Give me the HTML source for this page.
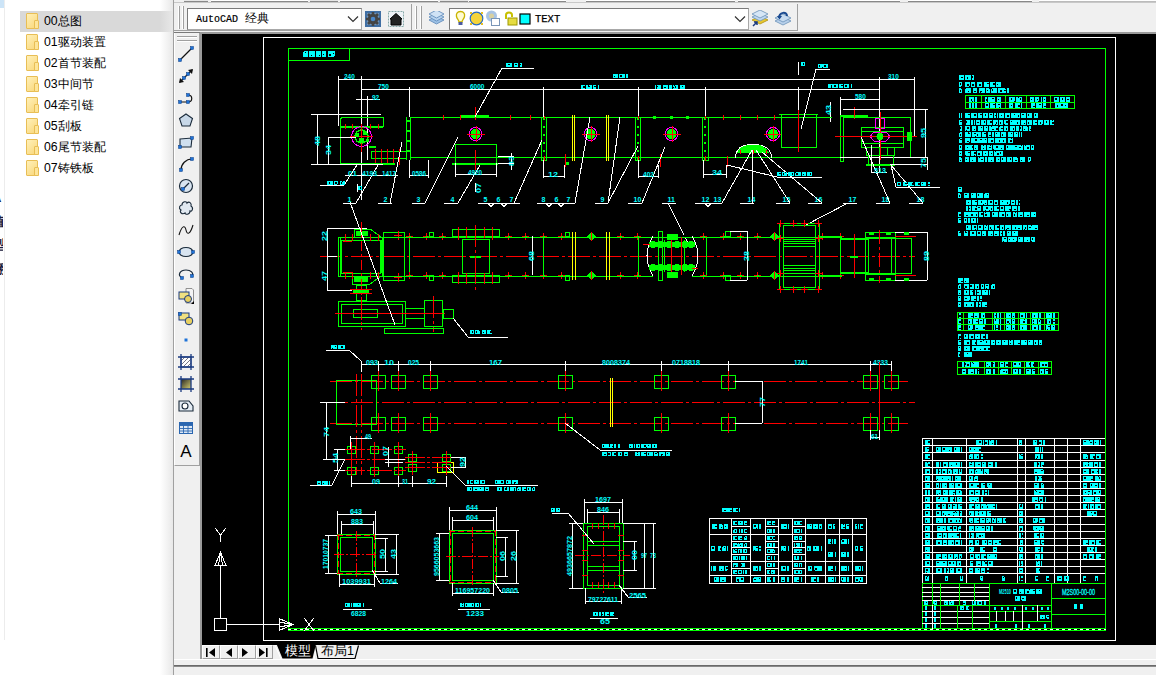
<!DOCTYPE html>
<html><head><meta charset="utf-8">
<style>
*{margin:0;padding:0;box-sizing:border-box}
html,body{width:1156px;height:675px;overflow:hidden;background:#f0f0f0;font-family:"Liberation Sans",sans-serif}
.abs{position:absolute}
#left{left:0;top:0;width:173px;height:675px;background:#fff}
#left .row{position:absolute;left:20px;width:153px;height:21px}
#left .row.sel{background:#d9d9d9}
#left .fold{position:absolute;left:6px;top:2px;width:12px;height:16px;background:linear-gradient(135deg,#fff0b8,#f9d77a);border:1px solid #e8be55;border-radius:1px}
#left .fold:after{content:"";position:absolute;right:-2px;bottom:-1px;width:3px;height:7px;background:#fde59a;border:1px solid #e8be55;border-radius:1px 1px 0 0}
#left .txt{position:absolute;left:24px;top:2px;font-size:12.3px;color:#000;line-height:17px;white-space:nowrap}
#cv{left:202px;top:34px;width:954px;height:611px;background:#000}
svg text{font-family:"Liberation Sans",sans-serif}
.combo{background:#fff;border:1px solid #7a7a7a;border-bottom-color:#a8a8a8;border-right-color:#a8a8a8}
.mono{font-family:"Liberation Mono",monospace;font-size:12px;color:#000;white-space:nowrap}
.tbtn{background:#f0f0f0;border:1px solid #fff;border-right-color:#a0a0a0;border-bottom-color:#a0a0a0}
</style></head><body>
<div id="left" class="abs">
  <div class="abs" style="left:0;top:0;width:4px;height:8px;background:#cce4f7"></div>
  <div class="abs" style="left:4px;top:0;width:1px;height:640px;background:#ececec"></div>
  <div class="row sel" style="top:11px"><div class="fold"></div><div class="txt">00总图</div></div>
  <div class="row" style="top:32px"><div class="fold"></div><div class="txt">01驱动装置</div></div>
  <div class="row" style="top:53px"><div class="fold"></div><div class="txt">02首节装配</div></div>
  <div class="row" style="top:74px"><div class="fold"></div><div class="txt">03中间节</div></div>
  <div class="row" style="top:95px"><div class="fold"></div><div class="txt">04牵引链</div></div>
  <div class="row" style="top:116px"><div class="fold"></div><div class="txt">05刮板</div></div>
  <div class="row" style="top:137px"><div class="fold"></div><div class="txt">06尾节装配</div></div>
  <div class="row" style="top:158px"><div class="fold"></div><div class="txt">07铸铁板</div></div>
  <div class="abs" style="left:0;top:186px;width:3px;height:95px;overflow:hidden"><div style="margin-left:-8px;font-size:13px;line-height:23.5px;color:#1a1a40;font-weight:bold">A<br>值<br>型<br>翻</div></div>
</div>
<div class="abs" style="left:160px;top:0;width:13px;height:675px;background:linear-gradient(to right,rgba(240,240,240,0),#e8e8e8)"></div>
<div class="abs" style="left:173px;top:0;width:1px;height:675px;background:#a0a0a0"></div>
<!-- top strip (bottom of previous toolbar row) -->
<div class="abs" style="left:174px;top:0;width:982px;height:3px;background:#f0f0f0;border-bottom:1px solid #c8c8c8"></div>
<div class="abs" style="left:184px;top:0;width:24px;height:2px;background:#e6e6e6;border-bottom:1px solid #888"></div>
<div class="abs" style="left:211px;top:0;width:97px;height:2px;background:#fff;border-bottom:1px solid #888"></div>
<div class="abs" style="left:310px;top:0;width:28px;height:2px;background:#e6e6e6;border-bottom:1px solid #888"></div>
<div class="abs" style="left:340px;top:0;width:98px;height:2px;background:#fff;border-bottom:1px solid #888"></div>
<div class="abs" style="left:440px;top:0;width:28px;height:2px;background:#e6e6e6;border-bottom:1px solid #888"></div>
<div class="abs" style="left:469px;top:0;width:97px;height:2px;background:#fff;border-bottom:1px solid #888"></div>
<div class="abs" style="left:586px;top:0;width:149px;height:2px;background:#fff;border-bottom:1px solid #888"></div>
<div class="abs" style="left:738px;top:0;width:162px;height:2px;background:#fff;border-bottom:1px solid #888"></div>
<div class="abs" style="left:908px;top:0;width:124px;height:2px;background:#fff;border-bottom:1px solid #888"></div>
<div class="abs" style="left:1039px;top:0;width:117px;height:2px;background:#fff;border-bottom:1px solid #bbb"></div>
<!-- toolbar 1 -->
<div class="abs" style="left:174px;top:4px;width:238px;height:27px;border-right:1px solid #a0a0a0;border-bottom:1px solid #a0a0a0;background:#f0f0f0"></div>
<div class="abs" style="left:178px;top:6px;width:2px;height:23px;border-left:1px solid #fff;border-right:1px solid #a0a0a0"></div>
<div class="abs" style="left:182px;top:6px;width:2px;height:23px;border-left:1px solid #fff;border-right:1px solid #a0a0a0"></div>
<div class="abs combo" style="left:187px;top:8px;width:175px;height:22px"></div>
<div class="abs mono" style="left:196px;top:12px;line-height:14px"><span style="font-size:10px;font-family:'Liberation Mono';-webkit-text-stroke:0.2px #000">AutoCAD</span><span style="font-size:12px"> 经典</span></div>
<svg class="abs" style="left:347px;top:15px" width="12" height="8"><path d="M1 1.5 L6 6.5 L11 1.5" stroke="#333" stroke-width="1.2" fill="none"/></svg>
<svg class="abs" style="left:365px;top:11px" width="16" height="16" viewBox="0 0 16 16">
 <rect x="0" y="0" width="16" height="16" fill="#3f6ea3"/>
 <rect x="2" y="2" width="12" height="12" fill="#9bb6d3" opacity="0.5"/>
 <circle cx="8" cy="8" r="5.2" fill="#444"/>
 <g stroke="#444" stroke-width="2.6"><line x1="8" y1="1" x2="8" y2="15"/><line x1="1" y1="8" x2="15" y2="8"/><line x1="3" y1="3" x2="13" y2="13"/><line x1="13" y1="3" x2="3" y2="13"/></g>
 <circle cx="8" cy="8" r="2.3" fill="#4a86c8"/>
</svg>
<svg class="abs" style="left:388px;top:11px" width="16" height="16" viewBox="0 0 16 16">
 <rect x="0.5" y="0.5" width="15" height="15" fill="#eef2f6" stroke="#8aa" stroke-dasharray="2 1"/>
 <path d="M2 8 L8 2.5 L14 8 L13 8 L13 14 L3 14 L3 8 Z" fill="#222" stroke="#000"/>
</svg>
<!-- toolbar 2 -->
<div class="abs" style="left:412px;top:4px;width:386px;height:27px;border-right:1px solid #a0a0a0;border-bottom:1px solid #a0a0a0;background:#f0f0f0"></div>
<div class="abs" style="left:415px;top:6px;width:2px;height:23px;border-left:1px solid #fff;border-right:1px solid #a0a0a0"></div>
<div class="abs" style="left:420px;top:6px;width:2px;height:23px;border-left:1px solid #fff;border-right:1px solid #a0a0a0"></div>
<svg class="abs" style="left:428px;top:11px" width="17" height="15" viewBox="0 0 17 15">
 <path d="M1 9 L8.5 13 L16 9 L8.5 5 Z" fill="#9cc0e4" stroke="#5a86b8" stroke-width="0.8"/>
 <path d="M1 6 L8.5 10 L16 6 L8.5 2 Z" fill="#b8d4ef" stroke="#5a86b8" stroke-width="0.8"/>
 <path d="M1 3 L8.5 7 L16 3 L8.5 -1 Z" fill="#cfe2f5" stroke="#5a86b8" stroke-width="0.8"/>
</svg>
<div class="abs combo" style="left:449px;top:8px;width:300px;height:22px"></div>
<svg class="abs" style="left:455px;top:10px" width="80" height="17" viewBox="0 0 80 17">
 <path d="M5.5 1.5 C2 1.5 1 4 1.5 6.5 C2 9 4 10 4 12 L7 12 C7 10 9 9 9.5 6.5 C10 4 9 1.5 5.5 1.5 Z" fill="#fffbd0" stroke="#c8b400" stroke-width="1.3"/>
 <rect x="3.5" y="12" width="4" height="3" fill="#4a5aa0"/>
 <circle cx="21.5" cy="8.5" r="6.3" fill="#f4d43a" stroke="#2a6bc0" stroke-width="1.2"/>
 <rect x="15" y="2" width="2" height="2" fill="#e8c020"/><rect x="26" y="2" width="2" height="2" fill="#e8c020"/><rect x="15" y="13" width="2" height="2" fill="#e8c020"/><rect x="26" y="13" width="2" height="2" fill="#e8c020"/>
 <circle cx="36.5" cy="6" r="5.5" fill="#a8c4e4"/><circle cx="36.5" cy="6" r="2.5" fill="#d8d0a0"/>
 <rect x="36.5" y="8.5" width="8" height="7" fill="#fff" stroke="#7a96b8"/>
 <path d="M51 9 L51 5 C51 1.5 57 1.5 57 5 L57 7" stroke="#c8c000" stroke-width="2" fill="none"/>
 <rect x="53" y="8" width="9" height="7" fill="#e6dc40" stroke="#a09a00"/>
 <rect x="65" y="4" width="10" height="10" fill="#00ffff" stroke="#000" stroke-width="1.2"/>
</svg>
<div class="abs mono" style="left:535px;top:12px;line-height:14px;font-size:10.5px;-webkit-text-stroke:0.25px #000">TEXT</div>
<svg class="abs" style="left:734px;top:15px" width="12" height="8"><path d="M1 1.5 L6 6.5 L11 1.5" stroke="#333" stroke-width="1.2" fill="none"/></svg>
<svg class="abs" style="left:751px;top:10px" width="18" height="17" viewBox="0 0 18 17">
 <path d="M1 10 L9 14 L17 10 L9 6 Z" fill="#e8c830" stroke="#b09010" stroke-width="0.8"/>
 <path d="M1 7 L9 11 L17 7 L9 3 Z" fill="#c0d8f0" stroke="#6a90b8" stroke-width="0.8"/>
 <path d="M1 4 L9 8 L17 4 L9 0 Z" fill="#d6e6f6" stroke="#6a90b8" stroke-width="0.8"/>
 <path d="M2 16 L6 12 M3 12 L6 12 L6 15" stroke="#1a3a80" stroke-width="1.5" fill="none"/>
</svg>
<svg class="abs" style="left:774px;top:10px" width="18" height="17" viewBox="0 0 18 17">
 <path d="M1 11 L9 15 L17 11 L9 7 Z" fill="#b8d0ea" stroke="#6a90b8" stroke-width="0.8"/>
 <path d="M1 8 L9 12 L17 8 L9 4 Z" fill="#c8dcf0" stroke="#6a90b8" stroke-width="0.8"/>
 <path d="M5 8 C5 2 13 1 13 6" stroke="#1a4a90" stroke-width="2" fill="none"/>
 <path d="M3 6 L5.5 9.5 L8 6 Z" fill="#1a4a90"/>
</svg>
<div class="abs" style="left:174px;top:31px;width:982px;height:2px;background:#f0f0f0;border-bottom:1px solid #7a7a7a"></div>
<!-- left draw toolbar -->
<div class="abs" style="left:174px;top:33px;width:26px;height:433px;background:#f0f0f0;border-right:1px solid #a0a0a0;border-bottom:1px solid #a0a0a0;border-left:1px solid #fff"></div>
<div class="abs" style="left:177px;top:36px;width:20px;height:2px;border-top:1px solid #a0a0a0;border-bottom:1px solid #fff"></div>
<div class="abs" style="left:177px;top:40px;width:20px;height:2px;border-top:1px solid #a0a0a0;border-bottom:1px solid #fff"></div>
<svg class="abs" style="left:174px;top:33px" width="26" height="433" viewBox="0 0 26 433">
<g transform="translate(4,13)"><line x1="2" y1="14" x2="14" y2="2" stroke="#111" stroke-width="1.2"/><rect x="0.5" y="12.5" width="3" height="3" fill="#1e73d8" stroke="#0a3a80" stroke-width="0.5"/><rect x="12.5" y="0.5" width="3" height="3" fill="#1e73d8" stroke="#0a3a80" stroke-width="0.5"/></g>
<g transform="translate(4,35)"><line x1="2" y1="14" x2="14" y2="2" stroke="#111" stroke-width="1.2"/><path d="M1 15 L2 10 L6 14 Z M15 1 L14 6 L10 2 Z" fill="#111"/><rect x="4.5" y="8.5" width="3" height="3" fill="#1e73d8" stroke="#0a3a80" stroke-width="0.5"/><rect x="8.5" y="4.5" width="3" height="3" fill="#1e73d8" stroke="#0a3a80" stroke-width="0.5"/></g>
<g transform="translate(4,57)"><path d="M2 12 L11 12 M10 5 C15 5 15 12 10 12" stroke="#111" stroke-width="1.2" fill="none"/><rect x="0.5" y="10.5" width="3" height="3" fill="#1e73d8" stroke="#0a3a80" stroke-width="0.5"/><rect x="8.5" y="10.5" width="3" height="3" fill="#1e73d8" stroke="#0a3a80" stroke-width="0.5"/><rect x="8.5" y="3.5" width="3" height="3" fill="#1e73d8" stroke="#0a3a80" stroke-width="0.5"/></g>
<g transform="translate(4,79)"><path d="M8 2 L14.5 6.5 L12 14 L4 14 L1.5 6.5 Z" fill="#c8d8e8" stroke="#1a2a3a" stroke-width="1.1"/></g>
<g transform="translate(4,101)"><path d="M2 5 L14 4 L13 13 L2 13 Z" fill="#d0e0ef" stroke="#1a2a3a" stroke-width="1.1"/><rect x="0.5" y="11.5" width="3" height="3" fill="#1e73d8" stroke="#0a3a80" stroke-width="0.5"/><rect x="12.5" y="2.5" width="3" height="3" fill="#1e73d8" stroke="#0a3a80" stroke-width="0.5"/></g>
<g transform="translate(4,123)"><path d="M3 14 C3 8 8 3 14 3" stroke="#111" stroke-width="1.2" fill="none"/><rect x="1.5" y="12.5" width="3" height="3" fill="#1e73d8" stroke="#0a3a80" stroke-width="0.5"/><rect x="12.5" y="1.5" width="3" height="3" fill="#1e73d8" stroke="#0a3a80" stroke-width="0.5"/></g>
<g transform="translate(4,145)"><circle cx="8" cy="8" r="6.5" fill="#d8e4f0" stroke="#1a2a3a" stroke-width="1.2"/><line x1="5" y1="11" x2="11" y2="5" stroke="#1a2a3a" stroke-width="1.2"/><rect x="3.5" y="9.5" width="3" height="3" fill="#1e73d8" stroke="#0a3a80" stroke-width="0.5"/></g>
<g transform="translate(4,167)"><path d="M4 5 C4 1 9 1 9 3 C11 1 14 3 13 6 C16 8 14 12 12 11 C12 15 7 15 7 13 C4 15 1 12 3 10 C0 8 2 5 4 5 Z" fill="#e0e8f0" stroke="#1a2a3a" stroke-width="1.1"/></g>
<g transform="translate(4,189)"><path d="M1 13 C4 3 7 3 8 8 C9 13 12 13 15 3" stroke="#111" stroke-width="1.1" fill="none"/></g>
<g transform="translate(4,211)"><ellipse cx="8" cy="8" rx="7" ry="4.5" fill="#d8e4f0" stroke="#1a2a3a" stroke-width="1.2"/><rect x="-0.5" y="6.5" width="3" height="3" fill="#1e73d8" stroke="#0a3a80" stroke-width="0.5"/><rect x="13.5" y="6.5" width="3" height="3" fill="#1e73d8" stroke="#0a3a80" stroke-width="0.5"/></g>
<g transform="translate(4,233)"><path d="M4 12 C-1 9 2 4 8 4 C13 4 16 7 14 10" stroke="#1a2a3a" stroke-width="1.2" fill="none"/><rect x="2.5" y="10.5" width="3" height="3" fill="#1e73d8" stroke="#0a3a80" stroke-width="0.5"/><rect x="12.5" y="8.5" width="3" height="3" fill="#1e73d8" stroke="#0a3a80" stroke-width="0.5"/></g>
<g transform="translate(4,255)"><path d="M8 0.5 L14 0.5 L15.5 2 L15.5 15 L8 15 Z" fill="#f4f4f4" stroke="#777" stroke-width="0.8"/><rect x="1" y="4" width="10" height="7" fill="#f0e080" stroke="#1a3a80"/><circle cx="10" cy="11" r="3.5" fill="#e8d060" stroke="#1a3a80"/><path d="M13 16 L16 13 L16 16 Z" fill="#000"/></g>
<g transform="translate(4,277)"><rect x="1" y="3" width="10" height="7" fill="#f0e080" stroke="#1a3a80"/><circle cx="11" cy="11" r="3.8" fill="#e8d060" stroke="#1a3a80"/><rect x="0.5" y="2.5" width="3" height="3" fill="#1e73d8" stroke="#0a3a80" stroke-width="0.5"/></g>
<g transform="translate(4,299)"><rect x="6.5" y="6.5" width="3" height="3" fill="#1e73d8"/></g>
<g transform="translate(4,321)"><rect x="3" y="3" width="10" height="10" fill="#fff" stroke="#1a3a80"/><path d="M3 7 L7 3 M3 11 L11 3 M5 13 L13 5 M9 13 L13 9" stroke="#667" stroke-width="0.9"/><path d="M0 3 L16 3 M0 13 L16 13 M3 0 L3 16 M13 0 L13 16" stroke="#1a3a80" stroke-width="1.3"/></g>
<g transform="translate(4,343)"><defs><linearGradient id="gr1" x1="0" y1="0" x2="1" y2="1"><stop offset="0" stop-color="#222"/><stop offset="1" stop-color="#d8d070"/></linearGradient></defs><rect x="3" y="3" width="10" height="10" fill="url(#gr1)"/><path d="M0 3 L16 3 M0 13 L16 13 M3 0 L3 16 M13 0 L13 16" stroke="#1a3a80" stroke-width="1.3"/></g>
<g transform="translate(4,365)"><path d="M1 3 L11 3 L15 8 L15 13 L1 13 Z" fill="#e4ecf4" stroke="#1a2a3a" stroke-width="1.1"/><circle cx="7" cy="8" r="3" fill="#fff" stroke="#1a2a3a" stroke-width="1.1"/></g>
<g transform="translate(4,387)"><rect x="1.5" y="2.5" width="13" height="11" fill="#dde8f5" stroke="#2a66b0"/><path d="M1.5 5.5 L14.5 5.5 M1.5 8.5 L14.5 8.5 M1.5 11 L14.5 11 M5.5 2.5 L5.5 13.5 M10 2.5 L10 13.5" stroke="#2a66b0" stroke-width="0.9"/><rect x="1.5" y="2.5" width="13" height="3" fill="#2a66b0"/></g>
<g transform="translate(4,409)"><text x="8" y="14.5" font-size="17" text-anchor="middle" fill="#000" font-family="Liberation Sans">A</text></g>
</svg>
<div class="abs" style="left:200px;top:32px;width:956px;height:613px;background:#fff;border-top:2px solid #9a9a9a;border-left:2px solid #9a9a9a;box-shadow:inset 1px 1px 0 #696969"></div>
<div id="cv" class="abs"></div>
<svg class="abs" style="left:0;top:0" width="1156" height="675" viewBox="0 0 1156 675">
<g shape-rendering="crispEdges">
<rect x="263.5" y="37.5" width="852" height="603" stroke="#ffffff" stroke-width="1" fill="none"/>
<line x1="288" y1="48.5" x2="1105" y2="48.5" stroke="#00ff00" stroke-width="1" />
<line x1="288.5" y1="48" x2="288.5" y2="631" stroke="#00ff00" stroke-width="1" />
<line x1="1105.5" y1="48" x2="1105.5" y2="631" stroke="#00ff00" stroke-width="1" />
<line x1="288" y1="628.5" x2="1106" y2="628.5" stroke="#00ff00" stroke-width="1" />
<line x1="288" y1="630.5" x2="1106" y2="630.5" stroke="#00ff00" stroke-width="1" />
<line x1="288" y1="629.5" x2="1106" y2="629.5" stroke="#ffffff" stroke-width="1" stroke-dasharray="3 3"/>
<rect x="288.5" y="48.5" width="61" height="12" stroke="#00ff00" stroke-width="1" fill="none"/>
<rect x="303" y="51" width="5" height="6" fill="#00ffff"/>
<rect x="305" y="52" width="1" height="1" fill="#000"/>
<rect x="303" y="51" width="1" height="1" fill="#000"/>
<rect x="309" y="51" width="6" height="6" fill="#00ffff"/>
<rect x="311" y="55" width="1" height="1" fill="#000"/>
<rect x="316" y="51" width="5" height="6" fill="#00ffff"/>
<rect x="319" y="55" width="1" height="1" fill="#000"/>
<rect x="322" y="51" width="5" height="6" fill="#00ffff"/>
<rect x="323" y="54" width="1" height="1" fill="#000"/>
<rect x="326" y="51" width="1" height="6" fill="#000"/>
<rect x="328" y="51" width="4" height="6" fill="#00ffff"/>
<rect x="329" y="54" width="2" height="2" fill="#000"/>
<rect x="332" y="51" width="3" height="6" fill="#00ffff"/>
<rect x="333" y="53" width="1" height="1" fill="#000"/>
<rect x="334" y="56" width="1" height="1" fill="#000"/>
<line x1="338" y1="79.5" x2="914" y2="79.5" stroke="#ffffff" stroke-width="1" />
<line x1="338.5" y1="76" x2="338.5" y2="126" stroke="#ffffff" stroke-width="1" />
<line x1="914.5" y1="77" x2="914.5" y2="137" stroke="#ffffff" stroke-width="1" />
<text x="344" y="78.5" fill="#00ffff" font-size="6.5" text-anchor="start" font-weight="bold">240</text>
<text x="470" y="88.5" fill="#00ffff" font-size="6.5" text-anchor="start" font-weight="bold">6000</text>
<rect x="613" y="74" width="5" height="4" fill="#00ffff"/>
<rect x="614" y="76" width="1" height="1" fill="#000"/>
<rect x="619" y="74" width="6" height="4" fill="#00ffff"/>
<rect x="620" y="75" width="2" height="2" fill="#000"/>
<rect x="623" y="77" width="1" height="-2" fill="#000"/>
<rect x="626" y="74" width="2" height="4" fill="#00ffff"/>
<text x="888" y="78.5" fill="#00ffff" font-size="6.5" text-anchor="start" font-weight="bold">310</text>
<line x1="361" y1="89.5" x2="879" y2="89.5" stroke="#ffffff" stroke-width="1" />
<line x1="361.5" y1="76" x2="361.5" y2="200" stroke="#ffffff" stroke-width="1" />
<text x="378" y="88.5" fill="#00ffff" font-size="6.5" text-anchor="start" font-weight="bold">750</text>
<rect x="581" y="85" width="4" height="4" fill="#00ffff"/>
<rect x="583" y="86" width="2" height="2" fill="#000"/>
<rect x="586" y="85" width="4" height="4" fill="#00ffff"/>
<rect x="588" y="86" width="2" height="1" fill="#000"/>
<rect x="588" y="85" width="1" height="1" fill="#000"/>
<rect x="590" y="85" width="6" height="4" fill="#00ffff"/>
<rect x="594" y="86" width="2" height="1" fill="#000"/>
<rect x="592" y="85" width="1" height="4" fill="#000"/>
<rect x="598" y="85" width="1" height="4" fill="#00ffff"/>
<rect x="655" y="85" width="6" height="4" fill="#00ffff"/>
<rect x="657" y="86" width="1" height="1" fill="#000"/>
<rect x="656" y="85" width="1" height="4" fill="#000"/>
<rect x="663" y="85" width="5" height="4" fill="#00ffff"/>
<rect x="664" y="87" width="2" height="1" fill="#000"/>
<rect x="669" y="85" width="5" height="4" fill="#00ffff"/>
<rect x="672" y="87" width="2" height="1" fill="#000"/>
<rect x="672" y="85" width="1" height="4" fill="#000"/>
<rect x="674" y="85" width="4" height="4" fill="#00ffff"/>
<rect x="675" y="86" width="1" height="2" fill="#000"/>
<rect x="674" y="85" width="1" height="1" fill="#000"/>
<rect x="680" y="85" width="5" height="4" fill="#00ffff"/>
<rect x="682" y="86" width="1" height="1" fill="#000"/>
<rect x="828" y="84" width="5" height="4" fill="#00ffff"/>
<rect x="831" y="85" width="1" height="2" fill="#000"/>
<rect x="831" y="87" width="1" height="1" fill="#000"/>
<rect x="833" y="84" width="5" height="4" fill="#00ffff"/>
<rect x="834" y="85" width="2" height="2" fill="#000"/>
<rect x="839" y="84" width="4" height="4" fill="#00ffff"/>
<rect x="841" y="85" width="2" height="1" fill="#000"/>
<rect x="844" y="84" width="5" height="4" fill="#00ffff"/>
<rect x="845" y="85" width="2" height="2" fill="#000"/>
<rect x="851" y="84" width="1" height="4" fill="#00ffff"/>
<line x1="409.5" y1="87" x2="409.5" y2="117" stroke="#ffffff" stroke-width="1" />
<line x1="543.5" y1="87" x2="543.5" y2="117" stroke="#ffffff" stroke-width="1" />
<line x1="638.5" y1="87" x2="638.5" y2="117" stroke="#ffffff" stroke-width="1" />
<line x1="705.5" y1="87" x2="705.5" y2="117" stroke="#ffffff" stroke-width="1" />
<line x1="798.5" y1="87" x2="798.5" y2="117" stroke="#ffffff" stroke-width="1" />
<line x1="879.5" y1="77" x2="879.5" y2="172" stroke="#ffffff" stroke-width="1" />
<line x1="840" y1="99.5" x2="879" y2="99.5" stroke="#ffffff" stroke-width="1" />
<line x1="840.5" y1="97" x2="840.5" y2="115" stroke="#ffffff" stroke-width="1" />
<text x="855" y="98.5" fill="#00ffff" font-size="6.5" text-anchor="start" font-weight="bold">580</text>
<line x1="798.5" y1="62" x2="798.5" y2="75" stroke="#ffffff" stroke-width="1" />
<rect x="801" y="62" width="4" height="4" fill="#00ffff"/>
<rect x="803" y="63" width="1" height="2" fill="#000"/>
<line x1="830.5" y1="102" x2="830.5" y2="122" stroke="#ffffff" stroke-width="1" />
<line x1="820" y1="117.5" x2="832" y2="117.5" stroke="#ffffff" stroke-width="1" />
<text x="0" y="0" transform="translate(831.0,115.0) rotate(-90)" fill="#00ffff" font-size="7" font-weight="bold" textLength="10" lengthAdjust="spacingAndGlyphs">43</text>
<line x1="356" y1="99.5" x2="380" y2="99.5" stroke="#ffffff" stroke-width="1" />
<line x1="367.5" y1="96" x2="367.5" y2="160" stroke="#ffffff" stroke-width="1" />
<text x="372" y="99.5" fill="#00ffff" font-size="6.5" text-anchor="start" font-weight="bold">92</text>
<line x1="311" y1="114.5" x2="381" y2="114.5" stroke="#ffffff" stroke-width="1" />
<path d="M340.5 163 L340.5 120 Q340.5 117.5 343 117.5 L383.5 117.5 L383.5 127" stroke="#00ff00" stroke-width="1" fill="none"/>
<line x1="340" y1="126.5" x2="383" y2="126.5" stroke="#00ff00" stroke-width="2" />
<line x1="340" y1="163.5" x2="374" y2="163.5" stroke="#00ff00" stroke-width="2" />
<line x1="345.5" y1="124" x2="345.5" y2="129" stroke="#ff0000" stroke-width="1" />
<line x1="352.5" y1="124" x2="352.5" y2="129" stroke="#ff0000" stroke-width="1" />
<line x1="370.5" y1="124" x2="370.5" y2="129" stroke="#ff0000" stroke-width="1" />
<line x1="378.5" y1="124" x2="378.5" y2="129" stroke="#ff0000" stroke-width="1" />
<circle cx="361.5" cy="136.5" r="10" stroke="#ff00ff" stroke-width="1" fill="none"/>
<circle cx="361.5" cy="136.5" r="6.5" stroke="#00ff00" stroke-width="1.5" fill="none"/>
<line x1="361.5" y1="124" x2="361.5" y2="152" stroke="#ff0000" stroke-width="1" />
<line x1="350" y1="136.5" x2="373" y2="136.5" stroke="#ff0000" stroke-width="1" />
<rect x="355" y="133" width="4" height="4" fill="#00ff00"/>
<rect x="363" y="131" width="4" height="4" fill="#00ff00"/>
<rect x="359" y="138" width="5" height="5" fill="#00ff00"/>
<rect x="366" y="139" width="3" height="3" fill="#00ff00"/>
<rect x="369" y="146" width="7" height="2" fill="#00ff00"/>
<rect x="371.5" y="151.5" width="35" height="7" stroke="#00ff00" stroke-width="1" fill="none"/>
<line x1="375.5" y1="149" x2="375.5" y2="165" stroke="#ff0000" stroke-width="1" />
<line x1="381.5" y1="149" x2="381.5" y2="165" stroke="#ff0000" stroke-width="1" />
<line x1="387.5" y1="149" x2="387.5" y2="165" stroke="#ff0000" stroke-width="1" />
<line x1="393.5" y1="149" x2="393.5" y2="165" stroke="#ff0000" stroke-width="1" />
<line x1="399.5" y1="149" x2="399.5" y2="165" stroke="#ff0000" stroke-width="1" />
<line x1="372" y1="163.5" x2="395" y2="163.5" stroke="#00ff00" stroke-width="2" />
<line x1="406.5" y1="117" x2="406.5" y2="160" stroke="#00ff00" stroke-width="1" />
<line x1="410.5" y1="117" x2="410.5" y2="160" stroke="#00ff00" stroke-width="1" />
<rect x="407" y="120" width="3" height="2" fill="#00ff00"/>
<rect x="407" y="130" width="3" height="2" fill="#00ff00"/>
<rect x="407" y="140" width="3" height="2" fill="#00ff00"/>
<rect x="407" y="150" width="3" height="2" fill="#00ff00"/>
<line x1="410" y1="117.5" x2="832" y2="117.5" stroke="#00ff00" stroke-width="1" />
<line x1="410" y1="157.5" x2="840" y2="157.5" stroke="#00ff00" stroke-width="1" />
<line x1="443.5" y1="115" x2="443.5" y2="120" stroke="#ff0000" stroke-width="1" />
<line x1="460.5" y1="115" x2="460.5" y2="120" stroke="#ff0000" stroke-width="1" />
<line x1="510.5" y1="115" x2="510.5" y2="120" stroke="#ff0000" stroke-width="1" />
<line x1="530.5" y1="115" x2="530.5" y2="120" stroke="#ff0000" stroke-width="1" />
<line x1="723.5" y1="115" x2="723.5" y2="120" stroke="#ff0000" stroke-width="1" />
<line x1="740.5" y1="115" x2="740.5" y2="120" stroke="#ff0000" stroke-width="1" />
<line x1="757.5" y1="115" x2="757.5" y2="120" stroke="#ff0000" stroke-width="1" />
<line x1="774.5" y1="115" x2="774.5" y2="120" stroke="#ff0000" stroke-width="1" />
<line x1="461" y1="115.5" x2="489" y2="115.5" stroke="#00ff00" stroke-width="2" />
<line x1="475.5" y1="107" x2="475.5" y2="120" stroke="#ff0000" stroke-width="1" />
<circle cx="475.5" cy="134" r="6.5" stroke="#ff00ff" stroke-width="1" fill="none"/>
<circle cx="475.5" cy="134" r="4.5" stroke="#00ff00" stroke-width="1" fill="#00ff00"/>
<line x1="466.5" y1="134.5" x2="484.5" y2="134.5" stroke="#ff0000" stroke-width="1" />
<line x1="476.0" y1="126" x2="476.0" y2="142" stroke="#ff0000" stroke-width="1" />
<circle cx="590.5" cy="134" r="6.5" stroke="#ff00ff" stroke-width="1" fill="none"/>
<circle cx="590.5" cy="134" r="4.5" stroke="#00ff00" stroke-width="1" fill="#00ff00"/>
<line x1="581.5" y1="134.5" x2="599.5" y2="134.5" stroke="#ff0000" stroke-width="1" />
<line x1="591.0" y1="126" x2="591.0" y2="142" stroke="#ff0000" stroke-width="1" />
<circle cx="671.5" cy="134" r="6.5" stroke="#ff00ff" stroke-width="1" fill="none"/>
<circle cx="671.5" cy="134" r="4.5" stroke="#00ff00" stroke-width="1" fill="#00ff00"/>
<line x1="662.5" y1="134.5" x2="680.5" y2="134.5" stroke="#ff0000" stroke-width="1" />
<line x1="672.0" y1="126" x2="672.0" y2="142" stroke="#ff0000" stroke-width="1" />
<circle cx="773" cy="134" r="6.5" stroke="#ff00ff" stroke-width="1" fill="none"/>
<circle cx="773" cy="134" r="4.5" stroke="#00ff00" stroke-width="1" fill="#00ff00"/>
<line x1="764" y1="134.5" x2="782" y2="134.5" stroke="#ff0000" stroke-width="1" />
<line x1="773.5" y1="126" x2="773.5" y2="142" stroke="#ff0000" stroke-width="1" />
<rect x="455.5" y="144.5" width="41" height="19" stroke="#00ff00" stroke-width="1" fill="none"/>
<line x1="452" y1="163.5" x2="498" y2="163.5" stroke="#00ff00" stroke-width="2" />
<line x1="475.5" y1="150" x2="475.5" y2="170" stroke="#ff0000" stroke-width="1" />
<rect x="541.5" y="117.5" width="5" height="43" stroke="#00ff00" stroke-width="1" fill="none"/>
<rect x="635.5" y="117.5" width="5" height="43" stroke="#00ff00" stroke-width="1" fill="none"/>
<rect x="702.5" y="117.5" width="6" height="43" stroke="#00ff00" stroke-width="1" fill="none"/>
<rect x="543" y="118" width="2" height="2" fill="#00ff00"/>
<rect x="543" y="126" width="2" height="2" fill="#00ff00"/>
<rect x="543" y="134" width="2" height="2" fill="#00ff00"/>
<rect x="543" y="142" width="2" height="2" fill="#00ff00"/>
<rect x="543" y="150" width="2" height="2" fill="#00ff00"/>
<rect x="543" y="158" width="2" height="2" fill="#00ff00"/>
<line x1="544.5" y1="116" x2="544.5" y2="119" stroke="#ff0000" stroke-width="1" />
<line x1="544.5" y1="156" x2="544.5" y2="161" stroke="#ff0000" stroke-width="1" />
<rect x="637" y="118" width="2" height="2" fill="#00ff00"/>
<rect x="637" y="126" width="2" height="2" fill="#00ff00"/>
<rect x="637" y="134" width="2" height="2" fill="#00ff00"/>
<rect x="637" y="142" width="2" height="2" fill="#00ff00"/>
<rect x="637" y="150" width="2" height="2" fill="#00ff00"/>
<rect x="637" y="158" width="2" height="2" fill="#00ff00"/>
<line x1="638.5" y1="116" x2="638.5" y2="119" stroke="#ff0000" stroke-width="1" />
<line x1="638.5" y1="156" x2="638.5" y2="161" stroke="#ff0000" stroke-width="1" />
<rect x="704" y="118" width="2" height="2" fill="#00ff00"/>
<rect x="704" y="126" width="2" height="2" fill="#00ff00"/>
<rect x="704" y="134" width="2" height="2" fill="#00ff00"/>
<rect x="704" y="142" width="2" height="2" fill="#00ff00"/>
<rect x="704" y="150" width="2" height="2" fill="#00ff00"/>
<rect x="704" y="158" width="2" height="2" fill="#00ff00"/>
<line x1="705.5" y1="116" x2="705.5" y2="119" stroke="#ff0000" stroke-width="1" />
<line x1="705.5" y1="156" x2="705.5" y2="161" stroke="#ff0000" stroke-width="1" />
<line x1="572.5" y1="115" x2="572.5" y2="161" stroke="#ffff00" stroke-width="1" />
<line x1="574.5" y1="115" x2="574.5" y2="161" stroke="#ffff00" stroke-width="1" />
<line x1="606.5" y1="115" x2="606.5" y2="161" stroke="#ffff00" stroke-width="1" />
<line x1="608.5" y1="115" x2="608.5" y2="161" stroke="#ffff00" stroke-width="1" />
<rect x="653" y="116" width="3" height="3" fill="#00ff00"/>
<rect x="670" y="116" width="3" height="3" fill="#00ff00"/>
<rect x="686" y="116" width="3" height="3" fill="#00ff00"/>
<line x1="565.5" y1="154" x2="565.5" y2="167" stroke="#ff0000" stroke-width="1" />
<line x1="660.5" y1="154" x2="660.5" y2="167" stroke="#ff0000" stroke-width="1" />
<line x1="727.5" y1="156" x2="727.5" y2="167" stroke="#ff0000" stroke-width="1" />
<rect x="566" y="162" width="3" height="3" fill="#00ff00"/>
<path d="M735.5 158 C735.5 147 744 144.5 753 144.5 C762 144.5 771.5 147 771.5 158" stroke="#ffffff" stroke-width="1" fill="none"/>
<path d="M738 152 C741 146 747 145 753 145 C759 145 765 146 768 152 Z" stroke="#00ff00" stroke-width="1" fill="#00ff00"/>
<line x1="740.5" y1="150" x2="740.5" y2="154" stroke="#ff0000" stroke-width="1" />
<line x1="753.5" y1="150" x2="753.5" y2="154" stroke="#ff0000" stroke-width="1" />
<line x1="766.5" y1="150" x2="766.5" y2="154" stroke="#ff0000" stroke-width="1" />
<rect x="781.5" y="114.5" width="35" height="33" stroke="#00ff00" stroke-width="1" fill="none"/>
<line x1="779" y1="114.5" x2="818" y2="114.5" stroke="#00ff00" stroke-width="1" />
<line x1="798.5" y1="110" x2="798.5" y2="152" stroke="#ff0000" stroke-width="1" />
<line x1="813" y1="117.5" x2="832" y2="117.5" stroke="#00ff00" stroke-width="1" />
<rect x="840.5" y="115.5" width="3" height="46" stroke="#00ff00" stroke-width="1" fill="none"/>
<line x1="840" y1="115.5" x2="868" y2="115.5" stroke="#00ff00" stroke-width="2" />
<line x1="854.5" y1="107" x2="854.5" y2="119" stroke="#ff0000" stroke-width="1" />
<line x1="843" y1="117.5" x2="910" y2="117.5" stroke="#00ff00" stroke-width="1" />
<line x1="910.5" y1="117" x2="910.5" y2="158" stroke="#00ff00" stroke-width="1" />
<line x1="840" y1="157.5" x2="927" y2="157.5" stroke="#ffffff" stroke-width="1" />
<rect x="861.5" y="127.5" width="42" height="20" stroke="#00ff00" stroke-width="1" fill="none"/>
<line x1="861" y1="131.5" x2="903" y2="131.5" stroke="#00ff00" stroke-width="1" />
<line x1="861" y1="143.5" x2="903" y2="143.5" stroke="#00ff00" stroke-width="1" />
<rect x="866.5" y="147.5" width="28" height="8" stroke="#00ff00" stroke-width="1" fill="none"/>
<line x1="879.5" y1="147" x2="879.5" y2="155" stroke="#00ff00" stroke-width="1" />
<line x1="887.5" y1="147" x2="887.5" y2="155" stroke="#00ff00" stroke-width="1" />
<line x1="866" y1="164.5" x2="895" y2="164.5" stroke="#00ff00" stroke-width="2" />
<line x1="868.5" y1="155" x2="868.5" y2="165" stroke="#00ff00" stroke-width="1" />
<line x1="893.5" y1="155" x2="893.5" y2="165" stroke="#00ff00" stroke-width="1" />
<path d="M870 136.5 L874 132 L886 132 L890 136.5 L886 141 L874 141 Z" stroke="#ff00ff" stroke-width="1" fill="none"/>
<rect x="875.5" y="118.5" width="9" height="10" stroke="#ff00ff" stroke-width="1" fill="none"/>
<line x1="835" y1="136.5" x2="917" y2="136.5" stroke="#ff0000" stroke-width="1" />
<line x1="880.5" y1="112" x2="880.5" y2="160" stroke="#ff0000" stroke-width="1" />
<circle cx="880" cy="136.5" r="3" stroke="#00ff00" stroke-width="1" fill="#00ff00"/>
<rect x="907" y="132" width="5" height="9" fill="#00ff00"/>
<line x1="843" y1="109.5" x2="928" y2="109.5" stroke="#ffffff" stroke-width="1" />
<line x1="925.5" y1="109" x2="925.5" y2="157" stroke="#ffffff" stroke-width="1" />
<line x1="927.5" y1="157" x2="927.5" y2="170" stroke="#ffffff" stroke-width="1" />
<line x1="890" y1="164.5" x2="928" y2="164.5" stroke="#ffffff" stroke-width="1" />
<text x="0" y="0" transform="translate(926.0,138.0) rotate(-90)" fill="#00ffff" font-size="7" font-weight="bold" textLength="10" lengthAdjust="spacingAndGlyphs">95</text>
<text x="0" y="0" transform="translate(926.0,168.0) rotate(-90)" fill="#00ffff" font-size="7" font-weight="bold" textLength="10" lengthAdjust="spacingAndGlyphs">75</text>
<text x="347.5" y="202" fill="#00ffff" font-size="7" text-anchor="start" font-weight="bold">1</text>
<text x="383.5" y="202" fill="#00ffff" font-size="7" text-anchor="start" font-weight="bold">2</text>
<text x="416.5" y="202" fill="#00ffff" font-size="7" text-anchor="start" font-weight="bold">3</text>
<text x="450.5" y="202" fill="#00ffff" font-size="7" text-anchor="start" font-weight="bold">4</text>
<text x="483.5" y="202" fill="#00ffff" font-size="7" text-anchor="start" font-weight="bold">5</text>
<text x="496.5" y="202" fill="#00ffff" font-size="7" text-anchor="start" font-weight="bold">6</text>
<text x="509.5" y="202" fill="#00ffff" font-size="7" text-anchor="start" font-weight="bold">7</text>
<text x="541.5" y="202" fill="#00ffff" font-size="7" text-anchor="start" font-weight="bold">8</text>
<text x="554.5" y="202" fill="#00ffff" font-size="7" text-anchor="start" font-weight="bold">6</text>
<text x="566.5" y="202" fill="#00ffff" font-size="7" text-anchor="start" font-weight="bold">7</text>
<text x="600.5" y="202" fill="#00ffff" font-size="7" text-anchor="start" font-weight="bold">9</text>
<text x="633.5" y="202" fill="#00ffff" font-size="7" text-anchor="start" font-weight="bold">10</text>
<text x="667.5" y="202" fill="#00ffff" font-size="7" text-anchor="start" font-weight="bold">11</text>
<text x="701.5" y="202" fill="#00ffff" font-size="7" text-anchor="start" font-weight="bold">12</text>
<text x="713.5" y="202" fill="#00ffff" font-size="7" text-anchor="start" font-weight="bold">13</text>
<text x="747.5" y="202" fill="#00ffff" font-size="7" text-anchor="start" font-weight="bold">14</text>
<text x="782.5" y="202" fill="#00ffff" font-size="7" text-anchor="start" font-weight="bold">15</text>
<text x="814.5" y="202" fill="#00ffff" font-size="7" text-anchor="start" font-weight="bold">16</text>
<text x="848.5" y="202" fill="#00ffff" font-size="7" text-anchor="start" font-weight="bold">17</text>
<text x="881.5" y="202" fill="#00ffff" font-size="7" text-anchor="start" font-weight="bold">18</text>
<text x="916.5" y="202" fill="#00ffff" font-size="7" text-anchor="start" font-weight="bold">18</text>
<line x1="343" y1="203.5" x2="356" y2="203.5" stroke="#ffffff" stroke-width="1" />
<line x1="378" y1="203.5" x2="392" y2="203.5" stroke="#ffffff" stroke-width="1" />
<line x1="412" y1="203.5" x2="425" y2="203.5" stroke="#ffffff" stroke-width="1" />
<line x1="444" y1="203.5" x2="458" y2="203.5" stroke="#ffffff" stroke-width="1" />
<line x1="478" y1="203.5" x2="520" y2="203.5" stroke="#ffffff" stroke-width="1" />
<line x1="537" y1="203.5" x2="575" y2="203.5" stroke="#ffffff" stroke-width="1" />
<line x1="595" y1="203.5" x2="608" y2="203.5" stroke="#ffffff" stroke-width="1" />
<line x1="628" y1="203.5" x2="642" y2="203.5" stroke="#ffffff" stroke-width="1" />
<line x1="662" y1="203.5" x2="676" y2="203.5" stroke="#ffffff" stroke-width="1" />
<line x1="695" y1="203.5" x2="722" y2="203.5" stroke="#ffffff" stroke-width="1" />
<line x1="740" y1="203.5" x2="754" y2="203.5" stroke="#ffffff" stroke-width="1" />
<line x1="776" y1="203.5" x2="790" y2="203.5" stroke="#ffffff" stroke-width="1" />
<line x1="808" y1="203.5" x2="822" y2="203.5" stroke="#ffffff" stroke-width="1" />
<line x1="843" y1="203.5" x2="857" y2="203.5" stroke="#ffffff" stroke-width="1" />
<line x1="876" y1="203.5" x2="890" y2="203.5" stroke="#ffffff" stroke-width="1" />
<line x1="909" y1="203.5" x2="923" y2="203.5" stroke="#ffffff" stroke-width="1" />
<path d="M488 203.5 L491 206.5 L494 203.5" stroke="#ffffff" stroke-width="1" fill="none"/>
<path d="M501 203.5 L504 206.5 L507 203.5" stroke="#ffffff" stroke-width="1" fill="none"/>
<path d="M546 203.5 L549 206.5 L552 203.5" stroke="#ffffff" stroke-width="1" fill="none"/>
<path d="M558 203.5 L561 206.5 L564 203.5" stroke="#ffffff" stroke-width="1" fill="none"/>
<path d="M705 203.5 L708 206.5 L711 203.5" stroke="#ffffff" stroke-width="1" fill="none"/>
<line x1="356" y1="203" x2="378" y2="165" stroke="#ffffff" stroke-width="1" />
<line x1="390" y1="203" x2="402" y2="142" stroke="#ffffff" stroke-width="1" />
<line x1="425" y1="203" x2="458" y2="137" stroke="#ffffff" stroke-width="1" />
<line x1="458" y1="203" x2="480" y2="165" stroke="#ffffff" stroke-width="1" />
<line x1="514" y1="203" x2="542" y2="140" stroke="#ffffff" stroke-width="1" />
<line x1="575" y1="203" x2="590" y2="117" stroke="#ffffff" stroke-width="1" />
<line x1="608" y1="203" x2="620" y2="117" stroke="#ffffff" stroke-width="1" />
<line x1="608" y1="203" x2="638" y2="146" stroke="#ffffff" stroke-width="1" />
<line x1="642" y1="203" x2="665" y2="147" stroke="#ffffff" stroke-width="1" />
<line x1="668" y1="203" x2="688" y2="243" stroke="#ffffff" stroke-width="1" />
<line x1="722" y1="203" x2="752" y2="150" stroke="#ffffff" stroke-width="1" />
<line x1="752" y1="203" x2="752" y2="150" stroke="#ffffff" stroke-width="1" />
<line x1="790" y1="203" x2="756" y2="150" stroke="#ffffff" stroke-width="1" />
<line x1="822" y1="203" x2="762" y2="152" stroke="#ffffff" stroke-width="1" />
<line x1="848" y1="203" x2="804" y2="226" stroke="#ffffff" stroke-width="1" />
<line x1="890" y1="203" x2="861" y2="137" stroke="#ffffff" stroke-width="1" />
<line x1="923" y1="203" x2="891" y2="165" stroke="#ffffff" stroke-width="1" />
<line x1="871" y1="145" x2="872" y2="173" stroke="#ffffff" stroke-width="1" />
<line x1="872" y1="172.5" x2="887" y2="172.5" stroke="#ffffff" stroke-width="1" />
<text x="874" y="172.5" fill="#00ffff" font-size="7" font-weight="bold" textLength="12" lengthAdjust="spacingAndGlyphs">513</text>
<line x1="891" y1="165" x2="896" y2="187" stroke="#ffffff" stroke-width="1" />
<line x1="896" y1="187.5" x2="940" y2="187.5" stroke="#ffffff" stroke-width="1" />
<rect x="897" y="182" width="4" height="4" fill="#00ffff"/>
<rect x="898" y="183" width="2" height="2" fill="#000"/>
<rect x="903" y="182" width="4" height="4" fill="#00ffff"/>
<rect x="905" y="183" width="2" height="1" fill="#000"/>
<rect x="908" y="182" width="6" height="4" fill="#00ffff"/>
<rect x="912" y="183" width="2" height="2" fill="#000"/>
<rect x="913" y="182" width="1" height="1" fill="#000"/>
<rect x="915" y="182" width="5" height="4" fill="#00ffff"/>
<rect x="918" y="183" width="2" height="2" fill="#000"/>
<rect x="921" y="182" width="5" height="4" fill="#00ffff"/>
<rect x="922" y="183" width="1" height="1" fill="#000"/>
<rect x="922" y="185" width="1" height="-2" fill="#000"/>
<rect x="927" y="182" width="3" height="4" fill="#00ffff"/>
<rect x="928" y="184" width="2" height="1" fill="#000"/>
<rect x="927" y="182" width="1" height="4" fill="#000"/>
<line x1="475" y1="117" x2="502" y2="68" stroke="#ffffff" stroke-width="1" />
<line x1="502" y1="68.5" x2="534" y2="68.5" stroke="#ffffff" stroke-width="1" />
<rect x="506" y="63" width="6" height="4" fill="#00ffff"/>
<rect x="508" y="64" width="2" height="1" fill="#000"/>
<rect x="514" y="63" width="4" height="4" fill="#00ffff"/>
<rect x="515" y="64" width="2" height="1" fill="#000"/>
<rect x="519" y="63" width="3" height="4" fill="#00ffff"/>
<rect x="520" y="64" width="1" height="1" fill="#000"/>
<rect x="519" y="63" width="1" height="4" fill="#000"/>
<line x1="801" y1="129" x2="816" y2="69" stroke="#ffffff" stroke-width="1" />
<line x1="816" y1="69.5" x2="830" y2="69.5" stroke="#ffffff" stroke-width="1" />
<rect x="818" y="64" width="4" height="4" fill="#00ffff"/>
<rect x="819" y="65" width="1" height="2" fill="#000"/>
<rect x="822" y="64" width="6" height="4" fill="#00ffff"/>
<rect x="824" y="65" width="2" height="2" fill="#000"/>
<rect x="822" y="67" width="1" height="1" fill="#000"/>
<line x1="727" y1="165" x2="777" y2="177" stroke="#ffffff" stroke-width="1" />
<line x1="777" y1="177.5" x2="822" y2="177.5" stroke="#ffffff" stroke-width="1" />
<rect x="777" y="172" width="4" height="4" fill="#00ffff"/>
<rect x="779" y="173" width="2" height="1" fill="#000"/>
<rect x="782" y="172" width="5" height="4" fill="#00ffff"/>
<rect x="783" y="173" width="1" height="2" fill="#000"/>
<rect x="785" y="172" width="1" height="1" fill="#000"/>
<rect x="788" y="172" width="6" height="4" fill="#00ffff"/>
<rect x="792" y="173" width="1" height="2" fill="#000"/>
<rect x="788" y="175" width="1" height="-2" fill="#000"/>
<rect x="795" y="172" width="6" height="4" fill="#00ffff"/>
<rect x="796" y="173" width="2" height="2" fill="#000"/>
<rect x="795" y="172" width="1" height="1" fill="#000"/>
<rect x="802" y="172" width="4" height="4" fill="#00ffff"/>
<rect x="803" y="174" width="1" height="1" fill="#000"/>
<rect x="807" y="172" width="5" height="4" fill="#00ffff"/>
<rect x="810" y="173" width="1" height="2" fill="#000"/>
<rect x="808" y="175" width="1" height="-2" fill="#000"/>
<line x1="345" y1="175.5" x2="398" y2="175.5" stroke="#ffffff" stroke-width="1" />
<text x="348" y="175.5" fill="#00ffff" font-size="7" font-weight="bold" textLength="9" lengthAdjust="spacingAndGlyphs">01</text>
<text x="362" y="175.5" fill="#00ffff" font-size="7" font-weight="bold" textLength="15" lengthAdjust="spacingAndGlyphs">4193</text>
<text x="382" y="175.5" fill="#00ffff" font-size="7" font-weight="bold" textLength="14" lengthAdjust="spacingAndGlyphs">1417</text>
<line x1="409.5" y1="160" x2="409.5" y2="178" stroke="#ffffff" stroke-width="1" />
<line x1="428.5" y1="160" x2="428.5" y2="178" stroke="#ffffff" stroke-width="1" />
<line x1="409" y1="175.5" x2="428" y2="175.5" stroke="#ffffff" stroke-width="1" />
<text x="412" y="175.5" fill="#00ffff" font-size="7" font-weight="bold" textLength="14" lengthAdjust="spacingAndGlyphs">0586</text>
<line x1="455" y1="174.5" x2="496" y2="174.5" stroke="#ffffff" stroke-width="1" />
<line x1="455.5" y1="163" x2="455.5" y2="177" stroke="#ffffff" stroke-width="1" />
<line x1="496.5" y1="163" x2="496.5" y2="177" stroke="#ffffff" stroke-width="1" />
<text x="468" y="174.5" fill="#00ffff" font-size="7" font-weight="bold" textLength="14" lengthAdjust="spacingAndGlyphs">4920</text>
<line x1="511.5" y1="153" x2="511.5" y2="170" stroke="#ffffff" stroke-width="1" />
<text x="0" y="0" transform="translate(514.0,166.0) rotate(-90)" fill="#00ffff" font-size="7" font-weight="bold" textLength="10" lengthAdjust="spacingAndGlyphs">83</text>
<line x1="498" y1="156.5" x2="514" y2="156.5" stroke="#ffffff" stroke-width="1" />
<line x1="498" y1="163.5" x2="514" y2="163.5" stroke="#ffffff" stroke-width="1" />
<line x1="543.5" y1="160" x2="543.5" y2="178" stroke="#ffffff" stroke-width="1" />
<line x1="564.5" y1="165" x2="564.5" y2="178" stroke="#ffffff" stroke-width="1" />
<line x1="543" y1="176.5" x2="564" y2="176.5" stroke="#ffffff" stroke-width="1" />
<text x="548" y="176.5" fill="#00ffff" font-size="7" font-weight="bold" textLength="10" lengthAdjust="spacingAndGlyphs">12</text>
<line x1="638.5" y1="160" x2="638.5" y2="178" stroke="#ffffff" stroke-width="1" />
<line x1="658.5" y1="165" x2="658.5" y2="178" stroke="#ffffff" stroke-width="1" />
<line x1="638" y1="176.5" x2="658" y2="176.5" stroke="#ffffff" stroke-width="1" />
<text x="643" y="176.5" fill="#00ffff" font-size="7" font-weight="bold" textLength="11" lengthAdjust="spacingAndGlyphs">402</text>
<line x1="703.5" y1="160" x2="703.5" y2="178" stroke="#ffffff" stroke-width="1" />
<line x1="726.5" y1="165" x2="726.5" y2="178" stroke="#ffffff" stroke-width="1" />
<line x1="703" y1="174.5" x2="726" y2="174.5" stroke="#ffffff" stroke-width="1" />
<text x="712" y="174.5" fill="#00ffff" font-size="7" font-weight="bold" textLength="10" lengthAdjust="spacingAndGlyphs">34</text>
<line x1="317.5" y1="115" x2="317.5" y2="165" stroke="#ffffff" stroke-width="1" />
<line x1="328.5" y1="137" x2="328.5" y2="165" stroke="#ffffff" stroke-width="1" />
<line x1="328" y1="137.5" x2="356" y2="137.5" stroke="#ffffff" stroke-width="1" />
<line x1="311" y1="164.5" x2="383" y2="164.5" stroke="#ffffff" stroke-width="1" />
<text x="0" y="0" transform="translate(320.0,146.0) rotate(-90)" fill="#00ffff" font-size="7" font-weight="bold" textLength="10" lengthAdjust="spacingAndGlyphs">48</text>
<text x="0" y="0" transform="translate(331.0,155.0) rotate(-90)" fill="#00ffff" font-size="7" font-weight="bold" textLength="10" lengthAdjust="spacingAndGlyphs">34</text>
<line x1="320" y1="185.5" x2="344" y2="185.5" stroke="#ffffff" stroke-width="1" />
<line x1="344" y1="185" x2="357" y2="165" stroke="#ffffff" stroke-width="1" />
<rect x="327" y="181" width="6" height="4" fill="#00ffff"/>
<rect x="329" y="182" width="1" height="2" fill="#000"/>
<rect x="334" y="181" width="4" height="4" fill="#00ffff"/>
<rect x="335" y="182" width="2" height="2" fill="#000"/>
<rect x="337" y="184" width="1" height="1" fill="#000"/>
<rect x="340" y="181" width="5" height="4" fill="#00ffff"/>
<rect x="341" y="182" width="1" height="2" fill="#000"/>
<rect x="342" y="181" width="1" height="1" fill="#000"/>
<line x1="357.5" y1="184" x2="357.5" y2="192" stroke="#ffffff" stroke-width="1" />
<rect x="358" y="186" width="4" height="4" fill="#00ffff"/>
<rect x="360" y="187" width="1" height="2" fill="#000"/>
<rect x="361" y="189" width="1" height="-2" fill="#000"/>
<line x1="475.5" y1="183" x2="475.5" y2="192" stroke="#ffffff" stroke-width="1" />
<text x="0" y="0" transform="translate(481.0,193.0) rotate(-90)" fill="#00ffff" font-size="7" font-weight="bold" textLength="10" lengthAdjust="spacingAndGlyphs">07</text>
<line x1="404" y1="237.5" x2="841" y2="237.5" stroke="#00ff00" stroke-width="1" />
<line x1="404" y1="276.5" x2="841" y2="276.5" stroke="#00ff00" stroke-width="1" />
<line x1="320" y1="256.5" x2="915" y2="256.5" stroke="#ff0000" stroke-width="1" stroke-dasharray="22 3 3 3"/>
<line x1="327.5" y1="228" x2="327.5" y2="290" stroke="#ffffff" stroke-width="1" />
<line x1="327" y1="228.5" x2="367" y2="228.5" stroke="#ffffff" stroke-width="1" />
<line x1="327" y1="256.5" x2="337" y2="256.5" stroke="#ffffff" stroke-width="1" />
<line x1="327" y1="290.5" x2="352" y2="290.5" stroke="#ffffff" stroke-width="1" />
<text x="0" y="0" transform="translate(326.5,241.0) rotate(-90)" fill="#00ffff" font-size="7" font-weight="bold" textLength="10" lengthAdjust="spacingAndGlyphs">22</text>
<text x="0" y="0" transform="translate(326.5,281.0) rotate(-90)" fill="#00ffff" font-size="7" font-weight="bold" textLength="10" lengthAdjust="spacingAndGlyphs">47</text>
<rect x="338.5" y="237.5" width="44" height="39" stroke="#00ff00" stroke-width="1" fill="none"/>
<line x1="340.5" y1="237" x2="340.5" y2="276" stroke="#00ff00" stroke-width="1" />
<rect x="341.5" y="240.5" width="39" height="33" stroke="#00ff00" stroke-width="1" fill="none"/>
<line x1="381.5" y1="240" x2="381.5" y2="273" stroke="#00ff00" stroke-width="2" />
<path d="M354 237 L354 229 L370 229 L381 237" stroke="#00ff00" stroke-width="1" fill="none"/>
<rect x="356" y="231" width="12" height="5" fill="#00ff00"/>
<path d="M352 276 L352 284 L370 284 L381 276" stroke="#00ff00" stroke-width="1" fill="none"/>
<rect x="354" y="277" width="14" height="5" fill="#00ff00"/>
<line x1="345.5" y1="234" x2="345.5" y2="241" stroke="#ff0000" stroke-width="1" />
<line x1="345.5" y1="272" x2="345.5" y2="279" stroke="#ff0000" stroke-width="1" />
<line x1="352.5" y1="234" x2="352.5" y2="241" stroke="#ff0000" stroke-width="1" />
<line x1="352.5" y1="272" x2="352.5" y2="279" stroke="#ff0000" stroke-width="1" />
<line x1="370.5" y1="234" x2="370.5" y2="241" stroke="#ff0000" stroke-width="1" />
<line x1="370.5" y1="272" x2="370.5" y2="279" stroke="#ff0000" stroke-width="1" />
<line x1="378.5" y1="234" x2="378.5" y2="241" stroke="#ff0000" stroke-width="1" />
<line x1="378.5" y1="272" x2="378.5" y2="279" stroke="#ff0000" stroke-width="1" />
<line x1="343" y1="241.5" x2="352" y2="241.5" stroke="#ff0000" stroke-width="1" />
<line x1="343" y1="272.5" x2="352" y2="272.5" stroke="#ff0000" stroke-width="1" />
<line x1="361.5" y1="222" x2="361.5" y2="320" stroke="#ff0000" stroke-width="1" stroke-dasharray="10 3 3 3"/>
<rect x="383.5" y="232.5" width="21" height="48" stroke="#00ff00" stroke-width="1" fill="none"/>
<line x1="409.5" y1="237" x2="409.5" y2="276" stroke="#00ff00" stroke-width="1" />
<line x1="398.5" y1="231" x2="398.5" y2="240" stroke="#ff0000" stroke-width="1" />
<line x1="394" y1="235.5" x2="402" y2="235.5" stroke="#ff0000" stroke-width="1" />
<line x1="398.5" y1="273" x2="398.5" y2="282" stroke="#ff0000" stroke-width="1" />
<line x1="394" y1="277.5" x2="402" y2="277.5" stroke="#ff0000" stroke-width="1" />
<line x1="383" y1="237.5" x2="404" y2="237.5" stroke="#00ff00" stroke-width="1" />
<line x1="383" y1="276.5" x2="404" y2="276.5" stroke="#00ff00" stroke-width="1" />
<rect x="380" y="247" width="4" height="3" fill="#00ff00"/>
<rect x="380" y="266" width="4" height="3" fill="#00ff00"/>
<rect x="356.5" y="285.5" width="10" height="15" stroke="#00ff00" stroke-width="1" fill="none"/>
<line x1="353" y1="291.5" x2="369" y2="291.5" stroke="#00ff00" stroke-width="3" />
<line x1="350" y1="289.5" x2="372" y2="289.5" stroke="#ff0000" stroke-width="1" />
<line x1="350" y1="293.5" x2="372" y2="293.5" stroke="#ff0000" stroke-width="1" />
<rect x="338.5" y="301.5" width="67" height="25" stroke="#00ff00" stroke-width="1" fill="none"/>
<rect x="341.5" y="304.5" width="61" height="19" stroke="#00ff00" stroke-width="1" fill="none"/>
<rect x="353.5" y="309.5" width="24" height="8" stroke="#00ff00" stroke-width="1" fill="none"/>
<line x1="335" y1="313.5" x2="410" y2="313.5" stroke="#ff0000" stroke-width="1" />
<line x1="361.5" y1="297" x2="361.5" y2="330" stroke="#ff0000" stroke-width="1" stroke-dasharray="22 3 3 3"/>
<rect x="424.5" y="300.5" width="18" height="26" stroke="#00ff00" stroke-width="1" fill="none"/>
<line x1="433.5" y1="296" x2="433.5" y2="332" stroke="#ff0000" stroke-width="1" stroke-dasharray="22 3 3 3"/>
<line x1="405" y1="313.5" x2="445" y2="313.5" stroke="#ff0000" stroke-width="1" />
<rect x="384.5" y="328.5" width="59" height="5" stroke="#00ff00" stroke-width="1" fill="none"/>
<line x1="405" y1="308.5" x2="424" y2="308.5" stroke="#00ff00" stroke-width="1" />
<line x1="405" y1="318.5" x2="424" y2="318.5" stroke="#00ff00" stroke-width="1" />
<rect x="443.5" y="309.5" width="10" height="9" stroke="#00ff00" stroke-width="1" fill="none"/>
<line x1="453" y1="318" x2="468" y2="337" stroke="#ffffff" stroke-width="1" />
<line x1="468" y1="337.5" x2="508" y2="337.5" stroke="#ffffff" stroke-width="1" />
<rect x="470" y="330" width="4" height="4" fill="#00ffff"/>
<rect x="472" y="331" width="1" height="2" fill="#000"/>
<rect x="475" y="330" width="5" height="4" fill="#00ffff"/>
<rect x="476" y="331" width="1" height="2" fill="#000"/>
<rect x="479" y="330" width="1" height="1" fill="#000"/>
<rect x="482" y="330" width="4" height="4" fill="#00ffff"/>
<rect x="483" y="332" width="1" height="1" fill="#000"/>
<rect x="484" y="333" width="1" height="-2" fill="#000"/>
<rect x="487" y="330" width="5" height="4" fill="#00ffff"/>
<rect x="490" y="331" width="2" height="2" fill="#000"/>
<rect x="491" y="330" width="1" height="1" fill="#000"/>
<line x1="350" y1="202" x2="395" y2="325" stroke="#ffffff" stroke-width="1" />
<line x1="409.5" y1="233" x2="409.5" y2="240" stroke="#ff0000" stroke-width="1" />
<line x1="406" y1="236.5" x2="413" y2="236.5" stroke="#ff0000" stroke-width="1" />
<rect x="409" y="236" width="1.5" height="1.5" fill="#00ff00"/>
<line x1="409.5" y1="272" x2="409.5" y2="279" stroke="#ff0000" stroke-width="1" />
<line x1="406" y1="275.5" x2="413" y2="275.5" stroke="#ff0000" stroke-width="1" />
<rect x="409" y="275" width="1.5" height="1.5" fill="#00ff00"/>
<line x1="426.5" y1="233" x2="426.5" y2="240" stroke="#ff0000" stroke-width="1" />
<line x1="423" y1="236.5" x2="430" y2="236.5" stroke="#ff0000" stroke-width="1" />
<rect x="426" y="236" width="1.5" height="1.5" fill="#00ff00"/>
<line x1="426.5" y1="272" x2="426.5" y2="279" stroke="#ff0000" stroke-width="1" />
<line x1="423" y1="275.5" x2="430" y2="275.5" stroke="#ff0000" stroke-width="1" />
<rect x="426" y="275" width="1.5" height="1.5" fill="#00ff00"/>
<line x1="442.5" y1="233" x2="442.5" y2="240" stroke="#ff0000" stroke-width="1" />
<line x1="439" y1="236.5" x2="446" y2="236.5" stroke="#ff0000" stroke-width="1" />
<rect x="442" y="236" width="1.5" height="1.5" fill="#00ff00"/>
<line x1="442.5" y1="272" x2="442.5" y2="279" stroke="#ff0000" stroke-width="1" />
<line x1="439" y1="275.5" x2="446" y2="275.5" stroke="#ff0000" stroke-width="1" />
<rect x="442" y="275" width="1.5" height="1.5" fill="#00ff00"/>
<line x1="458.5" y1="233" x2="458.5" y2="240" stroke="#ff0000" stroke-width="1" />
<line x1="455" y1="236.5" x2="462" y2="236.5" stroke="#ff0000" stroke-width="1" />
<rect x="458" y="236" width="1.5" height="1.5" fill="#00ff00"/>
<line x1="458.5" y1="272" x2="458.5" y2="279" stroke="#ff0000" stroke-width="1" />
<line x1="455" y1="275.5" x2="462" y2="275.5" stroke="#ff0000" stroke-width="1" />
<rect x="458" y="275" width="1.5" height="1.5" fill="#00ff00"/>
<line x1="492.5" y1="233" x2="492.5" y2="240" stroke="#ff0000" stroke-width="1" />
<line x1="489" y1="236.5" x2="496" y2="236.5" stroke="#ff0000" stroke-width="1" />
<rect x="492" y="236" width="1.5" height="1.5" fill="#00ff00"/>
<line x1="492.5" y1="272" x2="492.5" y2="279" stroke="#ff0000" stroke-width="1" />
<line x1="489" y1="275.5" x2="496" y2="275.5" stroke="#ff0000" stroke-width="1" />
<rect x="492" y="275" width="1.5" height="1.5" fill="#00ff00"/>
<line x1="508.5" y1="233" x2="508.5" y2="240" stroke="#ff0000" stroke-width="1" />
<line x1="505" y1="236.5" x2="512" y2="236.5" stroke="#ff0000" stroke-width="1" />
<rect x="508" y="236" width="1.5" height="1.5" fill="#00ff00"/>
<line x1="508.5" y1="272" x2="508.5" y2="279" stroke="#ff0000" stroke-width="1" />
<line x1="505" y1="275.5" x2="512" y2="275.5" stroke="#ff0000" stroke-width="1" />
<rect x="508" y="275" width="1.5" height="1.5" fill="#00ff00"/>
<line x1="525.5" y1="233" x2="525.5" y2="240" stroke="#ff0000" stroke-width="1" />
<line x1="522" y1="236.5" x2="529" y2="236.5" stroke="#ff0000" stroke-width="1" />
<rect x="525" y="236" width="1.5" height="1.5" fill="#00ff00"/>
<line x1="525.5" y1="272" x2="525.5" y2="279" stroke="#ff0000" stroke-width="1" />
<line x1="522" y1="275.5" x2="529" y2="275.5" stroke="#ff0000" stroke-width="1" />
<rect x="525" y="275" width="1.5" height="1.5" fill="#00ff00"/>
<line x1="543.5" y1="233" x2="543.5" y2="240" stroke="#ff0000" stroke-width="1" />
<line x1="540" y1="236.5" x2="547" y2="236.5" stroke="#ff0000" stroke-width="1" />
<rect x="543" y="236" width="1.5" height="1.5" fill="#00ff00"/>
<line x1="543.5" y1="272" x2="543.5" y2="279" stroke="#ff0000" stroke-width="1" />
<line x1="540" y1="275.5" x2="547" y2="275.5" stroke="#ff0000" stroke-width="1" />
<rect x="543" y="275" width="1.5" height="1.5" fill="#00ff00"/>
<line x1="561.5" y1="233" x2="561.5" y2="240" stroke="#ff0000" stroke-width="1" />
<line x1="558" y1="236.5" x2="565" y2="236.5" stroke="#ff0000" stroke-width="1" />
<rect x="561" y="236" width="1.5" height="1.5" fill="#00ff00"/>
<line x1="561.5" y1="272" x2="561.5" y2="279" stroke="#ff0000" stroke-width="1" />
<line x1="558" y1="275.5" x2="565" y2="275.5" stroke="#ff0000" stroke-width="1" />
<rect x="561" y="275" width="1.5" height="1.5" fill="#00ff00"/>
<line x1="620.5" y1="233" x2="620.5" y2="240" stroke="#ff0000" stroke-width="1" />
<line x1="617" y1="236.5" x2="624" y2="236.5" stroke="#ff0000" stroke-width="1" />
<rect x="620" y="236" width="1.5" height="1.5" fill="#00ff00"/>
<line x1="620.5" y1="272" x2="620.5" y2="279" stroke="#ff0000" stroke-width="1" />
<line x1="617" y1="275.5" x2="624" y2="275.5" stroke="#ff0000" stroke-width="1" />
<rect x="620" y="275" width="1.5" height="1.5" fill="#00ff00"/>
<line x1="637.5" y1="233" x2="637.5" y2="240" stroke="#ff0000" stroke-width="1" />
<line x1="634" y1="236.5" x2="641" y2="236.5" stroke="#ff0000" stroke-width="1" />
<rect x="637" y="236" width="1.5" height="1.5" fill="#00ff00"/>
<line x1="637.5" y1="272" x2="637.5" y2="279" stroke="#ff0000" stroke-width="1" />
<line x1="634" y1="275.5" x2="641" y2="275.5" stroke="#ff0000" stroke-width="1" />
<rect x="637" y="275" width="1.5" height="1.5" fill="#00ff00"/>
<line x1="703.5" y1="233" x2="703.5" y2="240" stroke="#ff0000" stroke-width="1" />
<line x1="700" y1="236.5" x2="707" y2="236.5" stroke="#ff0000" stroke-width="1" />
<rect x="703" y="236" width="1.5" height="1.5" fill="#00ff00"/>
<line x1="703.5" y1="272" x2="703.5" y2="279" stroke="#ff0000" stroke-width="1" />
<line x1="700" y1="275.5" x2="707" y2="275.5" stroke="#ff0000" stroke-width="1" />
<rect x="703" y="275" width="1.5" height="1.5" fill="#00ff00"/>
<line x1="723.5" y1="233" x2="723.5" y2="240" stroke="#ff0000" stroke-width="1" />
<line x1="720" y1="236.5" x2="727" y2="236.5" stroke="#ff0000" stroke-width="1" />
<rect x="723" y="236" width="1.5" height="1.5" fill="#00ff00"/>
<line x1="723.5" y1="272" x2="723.5" y2="279" stroke="#ff0000" stroke-width="1" />
<line x1="720" y1="275.5" x2="727" y2="275.5" stroke="#ff0000" stroke-width="1" />
<rect x="723" y="275" width="1.5" height="1.5" fill="#00ff00"/>
<line x1="740.5" y1="233" x2="740.5" y2="240" stroke="#ff0000" stroke-width="1" />
<line x1="737" y1="236.5" x2="744" y2="236.5" stroke="#ff0000" stroke-width="1" />
<rect x="740" y="236" width="1.5" height="1.5" fill="#00ff00"/>
<line x1="740.5" y1="272" x2="740.5" y2="279" stroke="#ff0000" stroke-width="1" />
<line x1="737" y1="275.5" x2="744" y2="275.5" stroke="#ff0000" stroke-width="1" />
<rect x="740" y="275" width="1.5" height="1.5" fill="#00ff00"/>
<line x1="757.5" y1="233" x2="757.5" y2="240" stroke="#ff0000" stroke-width="1" />
<line x1="754" y1="236.5" x2="761" y2="236.5" stroke="#ff0000" stroke-width="1" />
<rect x="757" y="236" width="1.5" height="1.5" fill="#00ff00"/>
<line x1="757.5" y1="272" x2="757.5" y2="279" stroke="#ff0000" stroke-width="1" />
<line x1="754" y1="275.5" x2="761" y2="275.5" stroke="#ff0000" stroke-width="1" />
<rect x="757" y="275" width="1.5" height="1.5" fill="#00ff00"/>
<line x1="822.5" y1="233" x2="822.5" y2="240" stroke="#ff0000" stroke-width="1" />
<line x1="819" y1="236.5" x2="826" y2="236.5" stroke="#ff0000" stroke-width="1" />
<rect x="822" y="236" width="1.5" height="1.5" fill="#00ff00"/>
<line x1="822.5" y1="272" x2="822.5" y2="279" stroke="#ff0000" stroke-width="1" />
<line x1="819" y1="275.5" x2="826" y2="275.5" stroke="#ff0000" stroke-width="1" />
<rect x="822" y="275" width="1.5" height="1.5" fill="#00ff00"/>
<line x1="840.5" y1="233" x2="840.5" y2="240" stroke="#ff0000" stroke-width="1" />
<line x1="837" y1="236.5" x2="844" y2="236.5" stroke="#ff0000" stroke-width="1" />
<rect x="840" y="236" width="1.5" height="1.5" fill="#00ff00"/>
<line x1="840.5" y1="272" x2="840.5" y2="279" stroke="#ff0000" stroke-width="1" />
<line x1="837" y1="275.5" x2="844" y2="275.5" stroke="#ff0000" stroke-width="1" />
<rect x="840" y="275" width="1.5" height="1.5" fill="#00ff00"/>
<path d="M588 236.5 L591.5 233 L595 236.5 L591.5 240 Z" stroke="#00ff00" stroke-width="1" fill="#00ff00"/>
<line x1="591.5" y1="232" x2="591.5" y2="241" stroke="#ff0000" stroke-width="1" />
<path d="M588 275.5 L591.5 272 L595 275.5 L591.5 279 Z" stroke="#00ff00" stroke-width="1" fill="#00ff00"/>
<line x1="591.5" y1="271" x2="591.5" y2="280" stroke="#ff0000" stroke-width="1" />
<path d="M771 236.5 L774.5 233 L778 236.5 L774.5 240 Z" stroke="#00ff00" stroke-width="1" fill="#00ff00"/>
<line x1="774.5" y1="232" x2="774.5" y2="241" stroke="#ff0000" stroke-width="1" />
<path d="M771 275.5 L774.5 272 L778 275.5 L774.5 279 Z" stroke="#00ff00" stroke-width="1" fill="#00ff00"/>
<line x1="774.5" y1="271" x2="774.5" y2="280" stroke="#ff0000" stroke-width="1" />
<rect x="429.5" y="232.5" width="4" height="4" stroke="#00ff00" stroke-width="1" fill="none"/>
<rect x="429.5" y="275.5" width="4" height="5" stroke="#00ff00" stroke-width="1" fill="none"/>
<rect x="452.5" y="229.5" width="47" height="7" stroke="#00ff00" stroke-width="1" fill="none"/>
<rect x="452.5" y="275.5" width="47" height="7" stroke="#00ff00" stroke-width="1" fill="none"/>
<rect x="462.5" y="239.5" width="27" height="34" stroke="#00ff00" stroke-width="1" fill="none"/>
<line x1="458.5" y1="227" x2="458.5" y2="238" stroke="#ff0000" stroke-width="1" />
<line x1="458.5" y1="273" x2="458.5" y2="284" stroke="#ff0000" stroke-width="1" />
<line x1="466.5" y1="227" x2="466.5" y2="238" stroke="#ff0000" stroke-width="1" />
<line x1="466.5" y1="273" x2="466.5" y2="284" stroke="#ff0000" stroke-width="1" />
<line x1="475.5" y1="227" x2="475.5" y2="238" stroke="#ff0000" stroke-width="1" />
<line x1="475.5" y1="273" x2="475.5" y2="284" stroke="#ff0000" stroke-width="1" />
<line x1="484.5" y1="227" x2="484.5" y2="238" stroke="#ff0000" stroke-width="1" />
<line x1="484.5" y1="273" x2="484.5" y2="284" stroke="#ff0000" stroke-width="1" />
<line x1="492.5" y1="227" x2="492.5" y2="238" stroke="#ff0000" stroke-width="1" />
<line x1="492.5" y1="273" x2="492.5" y2="284" stroke="#ff0000" stroke-width="1" />
<line x1="470" y1="256.5" x2="481" y2="256.5" stroke="#00ff00" stroke-width="2" />
<line x1="475.5" y1="225" x2="475.5" y2="290" stroke="#ff0000" stroke-width="1" stroke-dasharray="22 3 3 3"/>
<rect x="565.5" y="232.5" width="4" height="4" stroke="#00ff00" stroke-width="1" fill="none"/>
<rect x="565.5" y="275.5" width="4" height="5" stroke="#00ff00" stroke-width="1" fill="none"/>
<line x1="532.5" y1="236" x2="532.5" y2="275" stroke="#ffffff" stroke-width="1" />
<text x="0" y="0" transform="translate(534.0,261.0) rotate(-90)" fill="#00ffff" font-size="7" font-weight="bold" textLength="10" lengthAdjust="spacingAndGlyphs">68</text>
<line x1="543.5" y1="236" x2="543.5" y2="275" stroke="#00ff00" stroke-width="1" />
<line x1="572.5" y1="232" x2="572.5" y2="280" stroke="#ffff00" stroke-width="1" />
<line x1="575.5" y1="232" x2="575.5" y2="280" stroke="#ffff00" stroke-width="1" />
<line x1="606.5" y1="232" x2="606.5" y2="280" stroke="#ffff00" stroke-width="1" />
<line x1="609.5" y1="232" x2="609.5" y2="280" stroke="#ffff00" stroke-width="1" />
<line x1="638.5" y1="236" x2="638.5" y2="275" stroke="#00ff00" stroke-width="1" />
<rect x="653" y="235" width="39" height="2" fill="#000"/>
<rect x="653" y="274" width="39" height="3" fill="#000"/>
<path d="M653 236 Q641 256 653 276" stroke="#ffffff" stroke-width="1" fill="none"/>
<path d="M692 236 Q704 256 692 276" stroke="#ffffff" stroke-width="1" fill="none"/>
<rect x="649" y="242" width="46" height="5" fill="#00ff00"/>
<rect x="649" y="265" width="46" height="5" fill="#00ff00"/>
<ellipse cx="653" cy="244.5" rx="4" ry="3.5" fill="#00ff00"/>
<ellipse cx="653" cy="267.5" rx="4" ry="3.5" fill="#00ff00"/>
<ellipse cx="661" cy="244.5" rx="4" ry="3.5" fill="#00ff00"/>
<ellipse cx="661" cy="267.5" rx="4" ry="3.5" fill="#00ff00"/>
<ellipse cx="669" cy="244.5" rx="4" ry="3.5" fill="#00ff00"/>
<ellipse cx="669" cy="267.5" rx="4" ry="3.5" fill="#00ff00"/>
<ellipse cx="677" cy="244.5" rx="4" ry="3.5" fill="#00ff00"/>
<ellipse cx="677" cy="267.5" rx="4" ry="3.5" fill="#00ff00"/>
<ellipse cx="685" cy="244.5" rx="4" ry="3.5" fill="#00ff00"/>
<ellipse cx="685" cy="267.5" rx="4" ry="3.5" fill="#00ff00"/>
<ellipse cx="691" cy="244.5" rx="4" ry="3.5" fill="#00ff00"/>
<ellipse cx="691" cy="267.5" rx="4" ry="3.5" fill="#00ff00"/>
<line x1="643" y1="244.5" x2="650" y2="244.5" stroke="#ff0000" stroke-width="1" />
<line x1="692" y1="268.5" x2="698" y2="268.5" stroke="#ff0000" stroke-width="1" />
<rect x="658.5" y="231.5" width="4" height="49" stroke="#00ff00" stroke-width="1" fill="none"/>
<line x1="664.5" y1="240" x2="664.5" y2="272" stroke="#00ff00" stroke-width="1" />
<line x1="671.5" y1="237" x2="671.5" y2="275" stroke="#ff0000" stroke-width="1" />
<line x1="681.5" y1="237" x2="681.5" y2="275" stroke="#ff0000" stroke-width="1" />
<line x1="684.5" y1="240" x2="684.5" y2="272" stroke="#00ff00" stroke-width="1" />
<rect x="667" y="234" width="11" height="6" fill="#00ff00"/>
<rect x="667" y="272" width="11" height="6" fill="#00ff00"/>
<line x1="706.5" y1="238" x2="706.5" y2="275" stroke="#00ff00" stroke-width="1" />
<rect x="725.5" y="231.5" width="5" height="5" stroke="#00ff00" stroke-width="1" fill="none"/>
<rect x="725.5" y="275.5" width="5" height="5" stroke="#00ff00" stroke-width="1" fill="none"/>
<line x1="747.5" y1="231" x2="747.5" y2="280" stroke="#ffffff" stroke-width="1" />
<line x1="730" y1="231.5" x2="747" y2="231.5" stroke="#ffffff" stroke-width="1" />
<line x1="730" y1="280.5" x2="747" y2="280.5" stroke="#ffffff" stroke-width="1" />
<text x="0" y="0" transform="translate(749.0,261.0) rotate(-90)" fill="#00ffff" font-size="7" font-weight="bold" textLength="10" lengthAdjust="spacingAndGlyphs">28</text>
<rect x="779.5" y="223.5" width="40" height="66" stroke="#00ff00" stroke-width="1" fill="none"/>
<rect x="783.5" y="225.5" width="32" height="62" stroke="#00ff00" stroke-width="1" fill="none"/>
<line x1="783" y1="239.5" x2="815" y2="239.5" stroke="#00ff00" stroke-width="1" />
<line x1="783" y1="241.5" x2="815" y2="241.5" stroke="#00ff00" stroke-width="1" />
<line x1="783" y1="243.5" x2="815" y2="243.5" stroke="#00ff00" stroke-width="1" />
<line x1="783" y1="246.5" x2="815" y2="246.5" stroke="#00ff00" stroke-width="1" />
<line x1="783" y1="265.5" x2="815" y2="265.5" stroke="#00ff00" stroke-width="1" />
<line x1="783" y1="268.5" x2="815" y2="268.5" stroke="#00ff00" stroke-width="1" />
<line x1="783" y1="270.5" x2="815" y2="270.5" stroke="#00ff00" stroke-width="1" />
<line x1="783" y1="273.5" x2="815" y2="273.5" stroke="#00ff00" stroke-width="1" />
<line x1="780.5" y1="220" x2="780.5" y2="227" stroke="#ff0000" stroke-width="1" />
<line x1="777" y1="223.5" x2="784" y2="223.5" stroke="#ff0000" stroke-width="1" />
<line x1="780.5" y1="286" x2="780.5" y2="293" stroke="#ff0000" stroke-width="1" />
<line x1="777" y1="289.5" x2="784" y2="289.5" stroke="#ff0000" stroke-width="1" />
<line x1="793.5" y1="220" x2="793.5" y2="227" stroke="#ff0000" stroke-width="1" />
<line x1="790" y1="223.5" x2="797" y2="223.5" stroke="#ff0000" stroke-width="1" />
<line x1="793.5" y1="286" x2="793.5" y2="293" stroke="#ff0000" stroke-width="1" />
<line x1="790" y1="289.5" x2="797" y2="289.5" stroke="#ff0000" stroke-width="1" />
<line x1="804.5" y1="220" x2="804.5" y2="227" stroke="#ff0000" stroke-width="1" />
<line x1="801" y1="223.5" x2="808" y2="223.5" stroke="#ff0000" stroke-width="1" />
<line x1="804.5" y1="286" x2="804.5" y2="293" stroke="#ff0000" stroke-width="1" />
<line x1="801" y1="289.5" x2="808" y2="289.5" stroke="#ff0000" stroke-width="1" />
<line x1="818.5" y1="220" x2="818.5" y2="227" stroke="#ff0000" stroke-width="1" />
<line x1="815" y1="223.5" x2="822" y2="223.5" stroke="#ff0000" stroke-width="1" />
<line x1="818.5" y1="286" x2="818.5" y2="293" stroke="#ff0000" stroke-width="1" />
<line x1="815" y1="289.5" x2="822" y2="289.5" stroke="#ff0000" stroke-width="1" />
<line x1="780.5" y1="235" x2="780.5" y2="242" stroke="#ff0000" stroke-width="1" />
<line x1="777" y1="238.5" x2="784" y2="238.5" stroke="#ff0000" stroke-width="1" />
<line x1="780.5" y1="270" x2="780.5" y2="277" stroke="#ff0000" stroke-width="1" />
<line x1="777" y1="273.5" x2="784" y2="273.5" stroke="#ff0000" stroke-width="1" />
<line x1="818.5" y1="235" x2="818.5" y2="242" stroke="#ff0000" stroke-width="1" />
<line x1="815" y1="238.5" x2="822" y2="238.5" stroke="#ff0000" stroke-width="1" />
<line x1="818.5" y1="270" x2="818.5" y2="277" stroke="#ff0000" stroke-width="1" />
<line x1="815" y1="273.5" x2="822" y2="273.5" stroke="#ff0000" stroke-width="1" />
<line x1="819" y1="236.5" x2="841" y2="236.5" stroke="#00ff00" stroke-width="1" />
<line x1="819" y1="275.5" x2="841" y2="275.5" stroke="#00ff00" stroke-width="1" />
<rect x="840.5" y="238.5" width="28" height="35" stroke="#00ff00" stroke-width="1" fill="none"/>
<line x1="840" y1="239.5" x2="868" y2="239.5" stroke="#00ff00" stroke-width="1" />
<line x1="840" y1="272.5" x2="868" y2="272.5" stroke="#00ff00" stroke-width="1" />
<line x1="854.5" y1="234" x2="854.5" y2="278" stroke="#ff0000" stroke-width="1" />
<line x1="850" y1="256.5" x2="858" y2="256.5" stroke="#00ff00" stroke-width="2" />
<rect x="865.5" y="232.5" width="30" height="48" stroke="#00ff00" stroke-width="1" fill="none"/>
<line x1="865" y1="237.5" x2="895" y2="237.5" stroke="#00ff00" stroke-width="1" />
<line x1="865" y1="238.5" x2="895" y2="238.5" stroke="#00ff00" stroke-width="1" />
<line x1="865" y1="274.5" x2="895" y2="274.5" stroke="#00ff00" stroke-width="1" />
<line x1="868" y1="238.5" x2="912" y2="238.5" stroke="#00ff00" stroke-width="1" />
<line x1="868" y1="273.5" x2="912" y2="273.5" stroke="#00ff00" stroke-width="1" />
<line x1="868.5" y1="238" x2="868.5" y2="273" stroke="#00ff00" stroke-width="1" />
<line x1="891.5" y1="238" x2="891.5" y2="273" stroke="#00ff00" stroke-width="1" />
<line x1="911.5" y1="238" x2="911.5" y2="273" stroke="#00ff00" stroke-width="1" />
<line x1="879.5" y1="230" x2="879.5" y2="283" stroke="#ff0000" stroke-width="1" stroke-dasharray="14 3 3 3"/>
<line x1="895" y1="232.5" x2="927" y2="232.5" stroke="#ffffff" stroke-width="1" />
<line x1="895" y1="280.5" x2="927" y2="280.5" stroke="#ffffff" stroke-width="1" />
<line x1="927.5" y1="232" x2="927.5" y2="280" stroke="#ffffff" stroke-width="1" />
<text x="0" y="0" transform="translate(928.5,261.0) rotate(-90)" fill="#00ffff" font-size="7" font-weight="bold" textLength="10" lengthAdjust="spacingAndGlyphs">89</text>
<line x1="895" y1="236.5" x2="916" y2="236.5" stroke="#ff0000" stroke-width="1" />
<line x1="895" y1="275.5" x2="916" y2="275.5" stroke="#ff0000" stroke-width="1" />
<rect x="869" y="232" width="5" height="3" fill="#00ff00"/>
<rect x="869" y="278" width="5" height="3" fill="#00ff00"/>
<rect x="886" y="232" width="5" height="3" fill="#00ff00"/>
<rect x="886" y="278" width="5" height="3" fill="#00ff00"/>
<rect x="904" y="232" width="5" height="3" fill="#00ff00"/>
<rect x="904" y="278" width="5" height="3" fill="#00ff00"/>
<line x1="361" y1="364.5" x2="891" y2="364.5" stroke="#ffffff" stroke-width="1" />
<line x1="361.5" y1="361" x2="361.5" y2="372" stroke="#ffffff" stroke-width="1" />
<line x1="378.5" y1="361" x2="378.5" y2="372" stroke="#ffffff" stroke-width="1" />
<line x1="398.5" y1="361" x2="398.5" y2="372" stroke="#ffffff" stroke-width="1" />
<line x1="430.5" y1="361" x2="430.5" y2="372" stroke="#ffffff" stroke-width="1" />
<line x1="565.5" y1="361" x2="565.5" y2="372" stroke="#ffffff" stroke-width="1" />
<line x1="661.5" y1="361" x2="661.5" y2="372" stroke="#ffffff" stroke-width="1" />
<line x1="728.5" y1="361" x2="728.5" y2="372" stroke="#ffffff" stroke-width="1" />
<line x1="870.5" y1="361" x2="870.5" y2="372" stroke="#ffffff" stroke-width="1" />
<line x1="891.5" y1="361" x2="891.5" y2="372" stroke="#ffffff" stroke-width="1" />
<text x="366" y="364.5" fill="#00ffff" font-size="7" font-weight="bold" textLength="12" lengthAdjust="spacingAndGlyphs">093</text>
<text x="384" y="364.5" fill="#00ffff" font-size="7" font-weight="bold" textLength="10" lengthAdjust="spacingAndGlyphs">10</text>
<text x="408" y="364.5" fill="#00ffff" font-size="7" font-weight="bold" textLength="11" lengthAdjust="spacingAndGlyphs">025</text>
<text x="489" y="364.5" fill="#00ffff" font-size="7" font-weight="bold" textLength="13" lengthAdjust="spacingAndGlyphs">167</text>
<text x="602" y="364.5" fill="#00ffff" font-size="7" font-weight="bold" textLength="28" lengthAdjust="spacingAndGlyphs">8008374</text>
<text x="672" y="364.5" fill="#00ffff" font-size="7" font-weight="bold" textLength="28" lengthAdjust="spacingAndGlyphs">0718818</text>
<text x="794" y="364.5" fill="#00ffff" font-size="7" font-weight="bold" textLength="14" lengthAdjust="spacingAndGlyphs">1741</text>
<text x="873" y="364.5" fill="#00ffff" font-size="7" font-weight="bold" textLength="15" lengthAdjust="spacingAndGlyphs">4333</text>
<line x1="330" y1="381.5" x2="908" y2="381.5" stroke="#ff0000" stroke-width="1" stroke-dasharray="22 3 3 3"/>
<line x1="330" y1="423.5" x2="908" y2="423.5" stroke="#ff0000" stroke-width="1" stroke-dasharray="22 3 3 3"/>
<line x1="320" y1="402.5" x2="915" y2="402.5" stroke="#ff0000" stroke-width="1" stroke-dasharray="22 3 3 3"/>
<rect x="336.5" y="380.5" width="40" height="44" stroke="#00ff00" stroke-width="1" fill="none"/>
<line x1="356.5" y1="374" x2="356.5" y2="475" stroke="#ff0000" stroke-width="1" stroke-dasharray="22 3 3 3"/>
<line x1="361.5" y1="374" x2="361.5" y2="475" stroke="#ff0000" stroke-width="1" stroke-dasharray="22 3 3 3"/>
<rect x="371.5" y="375.5" width="14" height="13" stroke="#00ff00" stroke-width="1" fill="none"/>
<line x1="378.5" y1="371" x2="378.5" y2="391" stroke="#ff0000" stroke-width="1" />
<rect x="371.5" y="417.5" width="14" height="13" stroke="#00ff00" stroke-width="1" fill="none"/>
<line x1="378.5" y1="413" x2="378.5" y2="433" stroke="#ff0000" stroke-width="1" />
<rect x="391.5" y="375.5" width="14" height="13" stroke="#00ff00" stroke-width="1" fill="none"/>
<line x1="398.5" y1="371" x2="398.5" y2="391" stroke="#ff0000" stroke-width="1" />
<rect x="391.5" y="417.5" width="14" height="13" stroke="#00ff00" stroke-width="1" fill="none"/>
<line x1="398.5" y1="413" x2="398.5" y2="433" stroke="#ff0000" stroke-width="1" />
<rect x="423.5" y="375.5" width="14" height="13" stroke="#00ff00" stroke-width="1" fill="none"/>
<line x1="430.5" y1="371" x2="430.5" y2="391" stroke="#ff0000" stroke-width="1" />
<rect x="423.5" y="417.5" width="14" height="13" stroke="#00ff00" stroke-width="1" fill="none"/>
<line x1="430.5" y1="413" x2="430.5" y2="433" stroke="#ff0000" stroke-width="1" />
<rect x="558.5" y="375.5" width="14" height="13" stroke="#00ff00" stroke-width="1" fill="none"/>
<line x1="565.5" y1="371" x2="565.5" y2="391" stroke="#ff0000" stroke-width="1" />
<rect x="558.5" y="417.5" width="14" height="13" stroke="#00ff00" stroke-width="1" fill="none"/>
<line x1="565.5" y1="413" x2="565.5" y2="433" stroke="#ff0000" stroke-width="1" />
<rect x="654.5" y="375.5" width="14" height="13" stroke="#00ff00" stroke-width="1" fill="none"/>
<line x1="661.5" y1="371" x2="661.5" y2="391" stroke="#ff0000" stroke-width="1" />
<rect x="654.5" y="417.5" width="14" height="13" stroke="#00ff00" stroke-width="1" fill="none"/>
<line x1="661.5" y1="413" x2="661.5" y2="433" stroke="#ff0000" stroke-width="1" />
<rect x="721.5" y="375.5" width="14" height="13" stroke="#00ff00" stroke-width="1" fill="none"/>
<line x1="728.5" y1="371" x2="728.5" y2="391" stroke="#ff0000" stroke-width="1" />
<rect x="721.5" y="417.5" width="14" height="13" stroke="#00ff00" stroke-width="1" fill="none"/>
<line x1="728.5" y1="413" x2="728.5" y2="433" stroke="#ff0000" stroke-width="1" />
<rect x="863.5" y="375.5" width="14" height="13" stroke="#00ff00" stroke-width="1" fill="none"/>
<line x1="870.5" y1="371" x2="870.5" y2="391" stroke="#ff0000" stroke-width="1" />
<rect x="863.5" y="417.5" width="14" height="13" stroke="#00ff00" stroke-width="1" fill="none"/>
<line x1="870.5" y1="413" x2="870.5" y2="433" stroke="#ff0000" stroke-width="1" />
<rect x="884.5" y="375.5" width="14" height="13" stroke="#00ff00" stroke-width="1" fill="none"/>
<line x1="891.5" y1="371" x2="891.5" y2="391" stroke="#ff0000" stroke-width="1" />
<rect x="884.5" y="417.5" width="14" height="13" stroke="#00ff00" stroke-width="1" fill="none"/>
<line x1="891.5" y1="413" x2="891.5" y2="433" stroke="#ff0000" stroke-width="1" />
<line x1="610.5" y1="378" x2="610.5" y2="427" stroke="#ffff00" stroke-width="1" />
<line x1="612.5" y1="378" x2="612.5" y2="427" stroke="#ffff00" stroke-width="1" />
<line x1="879.5" y1="362" x2="879.5" y2="437" stroke="#ff0000" stroke-width="1" />
<line x1="762.5" y1="381" x2="762.5" y2="423" stroke="#ffffff" stroke-width="1" />
<line x1="735" y1="381.5" x2="762" y2="381.5" stroke="#ffffff" stroke-width="1" />
<line x1="735" y1="423.5" x2="762" y2="423.5" stroke="#ffffff" stroke-width="1" />
<text x="0" y="0" transform="translate(765.0,407.0) rotate(-90)" fill="#00ffff" font-size="7" font-weight="bold" textLength="10" lengthAdjust="spacingAndGlyphs">77</text>
<line x1="870.5" y1="430" x2="870.5" y2="440" stroke="#ffffff" stroke-width="1" />
<line x1="879.5" y1="430" x2="879.5" y2="440" stroke="#ffffff" stroke-width="1" />
<line x1="870" y1="437.5" x2="879" y2="437.5" stroke="#ffffff" stroke-width="1" />
<text x="871" y="438.5" fill="#00ffff" font-size="7" font-weight="bold" textLength="7" lengthAdjust="spacingAndGlyphs">61</text>
<line x1="326.5" y1="402" x2="326.5" y2="459" stroke="#ffffff" stroke-width="1" />
<line x1="320" y1="402.5" x2="345" y2="402.5" stroke="#ffffff" stroke-width="1" />
<text x="0" y="0" transform="translate(329.0,437.0) rotate(-90)" fill="#00ffff" font-size="7" font-weight="bold" textLength="10" lengthAdjust="spacingAndGlyphs">74</text>
<rect x="347.5" y="446.5" width="8" height="7" stroke="#00ff00" stroke-width="1" fill="none"/>
<rect x="347.5" y="467.5" width="8" height="7" stroke="#00ff00" stroke-width="1" fill="none"/>
<rect x="370.5" y="446.5" width="8" height="7" stroke="#00ff00" stroke-width="1" fill="none"/>
<rect x="370.5" y="467.5" width="8" height="7" stroke="#00ff00" stroke-width="1" fill="none"/>
<rect x="394.5" y="446.5" width="8" height="7" stroke="#00ff00" stroke-width="1" fill="none"/>
<rect x="394.5" y="467.5" width="8" height="7" stroke="#00ff00" stroke-width="1" fill="none"/>
<rect x="408.5" y="454.5" width="8" height="7" stroke="#00ff00" stroke-width="1" fill="none"/>
<rect x="408.5" y="464.5" width="8" height="7" stroke="#00ff00" stroke-width="1" fill="none"/>
<rect x="442.5" y="454.5" width="8" height="7" stroke="#00ff00" stroke-width="1" fill="none"/>
<rect x="442.5" y="464.5" width="8" height="7" stroke="#00ff00" stroke-width="1" fill="none"/>
<rect x="437.5" y="462.5" width="16" height="10" stroke="#ffff00" stroke-width="1" fill="none"/>
<line x1="345" y1="449.5" x2="406" y2="449.5" stroke="#ff0000" stroke-width="1" stroke-dasharray="20 2 3 2"/>
<line x1="345" y1="470.5" x2="406" y2="470.5" stroke="#ff0000" stroke-width="1" stroke-dasharray="20 2 3 2"/>
<line x1="345" y1="459.5" x2="406" y2="459.5" stroke="#ff0000" stroke-width="1" stroke-dasharray="20 2 3 2"/>
<line x1="405" y1="457.5" x2="451" y2="457.5" stroke="#ff0000" stroke-width="1" stroke-dasharray="20 2 3 2"/>
<line x1="405" y1="467.5" x2="451" y2="467.5" stroke="#ff0000" stroke-width="1" stroke-dasharray="20 2 3 2"/>
<line x1="405" y1="462.5" x2="451" y2="462.5" stroke="#ff0000" stroke-width="1" stroke-dasharray="20 2 3 2"/>
<line x1="351.5" y1="442" x2="351.5" y2="477" stroke="#ff0000" stroke-width="1" />
<line x1="374.5" y1="442" x2="374.5" y2="477" stroke="#ff0000" stroke-width="1" />
<line x1="398.5" y1="442" x2="398.5" y2="477" stroke="#ff0000" stroke-width="1" />
<line x1="412.5" y1="451" x2="412.5" y2="475" stroke="#ff0000" stroke-width="1" />
<line x1="446.5" y1="451" x2="446.5" y2="475" stroke="#ff0000" stroke-width="1" />
<line x1="351" y1="483.5" x2="446" y2="483.5" stroke="#ffffff" stroke-width="1" />
<line x1="351.5" y1="476" x2="351.5" y2="487" stroke="#ffffff" stroke-width="1" />
<line x1="398.5" y1="476" x2="398.5" y2="487" stroke="#ffffff" stroke-width="1" />
<line x1="412.5" y1="476" x2="412.5" y2="487" stroke="#ffffff" stroke-width="1" />
<line x1="446.5" y1="476" x2="446.5" y2="487" stroke="#ffffff" stroke-width="1" />
<text x="372" y="483.5" fill="#00ffff" font-size="7" font-weight="bold" textLength="8" lengthAdjust="spacingAndGlyphs">09</text>
<text x="402" y="483.5" fill="#00ffff" font-size="7" font-weight="bold" textLength="6" lengthAdjust="spacingAndGlyphs">31</text>
<text x="427" y="483.5" fill="#00ffff" font-size="7" font-weight="bold" textLength="9" lengthAdjust="spacingAndGlyphs">92</text>
<line x1="337.5" y1="449" x2="337.5" y2="470" stroke="#ffffff" stroke-width="1" />
<line x1="334" y1="449.5" x2="345" y2="449.5" stroke="#ffffff" stroke-width="1" />
<line x1="334" y1="470.5" x2="345" y2="470.5" stroke="#ffffff" stroke-width="1" />
<text x="0" y="0" transform="translate(337.5,463.0) rotate(-90)" fill="#00ffff" font-size="7" font-weight="bold" textLength="10" lengthAdjust="spacingAndGlyphs">54</text>
<line x1="350" y1="438.5" x2="372" y2="438.5" stroke="#ffffff" stroke-width="1" />
<line x1="350.5" y1="436" x2="350.5" y2="449" stroke="#ffffff" stroke-width="1" />
<text x="365" y="438.5" fill="#00ffff" font-size="7" font-weight="bold" textLength="6" lengthAdjust="spacingAndGlyphs">49</text>
<line x1="451" y1="457.5" x2="466" y2="457.5" stroke="#ffffff" stroke-width="1" />
<line x1="451" y1="467.5" x2="466" y2="467.5" stroke="#ffffff" stroke-width="1" />
<line x1="465.5" y1="457" x2="465.5" y2="467" stroke="#ffffff" stroke-width="1" />
<text x="0" y="0" transform="translate(464.5,467.0) rotate(-90)" fill="#00ffff" font-size="7" font-weight="bold" textLength="10" lengthAdjust="spacingAndGlyphs">92</text>
<line x1="388.5" y1="447" x2="388.5" y2="467" stroke="#ffffff" stroke-width="1" />
<line x1="385" y1="462.5" x2="403" y2="462.5" stroke="#ffffff" stroke-width="1" />
<line x1="385" y1="459.5" x2="405" y2="459.5" stroke="#ffffff" stroke-width="1" />
<text x="0" y="0" transform="translate(388.0,456.0) rotate(-90)" fill="#00ffff" font-size="7" font-weight="bold" textLength="10" lengthAdjust="spacingAndGlyphs">07</text>
<line x1="345" y1="459" x2="332" y2="485" stroke="#ffffff" stroke-width="1" />
<line x1="310" y1="485.5" x2="332" y2="485.5" stroke="#ffffff" stroke-width="1" />
<rect x="317" y="481" width="4" height="4" fill="#00ffff"/>
<rect x="318" y="483" width="2" height="1" fill="#000"/>
<rect x="322" y="481" width="6" height="4" fill="#00ffff"/>
<rect x="323" y="483" width="1" height="1" fill="#000"/>
<rect x="329" y="481" width="1" height="4" fill="#00ffff"/>
<line x1="323" y1="459.5" x2="345" y2="459.5" stroke="#ffffff" stroke-width="1" />
<line x1="361" y1="361" x2="349" y2="350" stroke="#ffffff" stroke-width="1" />
<line x1="326" y1="350.5" x2="349" y2="350.5" stroke="#ffffff" stroke-width="1" />
<rect x="331" y="345" width="6" height="4" fill="#00ffff"/>
<rect x="335" y="346" width="1" height="1" fill="#000"/>
<rect x="332" y="348" width="1" height="1" fill="#000"/>
<rect x="338" y="345" width="5" height="4" fill="#00ffff"/>
<rect x="341" y="346" width="2" height="2" fill="#000"/>
<rect x="343" y="345" width="2" height="4" fill="#00ffff"/>
<line x1="446" y1="466" x2="465" y2="485" stroke="#ffffff" stroke-width="1" />
<line x1="465" y1="485.5" x2="538" y2="485.5" stroke="#ffffff" stroke-width="1" />
<rect x="467" y="480" width="6" height="4" fill="#00ffff"/>
<rect x="471" y="481" width="2" height="2" fill="#000"/>
<rect x="469" y="480" width="1" height="4" fill="#000"/>
<rect x="474" y="480" width="5" height="4" fill="#00ffff"/>
<rect x="476" y="481" width="1" height="1" fill="#000"/>
<rect x="480" y="480" width="5" height="4" fill="#00ffff"/>
<rect x="482" y="481" width="2" height="2" fill="#000"/>
<rect x="495" y="480" width="4" height="4" fill="#00ffff"/>
<rect x="496" y="481" width="1" height="2" fill="#000"/>
<rect x="499" y="480" width="5" height="4" fill="#00ffff"/>
<rect x="501" y="481" width="2" height="2" fill="#000"/>
<rect x="506" y="480" width="5" height="4" fill="#00ffff"/>
<rect x="507" y="481" width="1" height="2" fill="#000"/>
<rect x="512" y="480" width="6" height="4" fill="#00ffff"/>
<rect x="514" y="482" width="2" height="1" fill="#000"/>
<rect x="514" y="483" width="1" height="1" fill="#000"/>
<rect x="467" y="487" width="5" height="4" fill="#00ffff"/>
<rect x="470" y="488" width="1" height="2" fill="#000"/>
<rect x="473" y="487" width="5" height="4" fill="#00ffff"/>
<rect x="475" y="489" width="2" height="1" fill="#000"/>
<rect x="478" y="487" width="6" height="4" fill="#00ffff"/>
<rect x="480" y="488" width="1" height="1" fill="#000"/>
<rect x="478" y="490" width="1" height="-2" fill="#000"/>
<rect x="485" y="487" width="5" height="4" fill="#00ffff"/>
<rect x="486" y="489" width="2" height="1" fill="#000"/>
<rect x="489" y="487" width="1" height="4" fill="#000"/>
<rect x="497" y="487" width="5" height="4" fill="#00ffff"/>
<rect x="499" y="488" width="1" height="2" fill="#000"/>
<rect x="504" y="487" width="5" height="4" fill="#00ffff"/>
<rect x="505" y="488" width="2" height="2" fill="#000"/>
<rect x="506" y="487" width="1" height="1" fill="#000"/>
<rect x="510" y="487" width="6" height="4" fill="#00ffff"/>
<rect x="514" y="488" width="1" height="2" fill="#000"/>
<rect x="514" y="490" width="1" height="1" fill="#000"/>
<rect x="517" y="487" width="4" height="4" fill="#00ffff"/>
<rect x="518" y="489" width="1" height="1" fill="#000"/>
<rect x="517" y="487" width="1" height="1" fill="#000"/>
<rect x="522" y="487" width="4" height="4" fill="#00ffff"/>
<rect x="524" y="489" width="2" height="1" fill="#000"/>
<rect x="527" y="487" width="4" height="4" fill="#00ffff"/>
<rect x="528" y="488" width="1" height="2" fill="#000"/>
<rect x="532" y="487" width="3" height="4" fill="#00ffff"/>
<rect x="533" y="488" width="1" height="2" fill="#000"/>
<rect x="532" y="487" width="1" height="1" fill="#000"/>
<line x1="565" y1="423" x2="600" y2="450" stroke="#ffffff" stroke-width="1" />
<line x1="600" y1="450.5" x2="672" y2="450.5" stroke="#ffffff" stroke-width="1" />
<rect x="602" y="444" width="5" height="4" fill="#00ffff"/>
<rect x="603" y="445" width="1" height="2" fill="#000"/>
<rect x="605" y="447" width="1" height="-2" fill="#000"/>
<rect x="607" y="444" width="4" height="4" fill="#00ffff"/>
<rect x="609" y="445" width="1" height="2" fill="#000"/>
<rect x="609" y="444" width="1" height="1" fill="#000"/>
<rect x="611" y="444" width="5" height="4" fill="#00ffff"/>
<rect x="612" y="446" width="1" height="1" fill="#000"/>
<rect x="613" y="444" width="1" height="4" fill="#000"/>
<rect x="618" y="444" width="2" height="4" fill="#00ffff"/>
<rect x="629" y="444" width="6" height="4" fill="#00ffff"/>
<rect x="630" y="446" width="1" height="1" fill="#000"/>
<rect x="633" y="444" width="1" height="4" fill="#000"/>
<rect x="636" y="444" width="4" height="4" fill="#00ffff"/>
<rect x="638" y="445" width="1" height="2" fill="#000"/>
<rect x="641" y="444" width="5" height="4" fill="#00ffff"/>
<rect x="644" y="445" width="2" height="2" fill="#000"/>
<rect x="646" y="444" width="5" height="4" fill="#00ffff"/>
<rect x="648" y="445" width="1" height="1" fill="#000"/>
<rect x="646" y="447" width="1" height="1" fill="#000"/>
<rect x="652" y="444" width="5" height="4" fill="#00ffff"/>
<rect x="654" y="445" width="1" height="2" fill="#000"/>
<rect x="602" y="452" width="5" height="4" fill="#00ffff"/>
<rect x="604" y="454" width="2" height="1" fill="#000"/>
<rect x="607" y="452" width="4" height="4" fill="#00ffff"/>
<rect x="608" y="453" width="2" height="2" fill="#000"/>
<rect x="607" y="452" width="1" height="4" fill="#000"/>
<rect x="612" y="452" width="4" height="4" fill="#00ffff"/>
<rect x="614" y="453" width="2" height="2" fill="#000"/>
<rect x="618" y="452" width="4" height="4" fill="#00ffff"/>
<rect x="620" y="453" width="1" height="2" fill="#000"/>
<rect x="624" y="452" width="4" height="4" fill="#00ffff"/>
<rect x="625" y="454" width="2" height="1" fill="#000"/>
<rect x="635" y="452" width="5" height="4" fill="#00ffff"/>
<rect x="637" y="454" width="1" height="1" fill="#000"/>
<rect x="637" y="452" width="1" height="1" fill="#000"/>
<rect x="641" y="452" width="5" height="4" fill="#00ffff"/>
<rect x="644" y="453" width="2" height="1" fill="#000"/>
<rect x="647" y="452" width="6" height="4" fill="#00ffff"/>
<rect x="648" y="453" width="1" height="2" fill="#000"/>
<rect x="654" y="452" width="4" height="4" fill="#00ffff"/>
<rect x="655" y="453" width="2" height="1" fill="#000"/>
<rect x="657" y="452" width="1" height="1" fill="#000"/>
<rect x="659" y="452" width="6" height="4" fill="#00ffff"/>
<rect x="661" y="454" width="2" height="1" fill="#000"/>
<rect x="661" y="455" width="1" height="1" fill="#000"/>
<rect x="666" y="452" width="5" height="4" fill="#00ffff"/>
<rect x="667" y="453" width="1" height="1" fill="#000"/>
<rect x="670" y="452" width="1" height="4" fill="#000"/>
<rect x="337.5" y="534.5" width="38" height="40" stroke="#00ff00" stroke-width="1" fill="none"/>
<rect x="340.5" y="537.5" width="32" height="34" stroke="#00ff00" stroke-width="1" fill="none"/>
<line x1="337" y1="535.5" x2="375" y2="535.5" stroke="#ff0000" stroke-width="1" stroke-dasharray="6 3"/>
<line x1="337" y1="573.5" x2="375" y2="573.5" stroke="#ff0000" stroke-width="1" stroke-dasharray="6 3"/>
<line x1="338.5" y1="534" x2="338.5" y2="574" stroke="#ff0000" stroke-width="1" stroke-dasharray="6 3"/>
<line x1="374.5" y1="534" x2="374.5" y2="574" stroke="#ff0000" stroke-width="1" stroke-dasharray="6 3"/>
<line x1="334" y1="554.5" x2="378" y2="554.5" stroke="#ff0000" stroke-width="1" stroke-dasharray="10 2 2 2"/>
<line x1="356.5" y1="531" x2="356.5" y2="577" stroke="#ff0000" stroke-width="1" stroke-dasharray="10 2 2 2"/>
<line x1="337" y1="514.5" x2="375" y2="514.5" stroke="#ffffff" stroke-width="1" />
<line x1="337.5" y1="511" x2="337.5" y2="534" stroke="#ffffff" stroke-width="1" />
<line x1="375.5" y1="511" x2="375.5" y2="534" stroke="#ffffff" stroke-width="1" />
<text x="350" y="513.5" fill="#00ffff" font-size="7" font-weight="bold" textLength="12" lengthAdjust="spacingAndGlyphs">643</text>
<line x1="341" y1="524.5" x2="373" y2="524.5" stroke="#ffffff" stroke-width="1" />
<line x1="341.5" y1="521" x2="341.5" y2="534" stroke="#ffffff" stroke-width="1" />
<line x1="373.5" y1="521" x2="373.5" y2="534" stroke="#ffffff" stroke-width="1" />
<text x="351" y="523.5" fill="#00ffff" font-size="7" font-weight="bold" textLength="12" lengthAdjust="spacingAndGlyphs">883</text>
<line x1="328.5" y1="535" x2="328.5" y2="573" stroke="#ffffff" stroke-width="1" />
<line x1="325" y1="535.5" x2="337" y2="535.5" stroke="#ffffff" stroke-width="1" />
<line x1="325" y1="573.5" x2="337" y2="573.5" stroke="#ffffff" stroke-width="1" />
<text x="0" y="0" transform="translate(327.5,569.0) rotate(-90)" fill="#00ffff" font-size="7" font-weight="bold" textLength="30" lengthAdjust="spacingAndGlyphs">17010737</text>
<line x1="385.5" y1="538" x2="385.5" y2="571" stroke="#ffffff" stroke-width="1" />
<line x1="375" y1="538.5" x2="388" y2="538.5" stroke="#ffffff" stroke-width="1" />
<line x1="375" y1="571.5" x2="388" y2="571.5" stroke="#ffffff" stroke-width="1" />
<text x="0" y="0" transform="translate(384.5,559.0) rotate(-90)" fill="#00ffff" font-size="7" font-weight="bold" textLength="10" lengthAdjust="spacingAndGlyphs">50</text>
<line x1="396.5" y1="534" x2="396.5" y2="574" stroke="#ffffff" stroke-width="1" />
<line x1="375" y1="534.5" x2="399" y2="534.5" stroke="#ffffff" stroke-width="1" />
<line x1="375" y1="574.5" x2="399" y2="574.5" stroke="#ffffff" stroke-width="1" />
<text x="0" y="0" transform="translate(395.5,559.0) rotate(-90)" fill="#00ffff" font-size="7" font-weight="bold" textLength="10" lengthAdjust="spacingAndGlyphs">43</text>
<line x1="339" y1="584.5" x2="374" y2="584.5" stroke="#ffffff" stroke-width="1" />
<line x1="339.5" y1="574" x2="339.5" y2="587" stroke="#ffffff" stroke-width="1" />
<line x1="374.5" y1="574" x2="374.5" y2="587" stroke="#ffffff" stroke-width="1" />
<text x="342" y="583.5" fill="#00ffff" font-size="7" font-weight="bold" textLength="29" lengthAdjust="spacingAndGlyphs">1039931</text>
<rect x="345" y="603" width="5" height="4" fill="#00ffff"/>
<rect x="346" y="604" width="1" height="2" fill="#000"/>
<rect x="349" y="606" width="1" height="-2" fill="#000"/>
<rect x="351" y="603" width="5" height="4" fill="#00ffff"/>
<rect x="352" y="605" width="1" height="1" fill="#000"/>
<rect x="352" y="603" width="1" height="4" fill="#000"/>
<rect x="356" y="603" width="5" height="4" fill="#00ffff"/>
<rect x="358" y="604" width="1" height="1" fill="#000"/>
<rect x="363" y="603" width="1" height="4" fill="#00ffff"/>
<line x1="343" y1="609.5" x2="372" y2="609.5" stroke="#ffffff" stroke-width="1" />
<text x="351" y="615.5" fill="#00ffff" font-size="7" font-weight="bold" textLength="15" lengthAdjust="spacingAndGlyphs">6828</text>
<line x1="372" y1="570" x2="380" y2="583" stroke="#ffffff" stroke-width="1" />
<line x1="380" y1="583.5" x2="398" y2="583.5" stroke="#ffffff" stroke-width="1" />
<text x="381" y="583.5" fill="#00ffff" font-size="7" font-weight="bold" textLength="16" lengthAdjust="spacingAndGlyphs">1264</text>
<rect x="449.5" y="530.5" width="47" height="53" stroke="#00ff00" stroke-width="1" fill="none"/>
<rect x="452.5" y="533.5" width="41" height="47" stroke="#00ff00" stroke-width="1" fill="none"/>
<line x1="449" y1="531.5" x2="496" y2="531.5" stroke="#ff0000" stroke-width="1" stroke-dasharray="6 3"/>
<line x1="449" y1="582.5" x2="496" y2="582.5" stroke="#ff0000" stroke-width="1" stroke-dasharray="6 3"/>
<line x1="450.5" y1="530" x2="450.5" y2="583" stroke="#ff0000" stroke-width="1" stroke-dasharray="6 3"/>
<line x1="495.5" y1="530" x2="495.5" y2="583" stroke="#ff0000" stroke-width="1" stroke-dasharray="6 3"/>
<line x1="446" y1="556.5" x2="499" y2="556.5" stroke="#ff0000" stroke-width="1" stroke-dasharray="10 2 2 2"/>
<line x1="472.5" y1="527" x2="472.5" y2="586" stroke="#ff0000" stroke-width="1" stroke-dasharray="10 2 2 2"/>
<line x1="449" y1="510.5" x2="496" y2="510.5" stroke="#ffffff" stroke-width="1" />
<line x1="449.5" y1="507" x2="449.5" y2="530" stroke="#ffffff" stroke-width="1" />
<line x1="496.5" y1="507" x2="496.5" y2="530" stroke="#ffffff" stroke-width="1" />
<text x="466" y="509.5" fill="#00ffff" font-size="7" font-weight="bold" textLength="12" lengthAdjust="spacingAndGlyphs">644</text>
<line x1="452" y1="520.5" x2="493" y2="520.5" stroke="#ffffff" stroke-width="1" />
<line x1="452.5" y1="517" x2="452.5" y2="530" stroke="#ffffff" stroke-width="1" />
<line x1="493.5" y1="517" x2="493.5" y2="530" stroke="#ffffff" stroke-width="1" />
<text x="466" y="519.5" fill="#00ffff" font-size="7" font-weight="bold" textLength="12" lengthAdjust="spacingAndGlyphs">604</text>
<line x1="439.5" y1="533" x2="439.5" y2="580" stroke="#ffffff" stroke-width="1" />
<line x1="436" y1="533.5" x2="449" y2="533.5" stroke="#ffffff" stroke-width="1" />
<line x1="436" y1="580.5" x2="449" y2="580.5" stroke="#ffffff" stroke-width="1" />
<text x="0" y="0" transform="translate(438.5,576.0) rotate(-90)" fill="#00ffff" font-size="7" font-weight="bold" textLength="39" lengthAdjust="spacingAndGlyphs">9566053663</text>
<line x1="505.5" y1="537" x2="505.5" y2="576" stroke="#ffffff" stroke-width="1" />
<line x1="496" y1="537.5" x2="508" y2="537.5" stroke="#ffffff" stroke-width="1" />
<line x1="496" y1="576.5" x2="508" y2="576.5" stroke="#ffffff" stroke-width="1" />
<text x="0" y="0" transform="translate(504.5,561.0) rotate(-90)" fill="#00ffff" font-size="7" font-weight="bold" textLength="10" lengthAdjust="spacingAndGlyphs">06</text>
<line x1="516.5" y1="530" x2="516.5" y2="583" stroke="#ffffff" stroke-width="1" />
<line x1="496" y1="530.5" x2="519" y2="530.5" stroke="#ffffff" stroke-width="1" />
<line x1="496" y1="583.5" x2="519" y2="583.5" stroke="#ffffff" stroke-width="1" />
<text x="0" y="0" transform="translate(515.5,561.0) rotate(-90)" fill="#00ffff" font-size="7" font-weight="bold" textLength="10" lengthAdjust="spacingAndGlyphs">26</text>
<line x1="452" y1="593.5" x2="493" y2="593.5" stroke="#ffffff" stroke-width="1" />
<line x1="452.5" y1="583" x2="452.5" y2="596" stroke="#ffffff" stroke-width="1" />
<line x1="493.5" y1="583" x2="493.5" y2="596" stroke="#ffffff" stroke-width="1" />
<text x="455" y="592.5" fill="#00ffff" font-size="7" font-weight="bold" textLength="35" lengthAdjust="spacingAndGlyphs">116957220</text>
<rect x="460" y="603" width="4" height="4" fill="#00ffff"/>
<rect x="462" y="605" width="1" height="1" fill="#000"/>
<rect x="462" y="603" width="1" height="1" fill="#000"/>
<rect x="465" y="603" width="4" height="4" fill="#00ffff"/>
<rect x="466" y="604" width="1" height="2" fill="#000"/>
<rect x="469" y="603" width="5" height="4" fill="#00ffff"/>
<rect x="472" y="604" width="1" height="2" fill="#000"/>
<rect x="475" y="603" width="6" height="4" fill="#00ffff"/>
<rect x="477" y="604" width="1" height="2" fill="#000"/>
<rect x="479" y="603" width="1" height="4" fill="#000"/>
<line x1="458" y1="609.5" x2="490" y2="609.5" stroke="#ffffff" stroke-width="1" />
<text x="466" y="615.5" fill="#00ffff" font-size="7" font-weight="bold" textLength="18" lengthAdjust="spacingAndGlyphs">1233</text>
<line x1="493" y1="580" x2="501" y2="592" stroke="#ffffff" stroke-width="1" />
<line x1="501" y1="592.5" x2="519" y2="592.5" stroke="#ffffff" stroke-width="1" />
<text x="502" y="592.5" fill="#00ffff" font-size="7" font-weight="bold" textLength="16" lengthAdjust="spacingAndGlyphs">0805</text>
<rect x="583.5" y="523.5" width="40" height="65" stroke="#00ff00" stroke-width="1" fill="none"/>
<rect x="587.5" y="526.5" width="32" height="59" stroke="#00ff00" stroke-width="1" fill="none"/>
<line x1="587" y1="541.5" x2="619" y2="541.5" stroke="#00ff00" stroke-width="1" />
<line x1="587" y1="545.5" x2="619" y2="545.5" stroke="#00ff00" stroke-width="1" />
<line x1="587" y1="566.5" x2="619" y2="566.5" stroke="#00ff00" stroke-width="1" />
<line x1="587" y1="570.5" x2="619" y2="570.5" stroke="#00ff00" stroke-width="1" />
<line x1="575" y1="555.5" x2="630" y2="555.5" stroke="#ff0000" stroke-width="1" stroke-dasharray="10 2 2 2"/>
<line x1="603.5" y1="515" x2="603.5" y2="595" stroke="#ff0000" stroke-width="1" stroke-dasharray="10 2 2 2"/>
<line x1="592.5" y1="523" x2="592.5" y2="529" stroke="#ff0000" stroke-width="1" />
<line x1="598.5" y1="523" x2="598.5" y2="529" stroke="#ff0000" stroke-width="1" />
<line x1="608.5" y1="523" x2="608.5" y2="529" stroke="#ff0000" stroke-width="1" />
<line x1="614.5" y1="523" x2="614.5" y2="529" stroke="#ff0000" stroke-width="1" />
<line x1="592.5" y1="582" x2="592.5" y2="588" stroke="#ff0000" stroke-width="1" />
<line x1="598.5" y1="582" x2="598.5" y2="588" stroke="#ff0000" stroke-width="1" />
<line x1="608.5" y1="582" x2="608.5" y2="588" stroke="#ff0000" stroke-width="1" />
<line x1="614.5" y1="582" x2="614.5" y2="588" stroke="#ff0000" stroke-width="1" />
<line x1="582" y1="535.5" x2="588" y2="535.5" stroke="#ff0000" stroke-width="1" />
<line x1="582" y1="550.5" x2="588" y2="550.5" stroke="#ff0000" stroke-width="1" />
<line x1="582" y1="560.5" x2="588" y2="560.5" stroke="#ff0000" stroke-width="1" />
<line x1="582" y1="575.5" x2="588" y2="575.5" stroke="#ff0000" stroke-width="1" />
<line x1="618" y1="535.5" x2="624" y2="535.5" stroke="#ff0000" stroke-width="1" />
<line x1="618" y1="550.5" x2="624" y2="550.5" stroke="#ff0000" stroke-width="1" />
<line x1="618" y1="560.5" x2="624" y2="560.5" stroke="#ff0000" stroke-width="1" />
<line x1="618" y1="575.5" x2="624" y2="575.5" stroke="#ff0000" stroke-width="1" />
<line x1="584" y1="502.5" x2="622" y2="502.5" stroke="#ffffff" stroke-width="1" />
<line x1="584.5" y1="499" x2="584.5" y2="523" stroke="#ffffff" stroke-width="1" />
<line x1="622.5" y1="499" x2="622.5" y2="523" stroke="#ffffff" stroke-width="1" />
<text x="595" y="501.5" fill="#00ffff" font-size="7" font-weight="bold" textLength="16" lengthAdjust="spacingAndGlyphs">1697</text>
<line x1="587" y1="512.5" x2="619" y2="512.5" stroke="#ffffff" stroke-width="1" />
<line x1="587.5" y1="509" x2="587.5" y2="523" stroke="#ffffff" stroke-width="1" />
<line x1="619.5" y1="509" x2="619.5" y2="523" stroke="#ffffff" stroke-width="1" />
<text x="597" y="511.5" fill="#00ffff" font-size="7" font-weight="bold" textLength="12" lengthAdjust="spacingAndGlyphs">846</text>
<line x1="572.5" y1="523" x2="572.5" y2="588" stroke="#ffffff" stroke-width="1" />
<line x1="569" y1="523.5" x2="583" y2="523.5" stroke="#ffffff" stroke-width="1" />
<line x1="569" y1="588.5" x2="583" y2="588.5" stroke="#ffffff" stroke-width="1" />
<text x="0" y="0" transform="translate(572.0,576.0) rotate(-90)" fill="#00ffff" font-size="7" font-weight="bold" textLength="40" lengthAdjust="spacingAndGlyphs">4936657872</text>
<line x1="634.5" y1="541" x2="634.5" y2="570" stroke="#ffffff" stroke-width="1" />
<line x1="623" y1="541.5" x2="637" y2="541.5" stroke="#ffffff" stroke-width="1" />
<line x1="623" y1="570.5" x2="637" y2="570.5" stroke="#ffffff" stroke-width="1" />
<text x="0" y="0" transform="translate(637.0,560.0) rotate(-90)" fill="#00ffff" font-size="7" font-weight="bold" textLength="10" lengthAdjust="spacingAndGlyphs">00</text>
<line x1="644.5" y1="523" x2="644.5" y2="588" stroke="#ffffff" stroke-width="1" />
<line x1="623" y1="523.5" x2="647" y2="523.5" stroke="#ffffff" stroke-width="1" />
<line x1="623" y1="588.5" x2="647" y2="588.5" stroke="#ffffff" stroke-width="1" />
<text x="641" y="557.5" fill="#00ffff" font-size="7" font-weight="bold" textLength="6" lengthAdjust="spacingAndGlyphs">97</text>
<line x1="653.5" y1="523" x2="653.5" y2="588" stroke="#ffffff" stroke-width="1" />
<line x1="623" y1="523.5" x2="656" y2="523.5" stroke="#ffffff" stroke-width="1" />
<line x1="623" y1="588.5" x2="656" y2="588.5" stroke="#ffffff" stroke-width="1" />
<text x="650" y="557.5" fill="#00ffff" font-size="7" font-weight="bold" textLength="6" lengthAdjust="spacingAndGlyphs">73</text>
<line x1="585" y1="601.5" x2="621" y2="601.5" stroke="#ffffff" stroke-width="1" />
<line x1="585.5" y1="588" x2="585.5" y2="604" stroke="#ffffff" stroke-width="1" />
<line x1="621.5" y1="588" x2="621.5" y2="604" stroke="#ffffff" stroke-width="1" />
<text x="588" y="601.5" fill="#00ffff" font-size="7" font-weight="bold" textLength="30" lengthAdjust="spacingAndGlyphs">79727611</text>
<line x1="619" y1="585" x2="628" y2="597" stroke="#ffffff" stroke-width="1" />
<line x1="628" y1="597.5" x2="647" y2="597.5" stroke="#ffffff" stroke-width="1" />
<text x="629" y="597.5" fill="#00ffff" font-size="7" font-weight="bold" textLength="17" lengthAdjust="spacingAndGlyphs">2565</text>
<line x1="568" y1="513" x2="594" y2="544" stroke="#ffffff" stroke-width="1" />
<line x1="552" y1="513.5" x2="568" y2="513.5" stroke="#ffffff" stroke-width="1" />
<rect x="551" y="508" width="4" height="4" fill="#00ffff"/>
<rect x="552" y="509" width="1" height="1" fill="#000"/>
<rect x="556" y="508" width="4" height="4" fill="#00ffff"/>
<rect x="558" y="509" width="1" height="1" fill="#000"/>
<rect x="593" y="612" width="5" height="4" fill="#00ffff"/>
<rect x="595" y="613" width="1" height="2" fill="#000"/>
<rect x="595" y="615" width="1" height="-2" fill="#000"/>
<rect x="599" y="612" width="5" height="4" fill="#00ffff"/>
<rect x="601" y="614" width="2" height="1" fill="#000"/>
<rect x="601" y="612" width="1" height="4" fill="#000"/>
<rect x="605" y="612" width="4" height="4" fill="#00ffff"/>
<rect x="607" y="614" width="2" height="1" fill="#000"/>
<rect x="610" y="612" width="5" height="4" fill="#00ffff"/>
<rect x="613" y="614" width="2" height="1" fill="#000"/>
<rect x="614" y="612" width="1" height="4" fill="#000"/>
<line x1="590" y1="618.5" x2="618" y2="618.5" stroke="#ffffff" stroke-width="1" />
<text x="600" y="623.5" fill="#00ffff" font-size="7" font-weight="bold" textLength="10" lengthAdjust="spacingAndGlyphs">65</text>
<rect x="709.5" y="518.5" width="157" height="65" stroke="#ffffff" stroke-width="1" fill="none"/>
<line x1="731.5" y1="518" x2="731.5" y2="583" stroke="#ffffff" stroke-width="1" />
<line x1="750.5" y1="518" x2="750.5" y2="583" stroke="#ffffff" stroke-width="1" />
<line x1="765.5" y1="518" x2="765.5" y2="583" stroke="#ffffff" stroke-width="1" />
<line x1="778.5" y1="518" x2="778.5" y2="583" stroke="#ffffff" stroke-width="1" />
<line x1="792.5" y1="518" x2="792.5" y2="583" stroke="#ffffff" stroke-width="1" />
<line x1="805.5" y1="518" x2="805.5" y2="583" stroke="#ffffff" stroke-width="1" />
<line x1="825.5" y1="518" x2="825.5" y2="583" stroke="#ffffff" stroke-width="1" />
<line x1="839.5" y1="518" x2="839.5" y2="583" stroke="#ffffff" stroke-width="1" />
<line x1="852.5" y1="518" x2="852.5" y2="583" stroke="#ffffff" stroke-width="1" />
<line x1="709" y1="534.5" x2="866" y2="534.5" stroke="#ffffff" stroke-width="1" />
<line x1="709" y1="561.5" x2="866" y2="561.5" stroke="#ffffff" stroke-width="1" />
<line x1="709" y1="575.5" x2="866" y2="575.5" stroke="#ffffff" stroke-width="1" />
<line x1="731" y1="526.5" x2="750" y2="526.5" stroke="#ffffff" stroke-width="1" />
<line x1="731" y1="541.5" x2="750" y2="541.5" stroke="#ffffff" stroke-width="1" />
<line x1="731" y1="547.5" x2="750" y2="547.5" stroke="#ffffff" stroke-width="1" />
<line x1="731" y1="554.5" x2="750" y2="554.5" stroke="#ffffff" stroke-width="1" />
<line x1="731" y1="568.5" x2="750" y2="568.5" stroke="#ffffff" stroke-width="1" />
<line x1="765" y1="526.5" x2="778" y2="526.5" stroke="#ffffff" stroke-width="1" />
<line x1="765" y1="541.5" x2="778" y2="541.5" stroke="#ffffff" stroke-width="1" />
<line x1="765" y1="547.5" x2="778" y2="547.5" stroke="#ffffff" stroke-width="1" />
<line x1="765" y1="554.5" x2="778" y2="554.5" stroke="#ffffff" stroke-width="1" />
<line x1="765" y1="568.5" x2="778" y2="568.5" stroke="#ffffff" stroke-width="1" />
<line x1="792" y1="526.5" x2="805" y2="526.5" stroke="#ffffff" stroke-width="1" />
<line x1="792" y1="541.5" x2="805" y2="541.5" stroke="#ffffff" stroke-width="1" />
<line x1="792" y1="547.5" x2="805" y2="547.5" stroke="#ffffff" stroke-width="1" />
<line x1="792" y1="554.5" x2="805" y2="554.5" stroke="#ffffff" stroke-width="1" />
<line x1="792" y1="568.5" x2="805" y2="568.5" stroke="#ffffff" stroke-width="1" />
<rect x="722" y="508" width="5" height="4" fill="#00ffff"/>
<rect x="724" y="510" width="2" height="1" fill="#000"/>
<rect x="727" y="508" width="5" height="4" fill="#00ffff"/>
<rect x="730" y="510" width="2" height="1" fill="#000"/>
<rect x="731" y="511" width="1" height="-2" fill="#000"/>
<rect x="733" y="508" width="5" height="4" fill="#00ffff"/>
<rect x="736" y="509" width="2" height="2" fill="#000"/>
<rect x="739" y="508" width="1" height="4" fill="#00ffff"/>
<rect x="733" y="521" width="4" height="4" fill="#00ffff"/>
<rect x="735" y="522" width="2" height="2" fill="#000"/>
<rect x="736" y="524" width="1" height="-2" fill="#000"/>
<rect x="738" y="521" width="5" height="4" fill="#00ffff"/>
<rect x="740" y="522" width="1" height="1" fill="#000"/>
<rect x="744" y="521" width="3" height="4" fill="#00ffff"/>
<rect x="745" y="523" width="2" height="1" fill="#000"/>
<rect x="733" y="529" width="4" height="4" fill="#00ffff"/>
<rect x="735" y="530" width="1" height="2" fill="#000"/>
<rect x="733" y="529" width="1" height="1" fill="#000"/>
<rect x="739" y="529" width="4" height="4" fill="#00ffff"/>
<rect x="740" y="530" width="1" height="1" fill="#000"/>
<rect x="740" y="529" width="1" height="4" fill="#000"/>
<rect x="744" y="529" width="3" height="4" fill="#00ffff"/>
<rect x="745" y="530" width="2" height="2" fill="#000"/>
<rect x="733" y="536" width="4" height="4" fill="#00ffff"/>
<rect x="735" y="537" width="2" height="2" fill="#000"/>
<rect x="733" y="539" width="1" height="-2" fill="#000"/>
<rect x="738" y="536" width="4" height="4" fill="#00ffff"/>
<rect x="740" y="538" width="2" height="1" fill="#000"/>
<rect x="744" y="536" width="3" height="4" fill="#00ffff"/>
<rect x="745" y="537" width="1" height="1" fill="#000"/>
<rect x="744" y="536" width="1" height="1" fill="#000"/>
<rect x="733" y="543" width="5" height="4" fill="#00ffff"/>
<rect x="735" y="545" width="2" height="1" fill="#000"/>
<rect x="737" y="543" width="1" height="1" fill="#000"/>
<rect x="738" y="543" width="5" height="4" fill="#00ffff"/>
<rect x="740" y="545" width="1" height="1" fill="#000"/>
<rect x="739" y="543" width="1" height="1" fill="#000"/>
<rect x="744" y="543" width="3" height="4" fill="#00ffff"/>
<rect x="745" y="544" width="1" height="2" fill="#000"/>
<rect x="744" y="543" width="1" height="1" fill="#000"/>
<rect x="733" y="549" width="4" height="4" fill="#00ffff"/>
<rect x="735" y="550" width="2" height="1" fill="#000"/>
<rect x="734" y="549" width="1" height="1" fill="#000"/>
<rect x="738" y="549" width="4" height="4" fill="#00ffff"/>
<rect x="739" y="550" width="1" height="2" fill="#000"/>
<rect x="739" y="552" width="1" height="1" fill="#000"/>
<rect x="743" y="549" width="4" height="4" fill="#00ffff"/>
<rect x="745" y="550" width="1" height="2" fill="#000"/>
<rect x="733" y="556" width="5" height="4" fill="#00ffff"/>
<rect x="736" y="557" width="1" height="2" fill="#000"/>
<rect x="739" y="556" width="6" height="4" fill="#00ffff"/>
<rect x="740" y="557" width="1" height="2" fill="#000"/>
<rect x="740" y="556" width="1" height="4" fill="#000"/>
<rect x="746" y="556" width="1" height="4" fill="#00ffff"/>
<rect x="733" y="563" width="5" height="4" fill="#00ffff"/>
<rect x="734" y="565" width="2" height="1" fill="#000"/>
<rect x="734" y="566" width="1" height="1" fill="#000"/>
<rect x="740" y="563" width="5" height="4" fill="#00ffff"/>
<rect x="741" y="564" width="1" height="2" fill="#000"/>
<rect x="740" y="563" width="1" height="4" fill="#000"/>
<rect x="733" y="570" width="4" height="4" fill="#00ffff"/>
<rect x="735" y="572" width="2" height="1" fill="#000"/>
<rect x="738" y="570" width="6" height="4" fill="#00ffff"/>
<rect x="739" y="571" width="2" height="2" fill="#000"/>
<rect x="742" y="570" width="1" height="4" fill="#000"/>
<rect x="745" y="570" width="2" height="4" fill="#00ffff"/>
<rect x="767" y="521" width="4" height="4" fill="#00ffff"/>
<rect x="769" y="523" width="2" height="1" fill="#000"/>
<rect x="770" y="524" width="1" height="-2" fill="#000"/>
<rect x="772" y="521" width="3" height="4" fill="#00ffff"/>
<rect x="773" y="523" width="2" height="1" fill="#000"/>
<rect x="767" y="529" width="5" height="4" fill="#00ffff"/>
<rect x="768" y="530" width="1" height="2" fill="#000"/>
<rect x="768" y="532" width="1" height="-2" fill="#000"/>
<rect x="773" y="529" width="2" height="4" fill="#00ffff"/>
<rect x="767" y="536" width="5" height="4" fill="#00ffff"/>
<rect x="770" y="537" width="2" height="2" fill="#000"/>
<rect x="767" y="539" width="1" height="-2" fill="#000"/>
<rect x="772" y="536" width="3" height="4" fill="#00ffff"/>
<rect x="773" y="537" width="2" height="2" fill="#000"/>
<rect x="772" y="539" width="1" height="1" fill="#000"/>
<rect x="767" y="543" width="5" height="4" fill="#00ffff"/>
<rect x="769" y="544" width="1" height="2" fill="#000"/>
<rect x="773" y="543" width="2" height="4" fill="#00ffff"/>
<rect x="767" y="549" width="4" height="4" fill="#00ffff"/>
<rect x="768" y="550" width="2" height="2" fill="#000"/>
<rect x="771" y="549" width="4" height="4" fill="#00ffff"/>
<rect x="773" y="551" width="1" height="1" fill="#000"/>
<rect x="774" y="549" width="1" height="1" fill="#000"/>
<rect x="767" y="556" width="5" height="4" fill="#00ffff"/>
<rect x="768" y="557" width="2" height="2" fill="#000"/>
<rect x="770" y="556" width="1" height="4" fill="#000"/>
<rect x="774" y="556" width="1" height="4" fill="#00ffff"/>
<rect x="767" y="563" width="5" height="4" fill="#00ffff"/>
<rect x="768" y="564" width="2" height="2" fill="#000"/>
<rect x="773" y="563" width="2" height="4" fill="#00ffff"/>
<rect x="767" y="570" width="4" height="4" fill="#00ffff"/>
<rect x="769" y="571" width="1" height="2" fill="#000"/>
<rect x="770" y="570" width="1" height="4" fill="#000"/>
<rect x="771" y="570" width="4" height="4" fill="#00ffff"/>
<rect x="772" y="572" width="1" height="1" fill="#000"/>
<rect x="794" y="521" width="5" height="4" fill="#00ffff"/>
<rect x="796" y="522" width="1" height="2" fill="#000"/>
<rect x="799" y="521" width="3" height="4" fill="#00ffff"/>
<rect x="800" y="522" width="2" height="2" fill="#000"/>
<rect x="794" y="529" width="6" height="4" fill="#00ffff"/>
<rect x="797" y="530" width="2" height="2" fill="#000"/>
<rect x="797" y="532" width="1" height="-2" fill="#000"/>
<rect x="801" y="529" width="1" height="4" fill="#00ffff"/>
<rect x="794" y="536" width="4" height="4" fill="#00ffff"/>
<rect x="796" y="538" width="1" height="1" fill="#000"/>
<rect x="799" y="536" width="3" height="4" fill="#00ffff"/>
<rect x="800" y="537" width="1" height="1" fill="#000"/>
<rect x="800" y="539" width="1" height="-2" fill="#000"/>
<rect x="794" y="543" width="6" height="4" fill="#00ffff"/>
<rect x="796" y="545" width="1" height="1" fill="#000"/>
<rect x="795" y="543" width="1" height="4" fill="#000"/>
<rect x="801" y="543" width="1" height="4" fill="#00ffff"/>
<rect x="794" y="549" width="5" height="4" fill="#00ffff"/>
<rect x="797" y="551" width="2" height="1" fill="#000"/>
<rect x="799" y="549" width="3" height="4" fill="#00ffff"/>
<rect x="800" y="551" width="2" height="1" fill="#000"/>
<rect x="794" y="556" width="5" height="4" fill="#00ffff"/>
<rect x="796" y="557" width="1" height="2" fill="#000"/>
<rect x="796" y="556" width="1" height="1" fill="#000"/>
<rect x="801" y="556" width="1" height="4" fill="#00ffff"/>
<rect x="794" y="563" width="4" height="4" fill="#00ffff"/>
<rect x="796" y="564" width="1" height="1" fill="#000"/>
<rect x="799" y="563" width="3" height="4" fill="#00ffff"/>
<rect x="800" y="564" width="1" height="2" fill="#000"/>
<rect x="800" y="566" width="1" height="1" fill="#000"/>
<rect x="794" y="570" width="4" height="4" fill="#00ffff"/>
<rect x="796" y="571" width="2" height="2" fill="#000"/>
<rect x="796" y="573" width="1" height="-2" fill="#000"/>
<rect x="798" y="570" width="4" height="4" fill="#00ffff"/>
<rect x="800" y="571" width="1" height="2" fill="#000"/>
<rect x="711" y="524" width="6" height="5" fill="#00ffff"/>
<rect x="715" y="526" width="2" height="1" fill="#000"/>
<rect x="711" y="524" width="1" height="5" fill="#000"/>
<rect x="719" y="524" width="4" height="5" fill="#00ffff"/>
<rect x="721" y="527" width="1" height="1" fill="#000"/>
<rect x="722" y="524" width="1" height="1" fill="#000"/>
<rect x="724" y="524" width="4" height="5" fill="#00ffff"/>
<rect x="725" y="526" width="1" height="1" fill="#000"/>
<rect x="711" y="546" width="5" height="5" fill="#00ffff"/>
<rect x="712" y="547" width="2" height="2" fill="#000"/>
<rect x="715" y="546" width="1" height="5" fill="#000"/>
<rect x="718" y="546" width="4" height="5" fill="#00ffff"/>
<rect x="720" y="548" width="1" height="2" fill="#000"/>
<rect x="721" y="546" width="1" height="5" fill="#000"/>
<rect x="722" y="546" width="4" height="5" fill="#00ffff"/>
<rect x="724" y="547" width="1" height="1" fill="#000"/>
<rect x="722" y="546" width="1" height="1" fill="#000"/>
<rect x="727" y="546" width="1" height="5" fill="#00ffff"/>
<rect x="711" y="566" width="5" height="5" fill="#00ffff"/>
<rect x="712" y="567" width="1" height="2" fill="#000"/>
<rect x="712" y="566" width="1" height="5" fill="#000"/>
<rect x="718" y="566" width="6" height="5" fill="#00ffff"/>
<rect x="721" y="569" width="1" height="1" fill="#000"/>
<rect x="718" y="566" width="1" height="5" fill="#000"/>
<rect x="725" y="566" width="3" height="5" fill="#00ffff"/>
<rect x="726" y="567" width="2" height="2" fill="#000"/>
<rect x="727" y="570" width="1" height="1" fill="#000"/>
<rect x="753" y="524" width="5" height="5" fill="#00ffff"/>
<rect x="754" y="525" width="2" height="2" fill="#000"/>
<rect x="756" y="528" width="1" height="1" fill="#000"/>
<rect x="759" y="524" width="2" height="5" fill="#00ffff"/>
<rect x="753" y="546" width="5" height="5" fill="#00ffff"/>
<rect x="756" y="547" width="2" height="1" fill="#000"/>
<rect x="754" y="550" width="1" height="1" fill="#000"/>
<rect x="758" y="546" width="3" height="5" fill="#00ffff"/>
<rect x="759" y="548" width="2" height="1" fill="#000"/>
<rect x="758" y="546" width="1" height="5" fill="#000"/>
<rect x="753" y="566" width="5" height="5" fill="#00ffff"/>
<rect x="756" y="568" width="1" height="2" fill="#000"/>
<rect x="756" y="570" width="1" height="-3" fill="#000"/>
<rect x="759" y="566" width="2" height="5" fill="#00ffff"/>
<rect x="781" y="524" width="6" height="5" fill="#00ffff"/>
<rect x="784" y="526" width="2" height="1" fill="#000"/>
<rect x="785" y="528" width="1" height="-3" fill="#000"/>
<rect x="788" y="524" width="1" height="5" fill="#00ffff"/>
<rect x="781" y="546" width="5" height="5" fill="#00ffff"/>
<rect x="784" y="547" width="1" height="1" fill="#000"/>
<rect x="782" y="550" width="1" height="1" fill="#000"/>
<rect x="788" y="546" width="1" height="5" fill="#00ffff"/>
<rect x="781" y="566" width="5" height="5" fill="#00ffff"/>
<rect x="783" y="567" width="2" height="2" fill="#000"/>
<rect x="787" y="566" width="2" height="5" fill="#00ffff"/>
<rect x="807" y="524" width="5" height="5" fill="#00ffff"/>
<rect x="810" y="525" width="1" height="1" fill="#000"/>
<rect x="811" y="528" width="1" height="-3" fill="#000"/>
<rect x="813" y="524" width="5" height="5" fill="#00ffff"/>
<rect x="815" y="526" width="1" height="1" fill="#000"/>
<rect x="814" y="528" width="1" height="-3" fill="#000"/>
<rect x="819" y="524" width="3" height="5" fill="#00ffff"/>
<rect x="820" y="526" width="1" height="2" fill="#000"/>
<rect x="807" y="546" width="4" height="5" fill="#00ffff"/>
<rect x="808" y="548" width="1" height="2" fill="#000"/>
<rect x="813" y="546" width="6" height="5" fill="#00ffff"/>
<rect x="815" y="547" width="1" height="2" fill="#000"/>
<rect x="815" y="550" width="1" height="-3" fill="#000"/>
<rect x="821" y="546" width="1" height="5" fill="#00ffff"/>
<rect x="807" y="566" width="5" height="5" fill="#00ffff"/>
<rect x="810" y="567" width="1" height="2" fill="#000"/>
<rect x="807" y="566" width="1" height="5" fill="#000"/>
<rect x="814" y="566" width="6" height="5" fill="#00ffff"/>
<rect x="815" y="568" width="2" height="2" fill="#000"/>
<rect x="814" y="570" width="1" height="1" fill="#000"/>
<rect x="820" y="566" width="2" height="5" fill="#00ffff"/>
<rect x="855" y="524" width="4" height="5" fill="#00ffff"/>
<rect x="856" y="525" width="1" height="1" fill="#000"/>
<rect x="857" y="524" width="1" height="5" fill="#000"/>
<rect x="860" y="524" width="3" height="5" fill="#00ffff"/>
<rect x="861" y="526" width="2" height="2" fill="#000"/>
<rect x="855" y="546" width="4" height="5" fill="#00ffff"/>
<rect x="856" y="547" width="1" height="2" fill="#000"/>
<rect x="858" y="546" width="1" height="5" fill="#000"/>
<rect x="860" y="546" width="3" height="5" fill="#00ffff"/>
<rect x="861" y="547" width="2" height="1" fill="#000"/>
<rect x="861" y="550" width="1" height="-3" fill="#000"/>
<rect x="855" y="566" width="6" height="5" fill="#00ffff"/>
<rect x="859" y="567" width="1" height="2" fill="#000"/>
<rect x="862" y="566" width="1" height="5" fill="#00ffff"/>
<rect x="828" y="524" width="4" height="5" fill="#00ffff"/>
<rect x="829" y="526" width="2" height="2" fill="#000"/>
<rect x="833" y="524" width="3" height="5" fill="#00ffff"/>
<rect x="834" y="525" width="2" height="1" fill="#000"/>
<rect x="835" y="524" width="1" height="5" fill="#000"/>
<rect x="828" y="539" width="5" height="5" fill="#00ffff"/>
<rect x="830" y="542" width="2" height="1" fill="#000"/>
<rect x="831" y="539" width="1" height="5" fill="#000"/>
<rect x="834" y="539" width="2" height="5" fill="#00ffff"/>
<rect x="828" y="552" width="5" height="5" fill="#00ffff"/>
<rect x="829" y="553" width="1" height="1" fill="#000"/>
<rect x="835" y="552" width="1" height="5" fill="#00ffff"/>
<rect x="828" y="566" width="5" height="5" fill="#00ffff"/>
<rect x="831" y="569" width="2" height="1" fill="#000"/>
<rect x="828" y="570" width="1" height="-3" fill="#000"/>
<rect x="835" y="566" width="1" height="5" fill="#00ffff"/>
<rect x="841" y="524" width="4" height="5" fill="#00ffff"/>
<rect x="843" y="527" width="2" height="1" fill="#000"/>
<rect x="843" y="524" width="1" height="1" fill="#000"/>
<rect x="846" y="524" width="3" height="5" fill="#00ffff"/>
<rect x="847" y="525" width="2" height="1" fill="#000"/>
<rect x="841" y="539" width="6" height="5" fill="#00ffff"/>
<rect x="842" y="540" width="2" height="2" fill="#000"/>
<rect x="841" y="539" width="1" height="1" fill="#000"/>
<rect x="848" y="539" width="1" height="5" fill="#00ffff"/>
<rect x="841" y="552" width="5" height="5" fill="#00ffff"/>
<rect x="843" y="553" width="1" height="1" fill="#000"/>
<rect x="847" y="552" width="2" height="5" fill="#00ffff"/>
<rect x="841" y="566" width="6" height="5" fill="#00ffff"/>
<rect x="845" y="568" width="1" height="1" fill="#000"/>
<rect x="848" y="566" width="1" height="5" fill="#00ffff"/>
<rect x="714" y="577" width="5" height="5" fill="#00ffff"/>
<rect x="715" y="578" width="1" height="2" fill="#000"/>
<rect x="720" y="577" width="6" height="5" fill="#00ffff"/>
<rect x="722" y="580" width="2" height="1" fill="#000"/>
<rect x="736" y="577" width="4" height="5" fill="#00ffff"/>
<rect x="737" y="579" width="2" height="2" fill="#000"/>
<rect x="738" y="581" width="1" height="1" fill="#000"/>
<rect x="740" y="577" width="4" height="5" fill="#00ffff"/>
<rect x="741" y="578" width="2" height="2" fill="#000"/>
<rect x="753" y="577" width="5" height="5" fill="#00ffff"/>
<rect x="754" y="579" width="2" height="1" fill="#000"/>
<rect x="753" y="577" width="1" height="1" fill="#000"/>
<rect x="758" y="577" width="3" height="5" fill="#00ffff"/>
<rect x="759" y="578" width="1" height="1" fill="#000"/>
<rect x="767" y="577" width="5" height="5" fill="#00ffff"/>
<rect x="770" y="578" width="1" height="2" fill="#000"/>
<rect x="771" y="577" width="1" height="5" fill="#000"/>
<rect x="773" y="577" width="2" height="5" fill="#00ffff"/>
<rect x="781" y="577" width="5" height="5" fill="#00ffff"/>
<rect x="782" y="580" width="2" height="1" fill="#000"/>
<rect x="785" y="577" width="1" height="5" fill="#000"/>
<rect x="787" y="577" width="2" height="5" fill="#00ffff"/>
<rect x="794" y="577" width="5" height="5" fill="#00ffff"/>
<rect x="797" y="580" width="2" height="1" fill="#000"/>
<rect x="801" y="577" width="1" height="5" fill="#00ffff"/>
<rect x="811" y="577" width="5" height="5" fill="#00ffff"/>
<rect x="814" y="579" width="2" height="2" fill="#000"/>
<rect x="817" y="577" width="2" height="5" fill="#00ffff"/>
<rect x="828" y="577" width="6" height="5" fill="#00ffff"/>
<rect x="832" y="579" width="1" height="1" fill="#000"/>
<rect x="835" y="577" width="1" height="5" fill="#00ffff"/>
<rect x="841" y="577" width="5" height="5" fill="#00ffff"/>
<rect x="842" y="578" width="1" height="2" fill="#000"/>
<rect x="841" y="581" width="1" height="1" fill="#000"/>
<rect x="847" y="577" width="2" height="5" fill="#00ffff"/>
<rect x="855" y="577" width="4" height="5" fill="#00ffff"/>
<rect x="856" y="579" width="2" height="2" fill="#000"/>
<rect x="856" y="581" width="1" height="-3" fill="#000"/>
<rect x="859" y="577" width="4" height="5" fill="#00ffff"/>
<rect x="860" y="578" width="1" height="2" fill="#000"/>
<rect x="859" y="581" width="1" height="1" fill="#000"/>
<rect x="959" y="75" width="5" height="5" fill="#00ffff"/>
<rect x="961" y="77" width="2" height="1" fill="#000"/>
<rect x="965" y="75" width="5" height="5" fill="#00ffff"/>
<rect x="967" y="77" width="1" height="2" fill="#000"/>
<rect x="970" y="75" width="4" height="5" fill="#00ffff"/>
<rect x="971" y="76" width="2" height="2" fill="#000"/>
<rect x="971" y="75" width="1" height="5" fill="#000"/>
<rect x="959" y="82" width="3" height="5" fill="#00ffff"/>
<rect x="960" y="83" width="1" height="2" fill="#000"/>
<rect x="961" y="86" width="1" height="1" fill="#000"/>
<rect x="965" y="82" width="5" height="5" fill="#00ffff"/>
<rect x="967" y="84" width="2" height="2" fill="#000"/>
<rect x="969" y="86" width="1" height="1" fill="#000"/>
<rect x="971" y="82" width="4" height="5" fill="#00ffff"/>
<rect x="972" y="84" width="2" height="2" fill="#000"/>
<rect x="977" y="82" width="5" height="5" fill="#00ffff"/>
<rect x="979" y="84" width="2" height="2" fill="#000"/>
<rect x="984" y="82" width="5" height="5" fill="#00ffff"/>
<rect x="987" y="83" width="2" height="1" fill="#000"/>
<rect x="984" y="86" width="1" height="-3" fill="#000"/>
<rect x="990" y="82" width="5" height="5" fill="#00ffff"/>
<rect x="993" y="83" width="2" height="2" fill="#000"/>
<rect x="996" y="82" width="5" height="5" fill="#00ffff"/>
<rect x="997" y="84" width="1" height="1" fill="#000"/>
<rect x="959" y="88" width="3" height="5" fill="#00ffff"/>
<rect x="960" y="90" width="1" height="2" fill="#000"/>
<rect x="961" y="88" width="1" height="1" fill="#000"/>
<rect x="965" y="88" width="6" height="5" fill="#00ffff"/>
<rect x="968" y="91" width="1" height="1" fill="#000"/>
<rect x="965" y="88" width="1" height="1" fill="#000"/>
<rect x="973" y="88" width="4" height="5" fill="#00ffff"/>
<rect x="974" y="91" width="2" height="1" fill="#000"/>
<rect x="979" y="88" width="6" height="5" fill="#00ffff"/>
<rect x="980" y="91" width="2" height="1" fill="#000"/>
<rect x="980" y="92" width="1" height="1" fill="#000"/>
<rect x="986" y="88" width="4" height="5" fill="#00ffff"/>
<rect x="987" y="90" width="1" height="1" fill="#000"/>
<rect x="989" y="88" width="1" height="1" fill="#000"/>
<rect x="991" y="88" width="6" height="5" fill="#00ffff"/>
<rect x="992" y="89" width="1" height="2" fill="#000"/>
<rect x="991" y="88" width="1" height="1" fill="#000"/>
<rect x="998" y="88" width="4" height="5" fill="#00ffff"/>
<rect x="1000" y="90" width="2" height="2" fill="#000"/>
<rect x="1002" y="88" width="4" height="5" fill="#00ffff"/>
<rect x="1004" y="90" width="2" height="1" fill="#000"/>
<rect x="1005" y="88" width="1" height="1" fill="#000"/>
<rect x="1007" y="88" width="2" height="5" fill="#00ffff"/>
<rect x="965.5" y="95.5" width="109" height="13" stroke="#00ff00" stroke-width="1" fill="none"/>
<line x1="965" y1="102.5" x2="1074" y2="102.5" stroke="#00ff00" stroke-width="1" />
<line x1="981.5" y1="95" x2="981.5" y2="108" stroke="#00ff00" stroke-width="1" />
<line x1="1005.5" y1="95" x2="1005.5" y2="108" stroke="#00ff00" stroke-width="1" />
<line x1="1026.5" y1="95" x2="1026.5" y2="108" stroke="#00ff00" stroke-width="1" />
<line x1="1050.5" y1="95" x2="1050.5" y2="108" stroke="#00ff00" stroke-width="1" />
<rect x="969" y="97" width="5" height="5" fill="#00ffff"/>
<rect x="971" y="99" width="1" height="2" fill="#000"/>
<rect x="972" y="101" width="1" height="1" fill="#000"/>
<rect x="975" y="97" width="2" height="5" fill="#00ffff"/>
<rect x="969" y="103" width="5" height="5" fill="#00ffff"/>
<rect x="971" y="105" width="1" height="2" fill="#000"/>
<rect x="971" y="103" width="1" height="5" fill="#000"/>
<rect x="975" y="103" width="2" height="5" fill="#00ffff"/>
<rect x="985" y="97" width="5" height="5" fill="#00ffff"/>
<rect x="986" y="99" width="1" height="2" fill="#000"/>
<rect x="987" y="97" width="1" height="5" fill="#000"/>
<rect x="990" y="97" width="5" height="5" fill="#00ffff"/>
<rect x="992" y="98" width="2" height="1" fill="#000"/>
<rect x="996" y="97" width="5" height="5" fill="#00ffff"/>
<rect x="998" y="99" width="1" height="1" fill="#000"/>
<rect x="996" y="97" width="1" height="5" fill="#000"/>
<rect x="985" y="103" width="4" height="5" fill="#00ffff"/>
<rect x="986" y="104" width="2" height="2" fill="#000"/>
<rect x="990" y="103" width="5" height="5" fill="#00ffff"/>
<rect x="993" y="104" width="2" height="1" fill="#000"/>
<rect x="996" y="103" width="5" height="5" fill="#00ffff"/>
<rect x="998" y="104" width="2" height="1" fill="#000"/>
<rect x="999" y="107" width="1" height="1" fill="#000"/>
<rect x="1009" y="97" width="6" height="5" fill="#00ffff"/>
<rect x="1011" y="98" width="1" height="2" fill="#000"/>
<rect x="1014" y="101" width="1" height="1" fill="#000"/>
<rect x="1016" y="97" width="6" height="5" fill="#00ffff"/>
<rect x="1020" y="98" width="1" height="2" fill="#000"/>
<rect x="1018" y="97" width="1" height="1" fill="#000"/>
<rect x="1009" y="103" width="4" height="5" fill="#00ffff"/>
<rect x="1011" y="105" width="1" height="1" fill="#000"/>
<rect x="1009" y="107" width="1" height="-3" fill="#000"/>
<rect x="1015" y="103" width="5" height="5" fill="#00ffff"/>
<rect x="1018" y="105" width="2" height="2" fill="#000"/>
<rect x="1021" y="103" width="1" height="5" fill="#00ffff"/>
<rect x="1030" y="97" width="4" height="5" fill="#00ffff"/>
<rect x="1031" y="99" width="1" height="1" fill="#000"/>
<rect x="1035" y="97" width="4" height="5" fill="#00ffff"/>
<rect x="1037" y="99" width="1" height="1" fill="#000"/>
<rect x="1038" y="101" width="1" height="1" fill="#000"/>
<rect x="1041" y="97" width="5" height="5" fill="#00ffff"/>
<rect x="1044" y="99" width="1" height="1" fill="#000"/>
<rect x="1042" y="97" width="1" height="5" fill="#000"/>
<rect x="1030" y="103" width="5" height="5" fill="#00ffff"/>
<rect x="1033" y="106" width="2" height="1" fill="#000"/>
<rect x="1030" y="103" width="1" height="5" fill="#000"/>
<rect x="1036" y="103" width="6" height="5" fill="#00ffff"/>
<rect x="1039" y="104" width="2" height="1" fill="#000"/>
<rect x="1043" y="103" width="3" height="5" fill="#00ffff"/>
<rect x="1044" y="106" width="2" height="1" fill="#000"/>
<rect x="1054" y="97" width="5" height="5" fill="#00ffff"/>
<rect x="1055" y="98" width="2" height="2" fill="#000"/>
<rect x="1060" y="97" width="5" height="5" fill="#00ffff"/>
<rect x="1062" y="98" width="1" height="2" fill="#000"/>
<rect x="1066" y="97" width="4" height="5" fill="#00ffff"/>
<rect x="1067" y="99" width="2" height="1" fill="#000"/>
<rect x="1068" y="101" width="1" height="-3" fill="#000"/>
<rect x="1054" y="103" width="5" height="5" fill="#00ffff"/>
<rect x="1057" y="105" width="1" height="2" fill="#000"/>
<rect x="1054" y="103" width="1" height="5" fill="#000"/>
<rect x="1059" y="103" width="4" height="5" fill="#00ffff"/>
<rect x="1061" y="104" width="2" height="2" fill="#000"/>
<rect x="1063" y="103" width="5" height="5" fill="#00ffff"/>
<rect x="1065" y="105" width="1" height="1" fill="#000"/>
<rect x="959" y="113" width="3" height="5" fill="#00ffff"/>
<rect x="960" y="116" width="1" height="1" fill="#000"/>
<rect x="960" y="113" width="1" height="5" fill="#000"/>
<rect x="965" y="113" width="5" height="5" fill="#00ffff"/>
<rect x="968" y="114" width="2" height="1" fill="#000"/>
<rect x="971" y="113" width="6" height="5" fill="#00ffff"/>
<rect x="974" y="114" width="2" height="2" fill="#000"/>
<rect x="973" y="117" width="1" height="-3" fill="#000"/>
<rect x="978" y="113" width="4" height="5" fill="#00ffff"/>
<rect x="980" y="114" width="2" height="1" fill="#000"/>
<rect x="979" y="117" width="1" height="-3" fill="#000"/>
<rect x="983" y="113" width="5" height="5" fill="#00ffff"/>
<rect x="985" y="114" width="1" height="2" fill="#000"/>
<rect x="988" y="113" width="5" height="5" fill="#00ffff"/>
<rect x="990" y="114" width="2" height="1" fill="#000"/>
<rect x="988" y="113" width="1" height="5" fill="#000"/>
<rect x="994" y="113" width="4" height="5" fill="#00ffff"/>
<rect x="995" y="115" width="2" height="1" fill="#000"/>
<rect x="996" y="113" width="1" height="5" fill="#000"/>
<rect x="999" y="113" width="5" height="5" fill="#00ffff"/>
<rect x="1001" y="115" width="1" height="1" fill="#000"/>
<rect x="1005" y="113" width="5" height="5" fill="#00ffff"/>
<rect x="1007" y="115" width="2" height="2" fill="#000"/>
<rect x="1011" y="113" width="5" height="5" fill="#00ffff"/>
<rect x="1014" y="114" width="1" height="1" fill="#000"/>
<rect x="1016" y="113" width="4" height="5" fill="#00ffff"/>
<rect x="1018" y="115" width="1" height="2" fill="#000"/>
<rect x="1019" y="117" width="1" height="-3" fill="#000"/>
<rect x="1021" y="113" width="5" height="5" fill="#00ffff"/>
<rect x="1022" y="114" width="2" height="1" fill="#000"/>
<rect x="1027" y="113" width="5" height="5" fill="#00ffff"/>
<rect x="1028" y="114" width="1" height="2" fill="#000"/>
<rect x="1034" y="113" width="4" height="5" fill="#00ffff"/>
<rect x="1035" y="114" width="1" height="2" fill="#000"/>
<rect x="959" y="120" width="3" height="5" fill="#00ffff"/>
<rect x="960" y="121" width="2" height="1" fill="#000"/>
<rect x="965" y="120" width="5" height="5" fill="#00ffff"/>
<rect x="966" y="121" width="1" height="2" fill="#000"/>
<rect x="965" y="120" width="1" height="5" fill="#000"/>
<rect x="971" y="120" width="4" height="5" fill="#00ffff"/>
<rect x="973" y="123" width="1" height="1" fill="#000"/>
<rect x="973" y="120" width="1" height="5" fill="#000"/>
<rect x="976" y="120" width="4" height="5" fill="#00ffff"/>
<rect x="977" y="122" width="2" height="1" fill="#000"/>
<rect x="981" y="120" width="5" height="5" fill="#00ffff"/>
<rect x="984" y="121" width="1" height="2" fill="#000"/>
<rect x="987" y="120" width="5" height="5" fill="#00ffff"/>
<rect x="990" y="121" width="2" height="2" fill="#000"/>
<rect x="987" y="124" width="1" height="-3" fill="#000"/>
<rect x="993" y="120" width="5" height="5" fill="#00ffff"/>
<rect x="996" y="122" width="1" height="2" fill="#000"/>
<rect x="995" y="124" width="1" height="1" fill="#000"/>
<rect x="999" y="120" width="4" height="5" fill="#00ffff"/>
<rect x="1000" y="122" width="1" height="2" fill="#000"/>
<rect x="1004" y="120" width="4" height="5" fill="#00ffff"/>
<rect x="1006" y="121" width="2" height="2" fill="#000"/>
<rect x="1004" y="124" width="1" height="1" fill="#000"/>
<rect x="1010" y="120" width="5" height="5" fill="#00ffff"/>
<rect x="1011" y="121" width="1" height="1" fill="#000"/>
<rect x="1015" y="120" width="5" height="5" fill="#00ffff"/>
<rect x="1017" y="122" width="1" height="2" fill="#000"/>
<rect x="1018" y="124" width="1" height="-3" fill="#000"/>
<rect x="1021" y="120" width="5" height="5" fill="#00ffff"/>
<rect x="1024" y="123" width="1" height="1" fill="#000"/>
<rect x="1027" y="120" width="5" height="5" fill="#00ffff"/>
<rect x="1028" y="122" width="1" height="2" fill="#000"/>
<rect x="1033" y="120" width="4" height="5" fill="#00ffff"/>
<rect x="1035" y="122" width="2" height="1" fill="#000"/>
<rect x="1038" y="120" width="5" height="5" fill="#00ffff"/>
<rect x="1040" y="122" width="1" height="2" fill="#000"/>
<rect x="1042" y="124" width="1" height="1" fill="#000"/>
<rect x="1044" y="120" width="5" height="5" fill="#00ffff"/>
<rect x="1046" y="121" width="1" height="2" fill="#000"/>
<rect x="1050" y="120" width="4" height="5" fill="#00ffff"/>
<rect x="1052" y="122" width="2" height="2" fill="#000"/>
<rect x="1052" y="120" width="1" height="1" fill="#000"/>
<rect x="959" y="126" width="3" height="5" fill="#00ffff"/>
<rect x="960" y="127" width="1" height="2" fill="#000"/>
<rect x="959" y="126" width="1" height="5" fill="#000"/>
<rect x="965" y="126" width="5" height="5" fill="#00ffff"/>
<rect x="967" y="127" width="2" height="2" fill="#000"/>
<rect x="966" y="130" width="1" height="1" fill="#000"/>
<rect x="972" y="126" width="4" height="5" fill="#00ffff"/>
<rect x="974" y="129" width="1" height="1" fill="#000"/>
<rect x="975" y="130" width="1" height="-3" fill="#000"/>
<rect x="978" y="126" width="5" height="5" fill="#00ffff"/>
<rect x="981" y="127" width="1" height="1" fill="#000"/>
<rect x="984" y="126" width="4" height="5" fill="#00ffff"/>
<rect x="986" y="127" width="1" height="1" fill="#000"/>
<rect x="984" y="130" width="1" height="-3" fill="#000"/>
<rect x="989" y="126" width="5" height="5" fill="#00ffff"/>
<rect x="992" y="129" width="2" height="1" fill="#000"/>
<rect x="991" y="126" width="1" height="1" fill="#000"/>
<rect x="994" y="126" width="4" height="5" fill="#00ffff"/>
<rect x="996" y="128" width="2" height="2" fill="#000"/>
<rect x="999" y="126" width="4" height="5" fill="#00ffff"/>
<rect x="1001" y="128" width="2" height="1" fill="#000"/>
<rect x="999" y="126" width="1" height="1" fill="#000"/>
<rect x="1004" y="126" width="4" height="5" fill="#00ffff"/>
<rect x="1006" y="128" width="1" height="2" fill="#000"/>
<rect x="1010" y="126" width="5" height="5" fill="#00ffff"/>
<rect x="1013" y="128" width="1" height="2" fill="#000"/>
<rect x="1016" y="126" width="6" height="5" fill="#00ffff"/>
<rect x="1019" y="127" width="2" height="2" fill="#000"/>
<rect x="1019" y="126" width="1" height="5" fill="#000"/>
<rect x="1023" y="126" width="5" height="5" fill="#00ffff"/>
<rect x="1024" y="129" width="1" height="1" fill="#000"/>
<rect x="1027" y="126" width="1" height="1" fill="#000"/>
<rect x="1029" y="126" width="3" height="5" fill="#00ffff"/>
<rect x="1030" y="129" width="1" height="1" fill="#000"/>
<rect x="1031" y="126" width="1" height="5" fill="#000"/>
<rect x="959" y="132" width="3" height="5" fill="#00ffff"/>
<rect x="960" y="134" width="1" height="2" fill="#000"/>
<rect x="959" y="132" width="1" height="1" fill="#000"/>
<rect x="965" y="132" width="6" height="5" fill="#00ffff"/>
<rect x="968" y="133" width="2" height="1" fill="#000"/>
<rect x="968" y="132" width="1" height="1" fill="#000"/>
<rect x="972" y="132" width="4" height="5" fill="#00ffff"/>
<rect x="974" y="133" width="2" height="1" fill="#000"/>
<rect x="975" y="136" width="1" height="1" fill="#000"/>
<rect x="976" y="132" width="5" height="5" fill="#00ffff"/>
<rect x="977" y="134" width="1" height="2" fill="#000"/>
<rect x="982" y="132" width="4" height="5" fill="#00ffff"/>
<rect x="984" y="133" width="2" height="1" fill="#000"/>
<rect x="988" y="132" width="6" height="5" fill="#00ffff"/>
<rect x="989" y="135" width="2" height="1" fill="#000"/>
<rect x="991" y="132" width="1" height="5" fill="#000"/>
<rect x="995" y="132" width="5" height="5" fill="#00ffff"/>
<rect x="996" y="133" width="1" height="1" fill="#000"/>
<rect x="1001" y="132" width="5" height="5" fill="#00ffff"/>
<rect x="1002" y="134" width="1" height="2" fill="#000"/>
<rect x="1004" y="136" width="1" height="-3" fill="#000"/>
<rect x="1008" y="132" width="5" height="5" fill="#00ffff"/>
<rect x="1011" y="133" width="1" height="1" fill="#000"/>
<rect x="1009" y="136" width="1" height="-3" fill="#000"/>
<rect x="1014" y="132" width="4" height="5" fill="#00ffff"/>
<rect x="1016" y="133" width="1" height="1" fill="#000"/>
<rect x="1019" y="132" width="3" height="5" fill="#00ffff"/>
<rect x="1020" y="135" width="1" height="1" fill="#000"/>
<rect x="1020" y="132" width="1" height="5" fill="#000"/>
<rect x="959" y="138" width="3" height="5" fill="#00ffff"/>
<rect x="960" y="139" width="2" height="1" fill="#000"/>
<rect x="959" y="138" width="1" height="1" fill="#000"/>
<rect x="965" y="138" width="5" height="5" fill="#00ffff"/>
<rect x="967" y="141" width="2" height="1" fill="#000"/>
<rect x="969" y="142" width="1" height="1" fill="#000"/>
<rect x="971" y="138" width="6" height="5" fill="#00ffff"/>
<rect x="975" y="139" width="2" height="2" fill="#000"/>
<rect x="977" y="138" width="5" height="5" fill="#00ffff"/>
<rect x="980" y="139" width="2" height="1" fill="#000"/>
<rect x="982" y="138" width="5" height="5" fill="#00ffff"/>
<rect x="985" y="139" width="1" height="1" fill="#000"/>
<rect x="988" y="138" width="6" height="5" fill="#00ffff"/>
<rect x="991" y="140" width="2" height="2" fill="#000"/>
<rect x="995" y="138" width="6" height="5" fill="#00ffff"/>
<rect x="999" y="140" width="1" height="2" fill="#000"/>
<rect x="1001" y="138" width="5" height="5" fill="#00ffff"/>
<rect x="1003" y="140" width="1" height="2" fill="#000"/>
<rect x="1008" y="138" width="5" height="5" fill="#00ffff"/>
<rect x="1010" y="140" width="2" height="2" fill="#000"/>
<rect x="1011" y="138" width="1" height="1" fill="#000"/>
<rect x="959" y="145" width="3" height="5" fill="#00ffff"/>
<rect x="960" y="146" width="1" height="2" fill="#000"/>
<rect x="961" y="149" width="1" height="-3" fill="#000"/>
<rect x="965" y="145" width="5" height="5" fill="#00ffff"/>
<rect x="967" y="147" width="1" height="1" fill="#000"/>
<rect x="970" y="145" width="4" height="5" fill="#00ffff"/>
<rect x="972" y="146" width="2" height="2" fill="#000"/>
<rect x="973" y="145" width="1" height="5" fill="#000"/>
<rect x="974" y="145" width="5" height="5" fill="#00ffff"/>
<rect x="975" y="148" width="1" height="1" fill="#000"/>
<rect x="978" y="145" width="1" height="5" fill="#000"/>
<rect x="981" y="145" width="5" height="5" fill="#00ffff"/>
<rect x="983" y="148" width="1" height="1" fill="#000"/>
<rect x="983" y="145" width="1" height="1" fill="#000"/>
<rect x="987" y="145" width="5" height="5" fill="#00ffff"/>
<rect x="989" y="147" width="2" height="1" fill="#000"/>
<rect x="990" y="145" width="1" height="1" fill="#000"/>
<rect x="993" y="145" width="6" height="5" fill="#00ffff"/>
<rect x="996" y="146" width="2" height="2" fill="#000"/>
<rect x="993" y="149" width="1" height="1" fill="#000"/>
<rect x="999" y="145" width="5" height="5" fill="#00ffff"/>
<rect x="1001" y="148" width="1" height="1" fill="#000"/>
<rect x="1006" y="145" width="5" height="5" fill="#00ffff"/>
<rect x="1007" y="146" width="1" height="2" fill="#000"/>
<rect x="1011" y="145" width="6" height="5" fill="#00ffff"/>
<rect x="1015" y="146" width="2" height="1" fill="#000"/>
<rect x="1017" y="145" width="6" height="5" fill="#00ffff"/>
<rect x="1019" y="147" width="2" height="1" fill="#000"/>
<rect x="1021" y="145" width="1" height="1" fill="#000"/>
<rect x="1024" y="145" width="6" height="5" fill="#00ffff"/>
<rect x="1027" y="147" width="2" height="2" fill="#000"/>
<rect x="1025" y="145" width="1" height="1" fill="#000"/>
<rect x="1031" y="145" width="3" height="5" fill="#00ffff"/>
<rect x="1032" y="146" width="1" height="2" fill="#000"/>
<rect x="959" y="151" width="3" height="5" fill="#00ffff"/>
<rect x="960" y="153" width="1" height="1" fill="#000"/>
<rect x="965" y="151" width="5" height="5" fill="#00ffff"/>
<rect x="968" y="152" width="2" height="1" fill="#000"/>
<rect x="965" y="155" width="1" height="1" fill="#000"/>
<rect x="971" y="151" width="5" height="5" fill="#00ffff"/>
<rect x="974" y="152" width="2" height="2" fill="#000"/>
<rect x="974" y="155" width="1" height="1" fill="#000"/>
<rect x="977" y="151" width="5" height="5" fill="#00ffff"/>
<rect x="978" y="153" width="2" height="2" fill="#000"/>
<rect x="983" y="151" width="5" height="5" fill="#00ffff"/>
<rect x="985" y="153" width="1" height="1" fill="#000"/>
<rect x="989" y="151" width="4" height="5" fill="#00ffff"/>
<rect x="991" y="153" width="1" height="1" fill="#000"/>
<rect x="994" y="151" width="5" height="5" fill="#00ffff"/>
<rect x="997" y="153" width="2" height="2" fill="#000"/>
<rect x="995" y="151" width="1" height="1" fill="#000"/>
<rect x="999" y="151" width="4" height="5" fill="#00ffff"/>
<rect x="1000" y="152" width="1" height="2" fill="#000"/>
<rect x="959" y="157" width="3" height="5" fill="#00ffff"/>
<rect x="960" y="160" width="1" height="1" fill="#000"/>
<rect x="961" y="157" width="1" height="1" fill="#000"/>
<rect x="965" y="157" width="4" height="5" fill="#00ffff"/>
<rect x="966" y="159" width="1" height="1" fill="#000"/>
<rect x="970" y="157" width="6" height="5" fill="#00ffff"/>
<rect x="972" y="160" width="1" height="1" fill="#000"/>
<rect x="973" y="161" width="1" height="-3" fill="#000"/>
<rect x="978" y="157" width="5" height="5" fill="#00ffff"/>
<rect x="981" y="159" width="2" height="1" fill="#000"/>
<rect x="979" y="157" width="1" height="1" fill="#000"/>
<rect x="983" y="157" width="4" height="5" fill="#00ffff"/>
<rect x="984" y="158" width="1" height="2" fill="#000"/>
<rect x="984" y="157" width="1" height="5" fill="#000"/>
<rect x="988" y="157" width="6" height="5" fill="#00ffff"/>
<rect x="991" y="160" width="1" height="1" fill="#000"/>
<rect x="996" y="157" width="4" height="5" fill="#00ffff"/>
<rect x="998" y="159" width="1" height="1" fill="#000"/>
<rect x="998" y="161" width="1" height="-3" fill="#000"/>
<rect x="1001" y="157" width="5" height="5" fill="#00ffff"/>
<rect x="1002" y="158" width="1" height="2" fill="#000"/>
<rect x="1007" y="157" width="5" height="5" fill="#00ffff"/>
<rect x="1010" y="158" width="1" height="2" fill="#000"/>
<rect x="1010" y="161" width="1" height="-3" fill="#000"/>
<rect x="1013" y="157" width="5" height="5" fill="#00ffff"/>
<rect x="1015" y="160" width="2" height="1" fill="#000"/>
<rect x="1017" y="157" width="1" height="1" fill="#000"/>
<rect x="1020" y="157" width="6" height="5" fill="#00ffff"/>
<rect x="1021" y="160" width="1" height="1" fill="#000"/>
<rect x="1025" y="157" width="1" height="5" fill="#000"/>
<rect x="1028" y="157" width="3" height="5" fill="#00ffff"/>
<rect x="1029" y="158" width="1" height="2" fill="#000"/>
<rect x="1030" y="161" width="1" height="1" fill="#000"/>
<rect x="958" y="187" width="5" height="5" fill="#00ffff"/>
<rect x="959" y="188" width="2" height="1" fill="#000"/>
<rect x="962" y="187" width="1" height="5" fill="#000"/>
<rect x="958" y="193" width="3" height="5" fill="#00ffff"/>
<rect x="959" y="195" width="1" height="2" fill="#000"/>
<rect x="960" y="193" width="1" height="1" fill="#000"/>
<rect x="964" y="193" width="5" height="5" fill="#00ffff"/>
<rect x="965" y="194" width="2" height="1" fill="#000"/>
<rect x="971" y="193" width="5" height="5" fill="#00ffff"/>
<rect x="972" y="194" width="1" height="1" fill="#000"/>
<rect x="977" y="193" width="6" height="5" fill="#00ffff"/>
<rect x="978" y="194" width="1" height="2" fill="#000"/>
<rect x="984" y="193" width="5" height="5" fill="#00ffff"/>
<rect x="987" y="194" width="1" height="1" fill="#000"/>
<rect x="984" y="193" width="1" height="1" fill="#000"/>
<rect x="966" y="200" width="5" height="5" fill="#00ffff"/>
<rect x="968" y="202" width="1" height="1" fill="#000"/>
<rect x="969" y="204" width="1" height="-3" fill="#000"/>
<rect x="972" y="200" width="5" height="5" fill="#00ffff"/>
<rect x="975" y="201" width="2" height="1" fill="#000"/>
<rect x="978" y="200" width="5" height="5" fill="#00ffff"/>
<rect x="981" y="201" width="1" height="2" fill="#000"/>
<rect x="983" y="200" width="4" height="5" fill="#00ffff"/>
<rect x="985" y="203" width="1" height="1" fill="#000"/>
<rect x="983" y="204" width="1" height="1" fill="#000"/>
<rect x="988" y="200" width="5" height="5" fill="#00ffff"/>
<rect x="990" y="201" width="2" height="2" fill="#000"/>
<rect x="994" y="200" width="4" height="5" fill="#00ffff"/>
<rect x="995" y="202" width="2" height="2" fill="#000"/>
<rect x="1000" y="200" width="4" height="5" fill="#00ffff"/>
<rect x="1002" y="201" width="1" height="1" fill="#000"/>
<rect x="1001" y="204" width="1" height="-3" fill="#000"/>
<rect x="1004" y="200" width="6" height="5" fill="#00ffff"/>
<rect x="1007" y="202" width="1" height="2" fill="#000"/>
<rect x="1009" y="204" width="1" height="1" fill="#000"/>
<rect x="1011" y="200" width="4" height="5" fill="#00ffff"/>
<rect x="1012" y="202" width="2" height="1" fill="#000"/>
<rect x="1013" y="204" width="1" height="-3" fill="#000"/>
<rect x="1016" y="200" width="4" height="5" fill="#00ffff"/>
<rect x="1018" y="201" width="2" height="2" fill="#000"/>
<rect x="1018" y="200" width="1" height="5" fill="#000"/>
<rect x="966" y="206" width="5" height="5" fill="#00ffff"/>
<rect x="969" y="208" width="1" height="1" fill="#000"/>
<rect x="968" y="206" width="1" height="5" fill="#000"/>
<rect x="972" y="206" width="5" height="5" fill="#00ffff"/>
<rect x="975" y="208" width="2" height="2" fill="#000"/>
<rect x="976" y="206" width="1" height="1" fill="#000"/>
<rect x="977" y="206" width="4" height="5" fill="#00ffff"/>
<rect x="978" y="207" width="2" height="1" fill="#000"/>
<rect x="979" y="210" width="1" height="-3" fill="#000"/>
<rect x="983" y="206" width="6" height="5" fill="#00ffff"/>
<rect x="986" y="207" width="2" height="2" fill="#000"/>
<rect x="985" y="210" width="1" height="1" fill="#000"/>
<rect x="989" y="206" width="4" height="5" fill="#00ffff"/>
<rect x="991" y="208" width="1" height="2" fill="#000"/>
<rect x="989" y="210" width="1" height="1" fill="#000"/>
<rect x="994" y="206" width="5" height="5" fill="#00ffff"/>
<rect x="997" y="207" width="2" height="2" fill="#000"/>
<rect x="994" y="210" width="1" height="-3" fill="#000"/>
<rect x="1000" y="206" width="4" height="5" fill="#00ffff"/>
<rect x="1001" y="207" width="2" height="2" fill="#000"/>
<rect x="1005" y="206" width="6" height="5" fill="#00ffff"/>
<rect x="1009" y="209" width="2" height="1" fill="#000"/>
<rect x="1010" y="210" width="1" height="1" fill="#000"/>
<rect x="1012" y="206" width="5" height="5" fill="#00ffff"/>
<rect x="1014" y="209" width="2" height="1" fill="#000"/>
<rect x="1018" y="206" width="2" height="5" fill="#00ffff"/>
<rect x="958" y="212" width="3" height="5" fill="#00ffff"/>
<rect x="959" y="214" width="2" height="2" fill="#000"/>
<rect x="964" y="212" width="5" height="5" fill="#00ffff"/>
<rect x="966" y="215" width="2" height="1" fill="#000"/>
<rect x="969" y="212" width="4" height="5" fill="#00ffff"/>
<rect x="971" y="214" width="2" height="2" fill="#000"/>
<rect x="973" y="212" width="5" height="5" fill="#00ffff"/>
<rect x="976" y="214" width="1" height="2" fill="#000"/>
<rect x="979" y="212" width="4" height="5" fill="#00ffff"/>
<rect x="981" y="213" width="2" height="2" fill="#000"/>
<rect x="982" y="216" width="1" height="-3" fill="#000"/>
<rect x="984" y="212" width="6" height="5" fill="#00ffff"/>
<rect x="985" y="214" width="2" height="2" fill="#000"/>
<rect x="985" y="212" width="1" height="1" fill="#000"/>
<rect x="992" y="212" width="6" height="5" fill="#00ffff"/>
<rect x="993" y="213" width="1" height="2" fill="#000"/>
<rect x="999" y="212" width="6" height="5" fill="#00ffff"/>
<rect x="1002" y="214" width="2" height="2" fill="#000"/>
<rect x="1006" y="212" width="5" height="5" fill="#00ffff"/>
<rect x="1007" y="214" width="1" height="2" fill="#000"/>
<rect x="1006" y="216" width="1" height="-3" fill="#000"/>
<rect x="1013" y="212" width="4" height="5" fill="#00ffff"/>
<rect x="1014" y="214" width="1" height="2" fill="#000"/>
<rect x="1015" y="212" width="1" height="1" fill="#000"/>
<rect x="1018" y="212" width="5" height="5" fill="#00ffff"/>
<rect x="1020" y="215" width="2" height="1" fill="#000"/>
<rect x="1024" y="212" width="6" height="5" fill="#00ffff"/>
<rect x="1027" y="215" width="2" height="1" fill="#000"/>
<rect x="1031" y="212" width="5" height="5" fill="#00ffff"/>
<rect x="1034" y="214" width="1" height="1" fill="#000"/>
<rect x="958" y="218" width="3" height="5" fill="#00ffff"/>
<rect x="959" y="219" width="2" height="1" fill="#000"/>
<rect x="964" y="218" width="6" height="5" fill="#00ffff"/>
<rect x="965" y="219" width="1" height="2" fill="#000"/>
<rect x="967" y="218" width="1" height="5" fill="#000"/>
<rect x="971" y="218" width="5" height="5" fill="#00ffff"/>
<rect x="973" y="219" width="1" height="2" fill="#000"/>
<rect x="972" y="222" width="1" height="-3" fill="#000"/>
<rect x="977" y="218" width="1" height="5" fill="#00ffff"/>
<rect x="966" y="225" width="5" height="5" fill="#00ffff"/>
<rect x="967" y="226" width="1" height="2" fill="#000"/>
<rect x="970" y="229" width="1" height="-3" fill="#000"/>
<rect x="972" y="225" width="5" height="5" fill="#00ffff"/>
<rect x="974" y="226" width="2" height="2" fill="#000"/>
<rect x="975" y="229" width="1" height="1" fill="#000"/>
<rect x="978" y="225" width="5" height="5" fill="#00ffff"/>
<rect x="979" y="226" width="2" height="2" fill="#000"/>
<rect x="984" y="225" width="4" height="5" fill="#00ffff"/>
<rect x="985" y="227" width="1" height="1" fill="#000"/>
<rect x="986" y="225" width="1" height="1" fill="#000"/>
<rect x="989" y="225" width="5" height="5" fill="#00ffff"/>
<rect x="990" y="227" width="1" height="2" fill="#000"/>
<rect x="991" y="229" width="1" height="1" fill="#000"/>
<rect x="995" y="225" width="4" height="5" fill="#00ffff"/>
<rect x="997" y="226" width="2" height="2" fill="#000"/>
<rect x="1000" y="225" width="4" height="5" fill="#00ffff"/>
<rect x="1002" y="227" width="1" height="2" fill="#000"/>
<rect x="1005" y="225" width="6" height="5" fill="#00ffff"/>
<rect x="1007" y="228" width="2" height="1" fill="#000"/>
<rect x="1006" y="229" width="1" height="1" fill="#000"/>
<rect x="1012" y="225" width="5" height="5" fill="#00ffff"/>
<rect x="1015" y="227" width="1" height="2" fill="#000"/>
<rect x="1017" y="225" width="5" height="5" fill="#00ffff"/>
<rect x="1018" y="228" width="2" height="1" fill="#000"/>
<rect x="1017" y="229" width="1" height="-3" fill="#000"/>
<rect x="1023" y="225" width="4" height="5" fill="#00ffff"/>
<rect x="1025" y="227" width="1" height="2" fill="#000"/>
<rect x="1024" y="229" width="1" height="1" fill="#000"/>
<rect x="1028" y="225" width="4" height="5" fill="#00ffff"/>
<rect x="1029" y="227" width="2" height="1" fill="#000"/>
<rect x="1031" y="225" width="1" height="1" fill="#000"/>
<rect x="1032" y="225" width="5" height="5" fill="#00ffff"/>
<rect x="1035" y="228" width="2" height="1" fill="#000"/>
<rect x="1037" y="225" width="1" height="5" fill="#00ffff"/>
<rect x="958" y="231" width="3" height="5" fill="#00ffff"/>
<rect x="959" y="232" width="2" height="1" fill="#000"/>
<rect x="960" y="231" width="1" height="1" fill="#000"/>
<rect x="964" y="231" width="4" height="5" fill="#00ffff"/>
<rect x="965" y="232" width="2" height="1" fill="#000"/>
<rect x="965" y="231" width="1" height="1" fill="#000"/>
<rect x="970" y="231" width="6" height="5" fill="#00ffff"/>
<rect x="972" y="232" width="2" height="2" fill="#000"/>
<rect x="977" y="231" width="4" height="5" fill="#00ffff"/>
<rect x="978" y="232" width="2" height="2" fill="#000"/>
<rect x="982" y="231" width="4" height="5" fill="#00ffff"/>
<rect x="983" y="234" width="1" height="1" fill="#000"/>
<rect x="988" y="231" width="5" height="5" fill="#00ffff"/>
<rect x="991" y="234" width="1" height="1" fill="#000"/>
<rect x="992" y="235" width="1" height="-3" fill="#000"/>
<rect x="994" y="231" width="5" height="5" fill="#00ffff"/>
<rect x="995" y="234" width="2" height="1" fill="#000"/>
<rect x="1000" y="231" width="5" height="5" fill="#00ffff"/>
<rect x="1001" y="233" width="2" height="1" fill="#000"/>
<rect x="1002" y="231" width="1" height="5" fill="#000"/>
<rect x="1007" y="231" width="5" height="5" fill="#00ffff"/>
<rect x="1008" y="232" width="1" height="1" fill="#000"/>
<rect x="1011" y="231" width="1" height="5" fill="#000"/>
<rect x="1012" y="231" width="6" height="5" fill="#00ffff"/>
<rect x="1014" y="232" width="1" height="1" fill="#000"/>
<rect x="1002" y="237" width="5" height="5" fill="#00ffff"/>
<rect x="1004" y="238" width="2" height="1" fill="#000"/>
<rect x="1003" y="241" width="1" height="1" fill="#000"/>
<rect x="1008" y="237" width="4" height="5" fill="#00ffff"/>
<rect x="1009" y="239" width="1" height="1" fill="#000"/>
<rect x="1012" y="237" width="5" height="5" fill="#00ffff"/>
<rect x="1013" y="239" width="1" height="1" fill="#000"/>
<rect x="1016" y="241" width="1" height="1" fill="#000"/>
<rect x="1018" y="237" width="5" height="5" fill="#00ffff"/>
<rect x="1019" y="238" width="1" height="1" fill="#000"/>
<rect x="1024" y="237" width="6" height="5" fill="#00ffff"/>
<rect x="1027" y="240" width="1" height="1" fill="#000"/>
<rect x="1031" y="237" width="4" height="5" fill="#00ffff"/>
<rect x="1032" y="238" width="1" height="2" fill="#000"/>
<rect x="1031" y="241" width="1" height="1" fill="#000"/>
<rect x="958" y="278" width="5" height="5" fill="#00ffff"/>
<rect x="961" y="281" width="2" height="1" fill="#000"/>
<rect x="964" y="278" width="5" height="5" fill="#00ffff"/>
<rect x="965" y="281" width="1" height="1" fill="#000"/>
<rect x="958" y="284" width="3" height="5" fill="#00ffff"/>
<rect x="959" y="286" width="1" height="2" fill="#000"/>
<rect x="958" y="284" width="1" height="1" fill="#000"/>
<rect x="964" y="284" width="4" height="5" fill="#00ffff"/>
<rect x="965" y="286" width="2" height="2" fill="#000"/>
<rect x="964" y="288" width="1" height="1" fill="#000"/>
<rect x="968" y="284" width="6" height="5" fill="#00ffff"/>
<rect x="970" y="285" width="2" height="2" fill="#000"/>
<rect x="969" y="284" width="1" height="5" fill="#000"/>
<rect x="975" y="284" width="4" height="5" fill="#00ffff"/>
<rect x="977" y="286" width="1" height="2" fill="#000"/>
<rect x="980" y="284" width="4" height="5" fill="#00ffff"/>
<rect x="982" y="285" width="1" height="2" fill="#000"/>
<rect x="980" y="284" width="1" height="5" fill="#000"/>
<rect x="985" y="284" width="4" height="5" fill="#00ffff"/>
<rect x="986" y="285" width="2" height="1" fill="#000"/>
<rect x="986" y="288" width="1" height="1" fill="#000"/>
<rect x="991" y="284" width="4" height="5" fill="#00ffff"/>
<rect x="993" y="286" width="1" height="2" fill="#000"/>
<rect x="991" y="284" width="1" height="1" fill="#000"/>
<rect x="958" y="290" width="3" height="5" fill="#00ffff"/>
<rect x="959" y="293" width="1" height="1" fill="#000"/>
<rect x="964" y="290" width="5" height="5" fill="#00ffff"/>
<rect x="966" y="291" width="1" height="2" fill="#000"/>
<rect x="967" y="294" width="1" height="-3" fill="#000"/>
<rect x="970" y="290" width="4" height="5" fill="#00ffff"/>
<rect x="972" y="291" width="2" height="1" fill="#000"/>
<rect x="973" y="290" width="1" height="5" fill="#000"/>
<rect x="975" y="290" width="6" height="5" fill="#00ffff"/>
<rect x="977" y="292" width="2" height="1" fill="#000"/>
<rect x="976" y="290" width="1" height="5" fill="#000"/>
<rect x="982" y="290" width="6" height="5" fill="#00ffff"/>
<rect x="985" y="291" width="1" height="1" fill="#000"/>
<rect x="983" y="294" width="1" height="-3" fill="#000"/>
<rect x="989" y="290" width="1" height="5" fill="#00ffff"/>
<rect x="958" y="296" width="3" height="5" fill="#00ffff"/>
<rect x="959" y="297" width="1" height="1" fill="#000"/>
<rect x="959" y="300" width="1" height="-3" fill="#000"/>
<rect x="964" y="296" width="6" height="5" fill="#00ffff"/>
<rect x="965" y="298" width="2" height="1" fill="#000"/>
<rect x="969" y="300" width="1" height="1" fill="#000"/>
<rect x="971" y="296" width="5" height="5" fill="#00ffff"/>
<rect x="974" y="299" width="2" height="1" fill="#000"/>
<rect x="977" y="296" width="5" height="5" fill="#00ffff"/>
<rect x="980" y="299" width="2" height="1" fill="#000"/>
<rect x="979" y="296" width="1" height="5" fill="#000"/>
<rect x="958" y="302" width="3" height="5" fill="#00ffff"/>
<rect x="959" y="304" width="1" height="1" fill="#000"/>
<rect x="964" y="302" width="6" height="5" fill="#00ffff"/>
<rect x="966" y="304" width="1" height="2" fill="#000"/>
<rect x="970" y="302" width="4" height="5" fill="#00ffff"/>
<rect x="971" y="304" width="1" height="2" fill="#000"/>
<rect x="972" y="306" width="1" height="-3" fill="#000"/>
<rect x="976" y="302" width="5" height="5" fill="#00ffff"/>
<rect x="978" y="304" width="2" height="1" fill="#000"/>
<rect x="978" y="302" width="1" height="5" fill="#000"/>
<rect x="982" y="302" width="5" height="5" fill="#00ffff"/>
<rect x="985" y="305" width="2" height="1" fill="#000"/>
<rect x="957.5" y="312.5" width="101" height="18" stroke="#00ff00" stroke-width="1" fill="none"/>
<line x1="957" y1="318.5" x2="1058" y2="318.5" stroke="#00ff00" stroke-width="1" />
<line x1="957" y1="324.5" x2="1058" y2="324.5" stroke="#00ff00" stroke-width="1" />
<line x1="963.5" y1="312" x2="963.5" y2="330" stroke="#00ff00" stroke-width="1" />
<line x1="992.5" y1="312" x2="992.5" y2="330" stroke="#00ff00" stroke-width="1" />
<line x1="1004.5" y1="312" x2="1004.5" y2="330" stroke="#00ff00" stroke-width="1" />
<line x1="1018.5" y1="312" x2="1018.5" y2="330" stroke="#00ff00" stroke-width="1" />
<line x1="1030.5" y1="312" x2="1030.5" y2="330" stroke="#00ff00" stroke-width="1" />
<line x1="1044.5" y1="312" x2="1044.5" y2="330" stroke="#00ff00" stroke-width="1" />
<rect x="958" y="313" width="3" height="5" fill="#00ffff"/>
<rect x="959" y="315" width="2" height="2" fill="#000"/>
<rect x="958" y="313" width="1" height="5" fill="#000"/>
<rect x="968" y="313" width="5" height="5" fill="#00ffff"/>
<rect x="971" y="316" width="2" height="1" fill="#000"/>
<rect x="974" y="313" width="5" height="5" fill="#00ffff"/>
<rect x="975" y="316" width="2" height="1" fill="#000"/>
<rect x="980" y="313" width="5" height="5" fill="#00ffff"/>
<rect x="983" y="315" width="1" height="2" fill="#000"/>
<rect x="980" y="313" width="1" height="5" fill="#000"/>
<rect x="994" y="313" width="5" height="5" fill="#00ffff"/>
<rect x="995" y="315" width="1" height="1" fill="#000"/>
<rect x="996" y="313" width="1" height="5" fill="#000"/>
<rect x="1000" y="313" width="1" height="5" fill="#00ffff"/>
<rect x="1006" y="313" width="5" height="5" fill="#00ffff"/>
<rect x="1009" y="315" width="1" height="1" fill="#000"/>
<rect x="1008" y="317" width="1" height="-3" fill="#000"/>
<rect x="1012" y="313" width="3" height="5" fill="#00ffff"/>
<rect x="1013" y="316" width="1" height="1" fill="#000"/>
<rect x="1020" y="313" width="5" height="5" fill="#00ffff"/>
<rect x="1021" y="315" width="2" height="2" fill="#000"/>
<rect x="1026" y="313" width="1" height="5" fill="#00ffff"/>
<rect x="1032" y="313" width="6" height="5" fill="#00ffff"/>
<rect x="1034" y="315" width="1" height="2" fill="#000"/>
<rect x="1039" y="313" width="2" height="5" fill="#00ffff"/>
<rect x="1046" y="313" width="6" height="5" fill="#00ffff"/>
<rect x="1049" y="314" width="1" height="1" fill="#000"/>
<rect x="1053" y="313" width="2" height="5" fill="#00ffff"/>
<rect x="958" y="319" width="3" height="5" fill="#00ffff"/>
<rect x="959" y="321" width="2" height="2" fill="#000"/>
<rect x="959" y="323" width="1" height="-3" fill="#000"/>
<rect x="968" y="319" width="4" height="5" fill="#00ffff"/>
<rect x="969" y="321" width="1" height="2" fill="#000"/>
<rect x="973" y="319" width="5" height="5" fill="#00ffff"/>
<rect x="976" y="321" width="2" height="1" fill="#000"/>
<rect x="979" y="319" width="4" height="5" fill="#00ffff"/>
<rect x="980" y="320" width="2" height="1" fill="#000"/>
<rect x="984" y="319" width="2" height="5" fill="#00ffff"/>
<rect x="994" y="319" width="5" height="5" fill="#00ffff"/>
<rect x="995" y="320" width="1" height="1" fill="#000"/>
<rect x="995" y="319" width="1" height="1" fill="#000"/>
<rect x="1000" y="319" width="1" height="5" fill="#00ffff"/>
<rect x="1006" y="319" width="5" height="5" fill="#00ffff"/>
<rect x="1007" y="321" width="2" height="2" fill="#000"/>
<rect x="1009" y="323" width="1" height="1" fill="#000"/>
<rect x="1012" y="319" width="3" height="5" fill="#00ffff"/>
<rect x="1013" y="320" width="1" height="1" fill="#000"/>
<rect x="1020" y="319" width="5" height="5" fill="#00ffff"/>
<rect x="1023" y="321" width="2" height="2" fill="#000"/>
<rect x="1024" y="319" width="1" height="1" fill="#000"/>
<rect x="1025" y="319" width="2" height="5" fill="#00ffff"/>
<rect x="1032" y="319" width="5" height="5" fill="#00ffff"/>
<rect x="1033" y="320" width="1" height="2" fill="#000"/>
<rect x="1033" y="323" width="1" height="1" fill="#000"/>
<rect x="1038" y="319" width="3" height="5" fill="#00ffff"/>
<rect x="1039" y="320" width="1" height="2" fill="#000"/>
<rect x="1040" y="319" width="1" height="1" fill="#000"/>
<rect x="1046" y="319" width="5" height="5" fill="#00ffff"/>
<rect x="1049" y="321" width="1" height="2" fill="#000"/>
<rect x="1046" y="319" width="1" height="5" fill="#000"/>
<rect x="1052" y="319" width="3" height="5" fill="#00ffff"/>
<rect x="1053" y="321" width="2" height="1" fill="#000"/>
<rect x="1052" y="319" width="1" height="5" fill="#000"/>
<rect x="958" y="325" width="3" height="5" fill="#00ffff"/>
<rect x="959" y="328" width="2" height="1" fill="#000"/>
<rect x="958" y="329" width="1" height="-3" fill="#000"/>
<rect x="968" y="325" width="5" height="5" fill="#00ffff"/>
<rect x="969" y="326" width="1" height="2" fill="#000"/>
<rect x="972" y="329" width="1" height="1" fill="#000"/>
<rect x="975" y="325" width="5" height="5" fill="#00ffff"/>
<rect x="976" y="328" width="2" height="1" fill="#000"/>
<rect x="975" y="329" width="1" height="-3" fill="#000"/>
<rect x="980" y="325" width="5" height="5" fill="#00ffff"/>
<rect x="983" y="327" width="2" height="2" fill="#000"/>
<rect x="994" y="325" width="4" height="5" fill="#00ffff"/>
<rect x="996" y="328" width="2" height="1" fill="#000"/>
<rect x="995" y="325" width="1" height="5" fill="#000"/>
<rect x="1000" y="325" width="1" height="5" fill="#00ffff"/>
<rect x="1006" y="325" width="5" height="5" fill="#00ffff"/>
<rect x="1007" y="327" width="1" height="1" fill="#000"/>
<rect x="1012" y="325" width="3" height="5" fill="#00ffff"/>
<rect x="1013" y="328" width="1" height="1" fill="#000"/>
<rect x="1014" y="329" width="1" height="-3" fill="#000"/>
<rect x="1020" y="325" width="5" height="5" fill="#00ffff"/>
<rect x="1022" y="327" width="1" height="2" fill="#000"/>
<rect x="1025" y="325" width="2" height="5" fill="#00ffff"/>
<rect x="1032" y="325" width="6" height="5" fill="#00ffff"/>
<rect x="1034" y="327" width="2" height="2" fill="#000"/>
<rect x="1039" y="325" width="2" height="5" fill="#00ffff"/>
<rect x="1046" y="325" width="4" height="5" fill="#00ffff"/>
<rect x="1048" y="326" width="2" height="1" fill="#000"/>
<rect x="1047" y="329" width="1" height="1" fill="#000"/>
<rect x="1051" y="325" width="4" height="5" fill="#00ffff"/>
<rect x="1053" y="326" width="1" height="1" fill="#000"/>
<rect x="1051" y="329" width="1" height="-3" fill="#000"/>
<rect x="958" y="334" width="3" height="5" fill="#00ffff"/>
<rect x="959" y="336" width="2" height="2" fill="#000"/>
<rect x="959" y="338" width="1" height="1" fill="#000"/>
<rect x="964" y="334" width="4" height="5" fill="#00ffff"/>
<rect x="965" y="335" width="1" height="2" fill="#000"/>
<rect x="969" y="334" width="5" height="5" fill="#00ffff"/>
<rect x="971" y="336" width="2" height="2" fill="#000"/>
<rect x="975" y="334" width="5" height="5" fill="#00ffff"/>
<rect x="977" y="336" width="1" height="1" fill="#000"/>
<rect x="981" y="334" width="4" height="5" fill="#00ffff"/>
<rect x="983" y="336" width="2" height="2" fill="#000"/>
<rect x="986" y="334" width="2" height="5" fill="#00ffff"/>
<rect x="958" y="340" width="3" height="5" fill="#00ffff"/>
<rect x="959" y="341" width="2" height="1" fill="#000"/>
<rect x="958" y="344" width="1" height="-3" fill="#000"/>
<rect x="964" y="340" width="6" height="5" fill="#00ffff"/>
<rect x="967" y="342" width="2" height="2" fill="#000"/>
<rect x="972" y="340" width="6" height="5" fill="#00ffff"/>
<rect x="975" y="342" width="1" height="2" fill="#000"/>
<rect x="976" y="340" width="1" height="5" fill="#000"/>
<rect x="978" y="340" width="6" height="5" fill="#00ffff"/>
<rect x="980" y="341" width="2" height="1" fill="#000"/>
<rect x="983" y="340" width="1" height="1" fill="#000"/>
<rect x="984" y="340" width="6" height="5" fill="#00ffff"/>
<rect x="986" y="341" width="1" height="2" fill="#000"/>
<rect x="988" y="344" width="1" height="-3" fill="#000"/>
<rect x="991" y="340" width="4" height="5" fill="#00ffff"/>
<rect x="993" y="342" width="1" height="1" fill="#000"/>
<rect x="996" y="340" width="5" height="5" fill="#00ffff"/>
<rect x="998" y="342" width="1" height="1" fill="#000"/>
<rect x="1002" y="340" width="6" height="5" fill="#00ffff"/>
<rect x="1004" y="341" width="1" height="1" fill="#000"/>
<rect x="1009" y="340" width="4" height="5" fill="#00ffff"/>
<rect x="1010" y="343" width="1" height="1" fill="#000"/>
<rect x="1010" y="340" width="1" height="1" fill="#000"/>
<rect x="1014" y="340" width="6" height="5" fill="#00ffff"/>
<rect x="1018" y="343" width="2" height="1" fill="#000"/>
<rect x="1021" y="340" width="6" height="5" fill="#00ffff"/>
<rect x="1025" y="341" width="1" height="1" fill="#000"/>
<rect x="1028" y="340" width="5" height="5" fill="#00ffff"/>
<rect x="1029" y="341" width="1" height="1" fill="#000"/>
<rect x="1034" y="340" width="4" height="5" fill="#00ffff"/>
<rect x="1035" y="342" width="1" height="2" fill="#000"/>
<rect x="1034" y="344" width="1" height="-3" fill="#000"/>
<rect x="1039" y="340" width="3" height="5" fill="#00ffff"/>
<rect x="1040" y="343" width="1" height="1" fill="#000"/>
<rect x="958" y="346" width="3" height="5" fill="#00ffff"/>
<rect x="959" y="347" width="1" height="1" fill="#000"/>
<rect x="964" y="346" width="6" height="5" fill="#00ffff"/>
<rect x="966" y="348" width="1" height="1" fill="#000"/>
<rect x="968" y="350" width="1" height="-3" fill="#000"/>
<rect x="972" y="346" width="5" height="5" fill="#00ffff"/>
<rect x="974" y="348" width="2" height="2" fill="#000"/>
<rect x="977" y="346" width="5" height="5" fill="#00ffff"/>
<rect x="980" y="349" width="1" height="1" fill="#000"/>
<rect x="979" y="350" width="1" height="-3" fill="#000"/>
<rect x="982" y="346" width="4" height="5" fill="#00ffff"/>
<rect x="984" y="348" width="2" height="2" fill="#000"/>
<rect x="986" y="346" width="4" height="5" fill="#00ffff"/>
<rect x="988" y="348" width="2" height="2" fill="#000"/>
<rect x="958" y="352" width="3" height="5" fill="#00ffff"/>
<rect x="959" y="354" width="2" height="2" fill="#000"/>
<rect x="960" y="352" width="1" height="5" fill="#000"/>
<rect x="964" y="352" width="6" height="5" fill="#00ffff"/>
<rect x="967" y="353" width="1" height="1" fill="#000"/>
<rect x="970" y="352" width="2" height="5" fill="#00ffff"/>
<rect x="957.5" y="361.5" width="94" height="13" stroke="#00ff00" stroke-width="1" fill="none"/>
<line x1="957" y1="367.5" x2="1051" y2="367.5" stroke="#00ff00" stroke-width="1" />
<line x1="984.5" y1="361" x2="984.5" y2="374" stroke="#00ff00" stroke-width="1" />
<line x1="998.5" y1="361" x2="998.5" y2="374" stroke="#00ff00" stroke-width="1" />
<line x1="1011.5" y1="361" x2="1011.5" y2="374" stroke="#00ff00" stroke-width="1" />
<line x1="1024.5" y1="361" x2="1024.5" y2="374" stroke="#00ff00" stroke-width="1" />
<line x1="1038.5" y1="361" x2="1038.5" y2="374" stroke="#00ff00" stroke-width="1" />
<rect x="962" y="362" width="4" height="5" fill="#00ffff"/>
<rect x="964" y="363" width="2" height="2" fill="#000"/>
<rect x="964" y="362" width="1" height="5" fill="#000"/>
<rect x="966" y="362" width="4" height="5" fill="#00ffff"/>
<rect x="967" y="364" width="2" height="2" fill="#000"/>
<rect x="971" y="362" width="6" height="5" fill="#00ffff"/>
<rect x="973" y="363" width="1" height="1" fill="#000"/>
<rect x="972" y="362" width="1" height="1" fill="#000"/>
<rect x="977" y="362" width="2" height="5" fill="#00ffff"/>
<rect x="986" y="362" width="5" height="5" fill="#00ffff"/>
<rect x="987" y="364" width="1" height="1" fill="#000"/>
<rect x="989" y="366" width="1" height="1" fill="#000"/>
<rect x="992" y="362" width="3" height="5" fill="#00ffff"/>
<rect x="993" y="363" width="1" height="1" fill="#000"/>
<rect x="992" y="362" width="1" height="5" fill="#000"/>
<rect x="1000" y="362" width="4" height="5" fill="#00ffff"/>
<rect x="1001" y="363" width="2" height="1" fill="#000"/>
<rect x="1005" y="362" width="3" height="5" fill="#00ffff"/>
<rect x="1006" y="364" width="2" height="2" fill="#000"/>
<rect x="1005" y="366" width="1" height="-3" fill="#000"/>
<rect x="1013" y="362" width="5" height="5" fill="#00ffff"/>
<rect x="1014" y="363" width="2" height="2" fill="#000"/>
<rect x="1013" y="366" width="1" height="-3" fill="#000"/>
<rect x="1018" y="362" width="3" height="5" fill="#00ffff"/>
<rect x="1019" y="363" width="1" height="2" fill="#000"/>
<rect x="1026" y="362" width="5" height="5" fill="#00ffff"/>
<rect x="1029" y="363" width="1" height="2" fill="#000"/>
<rect x="1030" y="362" width="1" height="5" fill="#000"/>
<rect x="1031" y="362" width="4" height="5" fill="#00ffff"/>
<rect x="1033" y="364" width="1" height="2" fill="#000"/>
<rect x="1034" y="362" width="1" height="5" fill="#000"/>
<rect x="1040" y="362" width="4" height="5" fill="#00ffff"/>
<rect x="1042" y="364" width="2" height="2" fill="#000"/>
<rect x="1043" y="366" width="1" height="-3" fill="#000"/>
<rect x="1044" y="362" width="4" height="5" fill="#00ffff"/>
<rect x="1045" y="364" width="2" height="2" fill="#000"/>
<rect x="962" y="369" width="4" height="5" fill="#00ffff"/>
<rect x="963" y="371" width="2" height="1" fill="#000"/>
<rect x="968" y="369" width="6" height="5" fill="#00ffff"/>
<rect x="971" y="372" width="2" height="1" fill="#000"/>
<rect x="975" y="369" width="4" height="5" fill="#00ffff"/>
<rect x="977" y="370" width="2" height="1" fill="#000"/>
<rect x="977" y="369" width="1" height="5" fill="#000"/>
<rect x="986" y="369" width="5" height="5" fill="#00ffff"/>
<rect x="988" y="371" width="1" height="2" fill="#000"/>
<rect x="987" y="373" width="1" height="-3" fill="#000"/>
<rect x="993" y="369" width="2" height="5" fill="#00ffff"/>
<rect x="1000" y="369" width="5" height="5" fill="#00ffff"/>
<rect x="1003" y="371" width="2" height="1" fill="#000"/>
<rect x="1000" y="369" width="1" height="1" fill="#000"/>
<rect x="1005" y="369" width="3" height="5" fill="#00ffff"/>
<rect x="1006" y="371" width="1" height="2" fill="#000"/>
<rect x="1013" y="369" width="5" height="5" fill="#00ffff"/>
<rect x="1015" y="370" width="1" height="2" fill="#000"/>
<rect x="1019" y="369" width="2" height="5" fill="#00ffff"/>
<rect x="1026" y="369" width="5" height="5" fill="#00ffff"/>
<rect x="1027" y="370" width="2" height="1" fill="#000"/>
<rect x="1032" y="369" width="3" height="5" fill="#00ffff"/>
<rect x="1033" y="370" width="2" height="1" fill="#000"/>
<rect x="1040" y="369" width="4" height="5" fill="#00ffff"/>
<rect x="1041" y="371" width="1" height="2" fill="#000"/>
<rect x="1045" y="369" width="3" height="5" fill="#00ffff"/>
<rect x="1046" y="370" width="2" height="1" fill="#000"/>
<rect x="1046" y="373" width="1" height="-3" fill="#000"/>
<line x1="922.5" y1="438" x2="922.5" y2="583" stroke="#ffffff" stroke-width="1" />
<line x1="922" y1="438.5" x2="1105" y2="438.5" stroke="#ffffff" stroke-width="1" />
<line x1="922" y1="445.5" x2="1105" y2="445.5" stroke="#ffffff" stroke-width="1" />
<line x1="922" y1="452.5" x2="1105" y2="452.5" stroke="#ffffff" stroke-width="1" />
<line x1="922" y1="460.5" x2="1105" y2="460.5" stroke="#ffffff" stroke-width="1" />
<line x1="922" y1="467.5" x2="1105" y2="467.5" stroke="#ffffff" stroke-width="1" />
<line x1="922" y1="474.5" x2="1105" y2="474.5" stroke="#ffffff" stroke-width="1" />
<line x1="922" y1="481.5" x2="1105" y2="481.5" stroke="#ffffff" stroke-width="1" />
<line x1="922" y1="488.5" x2="1105" y2="488.5" stroke="#ffffff" stroke-width="1" />
<line x1="922" y1="495.5" x2="1105" y2="495.5" stroke="#ffffff" stroke-width="1" />
<line x1="922" y1="502.5" x2="1105" y2="502.5" stroke="#ffffff" stroke-width="1" />
<line x1="922" y1="509.5" x2="1105" y2="509.5" stroke="#ffffff" stroke-width="1" />
<line x1="922" y1="516.5" x2="1105" y2="516.5" stroke="#ffffff" stroke-width="1" />
<line x1="922" y1="524.5" x2="1105" y2="524.5" stroke="#ffffff" stroke-width="1" />
<line x1="922" y1="531.5" x2="1105" y2="531.5" stroke="#ffffff" stroke-width="1" />
<line x1="922" y1="538.5" x2="1105" y2="538.5" stroke="#ffffff" stroke-width="1" />
<line x1="922" y1="545.5" x2="1105" y2="545.5" stroke="#ffffff" stroke-width="1" />
<line x1="922" y1="552.5" x2="1105" y2="552.5" stroke="#ffffff" stroke-width="1" />
<line x1="922" y1="559.5" x2="1105" y2="559.5" stroke="#ffffff" stroke-width="1" />
<line x1="922" y1="566.5" x2="1105" y2="566.5" stroke="#ffffff" stroke-width="1" />
<line x1="922" y1="573.5" x2="1105" y2="573.5" stroke="#ffffff" stroke-width="1" />
<line x1="932.5" y1="438" x2="932.5" y2="583" stroke="#ffffff" stroke-width="1" />
<line x1="966.5" y1="438" x2="966.5" y2="583" stroke="#ffffff" stroke-width="1" />
<line x1="1017.5" y1="438" x2="1017.5" y2="583" stroke="#ffffff" stroke-width="1" />
<line x1="1025.5" y1="438" x2="1025.5" y2="583" stroke="#ffffff" stroke-width="1" />
<line x1="1054.5" y1="438" x2="1054.5" y2="583" stroke="#ffffff" stroke-width="1" />
<line x1="1067.5" y1="438" x2="1067.5" y2="583" stroke="#ffffff" stroke-width="1" />
<line x1="1080.5" y1="438" x2="1080.5" y2="583" stroke="#ffffff" stroke-width="1" />
<rect x="925" y="440" width="5" height="5" fill="#00ffff"/>
<rect x="928" y="441" width="2" height="2" fill="#000"/>
<rect x="976" y="440" width="6" height="5" fill="#00ffff"/>
<rect x="979" y="441" width="2" height="2" fill="#000"/>
<rect x="983" y="440" width="5" height="5" fill="#00ffff"/>
<rect x="985" y="442" width="2" height="2" fill="#000"/>
<rect x="984" y="440" width="1" height="5" fill="#000"/>
<rect x="989" y="440" width="5" height="5" fill="#00ffff"/>
<rect x="992" y="443" width="1" height="1" fill="#000"/>
<rect x="990" y="440" width="1" height="1" fill="#000"/>
<rect x="996" y="440" width="1" height="5" fill="#00ffff"/>
<rect x="1019" y="440" width="4" height="5" fill="#00ffff"/>
<rect x="1020" y="443" width="1" height="1" fill="#000"/>
<rect x="1022" y="440" width="1" height="5" fill="#000"/>
<rect x="1033" y="440" width="4" height="5" fill="#00ffff"/>
<rect x="1035" y="441" width="1" height="1" fill="#000"/>
<rect x="1038" y="440" width="4" height="5" fill="#00ffff"/>
<rect x="1039" y="442" width="2" height="2" fill="#000"/>
<rect x="1038" y="440" width="1" height="5" fill="#000"/>
<rect x="1043" y="440" width="2" height="5" fill="#00ffff"/>
<rect x="1083" y="440" width="5" height="5" fill="#00ffff"/>
<rect x="1084" y="441" width="2" height="1" fill="#000"/>
<rect x="1088" y="440" width="5" height="5" fill="#00ffff"/>
<rect x="1090" y="442" width="2" height="1" fill="#000"/>
<rect x="1089" y="440" width="1" height="1" fill="#000"/>
<rect x="1094" y="440" width="5" height="5" fill="#00ffff"/>
<rect x="1095" y="442" width="1" height="1" fill="#000"/>
<rect x="1097" y="444" width="1" height="-3" fill="#000"/>
<rect x="1100" y="440" width="1" height="5" fill="#00ffff"/>
<rect x="925" y="447" width="4" height="5" fill="#00ffff"/>
<rect x="927" y="448" width="2" height="1" fill="#000"/>
<rect x="928" y="451" width="1" height="1" fill="#000"/>
<rect x="936" y="447" width="5" height="5" fill="#00ffff"/>
<rect x="937" y="448" width="1" height="2" fill="#000"/>
<rect x="942" y="447" width="5" height="5" fill="#00ffff"/>
<rect x="943" y="448" width="2" height="2" fill="#000"/>
<rect x="947" y="447" width="5" height="5" fill="#00ffff"/>
<rect x="949" y="450" width="1" height="1" fill="#000"/>
<rect x="950" y="451" width="1" height="-3" fill="#000"/>
<rect x="954" y="447" width="6" height="5" fill="#00ffff"/>
<rect x="955" y="448" width="1" height="2" fill="#000"/>
<rect x="961" y="447" width="1" height="5" fill="#00ffff"/>
<rect x="969" y="447" width="4" height="5" fill="#00ffff"/>
<rect x="970" y="448" width="1" height="2" fill="#000"/>
<rect x="973" y="447" width="5" height="5" fill="#00ffff"/>
<rect x="974" y="449" width="1" height="1" fill="#000"/>
<rect x="978" y="447" width="3" height="5" fill="#00ffff"/>
<rect x="979" y="449" width="2" height="2" fill="#000"/>
<rect x="980" y="451" width="1" height="-3" fill="#000"/>
<rect x="1035" y="447" width="6" height="5" fill="#00ffff"/>
<rect x="1039" y="448" width="1" height="1" fill="#000"/>
<rect x="1039" y="447" width="1" height="5" fill="#000"/>
<rect x="1042" y="447" width="1" height="5" fill="#00ffff"/>
<rect x="925" y="454" width="5" height="5" fill="#00ffff"/>
<rect x="928" y="456" width="2" height="2" fill="#000"/>
<rect x="929" y="458" width="1" height="-3" fill="#000"/>
<rect x="969" y="454" width="4" height="5" fill="#00ffff"/>
<rect x="970" y="457" width="1" height="1" fill="#000"/>
<rect x="969" y="454" width="1" height="1" fill="#000"/>
<rect x="974" y="454" width="5" height="5" fill="#00ffff"/>
<rect x="977" y="456" width="1" height="2" fill="#000"/>
<rect x="980" y="454" width="3" height="5" fill="#00ffff"/>
<rect x="981" y="456" width="2" height="1" fill="#000"/>
<rect x="980" y="454" width="1" height="5" fill="#000"/>
<rect x="1019" y="454" width="4" height="5" fill="#00ffff"/>
<rect x="1021" y="455" width="2" height="1" fill="#000"/>
<rect x="1020" y="454" width="1" height="1" fill="#000"/>
<rect x="1035" y="454" width="5" height="5" fill="#00ffff"/>
<rect x="1037" y="456" width="1" height="2" fill="#000"/>
<rect x="1036" y="458" width="1" height="1" fill="#000"/>
<rect x="1041" y="454" width="2" height="5" fill="#00ffff"/>
<rect x="1083" y="454" width="5" height="5" fill="#00ffff"/>
<rect x="1086" y="457" width="1" height="1" fill="#000"/>
<rect x="1087" y="454" width="1" height="1" fill="#000"/>
<rect x="1090" y="454" width="5" height="5" fill="#00ffff"/>
<rect x="1093" y="456" width="2" height="2" fill="#000"/>
<rect x="1094" y="458" width="1" height="1" fill="#000"/>
<rect x="1096" y="454" width="5" height="5" fill="#00ffff"/>
<rect x="1097" y="456" width="2" height="2" fill="#000"/>
<rect x="925" y="462" width="5" height="5" fill="#00ffff"/>
<rect x="928" y="464" width="2" height="2" fill="#000"/>
<rect x="927" y="462" width="1" height="1" fill="#000"/>
<rect x="936" y="462" width="5" height="5" fill="#00ffff"/>
<rect x="939" y="464" width="1" height="1" fill="#000"/>
<rect x="939" y="462" width="1" height="5" fill="#000"/>
<rect x="943" y="462" width="5" height="5" fill="#00ffff"/>
<rect x="944" y="464" width="2" height="2" fill="#000"/>
<rect x="944" y="466" width="1" height="-3" fill="#000"/>
<rect x="949" y="462" width="5" height="5" fill="#00ffff"/>
<rect x="951" y="465" width="1" height="1" fill="#000"/>
<rect x="954" y="462" width="6" height="5" fill="#00ffff"/>
<rect x="956" y="463" width="1" height="2" fill="#000"/>
<rect x="961" y="462" width="1" height="5" fill="#00ffff"/>
<rect x="969" y="462" width="5" height="5" fill="#00ffff"/>
<rect x="970" y="464" width="2" height="1" fill="#000"/>
<rect x="971" y="462" width="1" height="1" fill="#000"/>
<rect x="975" y="462" width="6" height="5" fill="#00ffff"/>
<rect x="978" y="464" width="2" height="1" fill="#000"/>
<rect x="975" y="466" width="1" height="-3" fill="#000"/>
<rect x="982" y="462" width="5" height="5" fill="#00ffff"/>
<rect x="983" y="463" width="1" height="1" fill="#000"/>
<rect x="986" y="462" width="1" height="5" fill="#000"/>
<rect x="988" y="462" width="5" height="5" fill="#00ffff"/>
<rect x="989" y="464" width="2" height="1" fill="#000"/>
<rect x="992" y="466" width="1" height="-3" fill="#000"/>
<rect x="995" y="462" width="2" height="5" fill="#00ffff"/>
<rect x="1034" y="462" width="6" height="5" fill="#00ffff"/>
<rect x="1038" y="463" width="1" height="2" fill="#000"/>
<rect x="1037" y="462" width="1" height="5" fill="#000"/>
<rect x="1041" y="462" width="3" height="5" fill="#00ffff"/>
<rect x="1042" y="465" width="2" height="1" fill="#000"/>
<rect x="1043" y="466" width="1" height="1" fill="#000"/>
<rect x="1083" y="462" width="4" height="5" fill="#00ffff"/>
<rect x="1085" y="465" width="1" height="1" fill="#000"/>
<rect x="1087" y="462" width="6" height="5" fill="#00ffff"/>
<rect x="1088" y="464" width="1" height="2" fill="#000"/>
<rect x="1088" y="462" width="1" height="1" fill="#000"/>
<rect x="1094" y="462" width="4" height="5" fill="#00ffff"/>
<rect x="1095" y="464" width="2" height="2" fill="#000"/>
<rect x="1096" y="466" width="1" height="-3" fill="#000"/>
<rect x="1099" y="462" width="2" height="5" fill="#00ffff"/>
<rect x="925" y="469" width="5" height="5" fill="#00ffff"/>
<rect x="927" y="471" width="2" height="2" fill="#000"/>
<rect x="925" y="473" width="1" height="-3" fill="#000"/>
<rect x="936" y="469" width="5" height="5" fill="#00ffff"/>
<rect x="939" y="471" width="1" height="1" fill="#000"/>
<rect x="938" y="469" width="1" height="5" fill="#000"/>
<rect x="942" y="469" width="5" height="5" fill="#00ffff"/>
<rect x="943" y="471" width="2" height="2" fill="#000"/>
<rect x="943" y="473" width="1" height="-3" fill="#000"/>
<rect x="948" y="469" width="4" height="5" fill="#00ffff"/>
<rect x="949" y="471" width="1" height="2" fill="#000"/>
<rect x="951" y="469" width="1" height="1" fill="#000"/>
<rect x="953" y="469" width="5" height="5" fill="#00ffff"/>
<rect x="955" y="472" width="1" height="1" fill="#000"/>
<rect x="959" y="469" width="3" height="5" fill="#00ffff"/>
<rect x="960" y="470" width="1" height="2" fill="#000"/>
<rect x="960" y="469" width="1" height="1" fill="#000"/>
<rect x="969" y="469" width="5" height="5" fill="#00ffff"/>
<rect x="971" y="471" width="1" height="2" fill="#000"/>
<rect x="975" y="469" width="4" height="5" fill="#00ffff"/>
<rect x="976" y="471" width="1" height="1" fill="#000"/>
<rect x="975" y="469" width="1" height="1" fill="#000"/>
<rect x="979" y="469" width="4" height="5" fill="#00ffff"/>
<rect x="981" y="470" width="1" height="1" fill="#000"/>
<rect x="981" y="469" width="1" height="1" fill="#000"/>
<rect x="984" y="469" width="5" height="5" fill="#00ffff"/>
<rect x="985" y="472" width="1" height="1" fill="#000"/>
<rect x="986" y="473" width="1" height="1" fill="#000"/>
<rect x="1034" y="469" width="5" height="5" fill="#00ffff"/>
<rect x="1035" y="472" width="2" height="1" fill="#000"/>
<rect x="1034" y="473" width="1" height="-3" fill="#000"/>
<rect x="1039" y="469" width="5" height="5" fill="#00ffff"/>
<rect x="1041" y="470" width="2" height="1" fill="#000"/>
<rect x="1043" y="469" width="1" height="1" fill="#000"/>
<rect x="1083" y="469" width="6" height="5" fill="#00ffff"/>
<rect x="1084" y="471" width="2" height="1" fill="#000"/>
<rect x="1085" y="473" width="1" height="-3" fill="#000"/>
<rect x="1091" y="469" width="5" height="5" fill="#00ffff"/>
<rect x="1092" y="471" width="2" height="2" fill="#000"/>
<rect x="1092" y="473" width="1" height="-3" fill="#000"/>
<rect x="1096" y="469" width="5" height="5" fill="#00ffff"/>
<rect x="1097" y="471" width="1" height="1" fill="#000"/>
<rect x="1098" y="469" width="1" height="5" fill="#000"/>
<rect x="925" y="476" width="5" height="5" fill="#00ffff"/>
<rect x="926" y="478" width="1" height="2" fill="#000"/>
<rect x="936" y="476" width="5" height="5" fill="#00ffff"/>
<rect x="937" y="479" width="1" height="1" fill="#000"/>
<rect x="936" y="480" width="1" height="1" fill="#000"/>
<rect x="941" y="476" width="6" height="5" fill="#00ffff"/>
<rect x="942" y="478" width="1" height="1" fill="#000"/>
<rect x="942" y="480" width="1" height="-3" fill="#000"/>
<rect x="947" y="476" width="6" height="5" fill="#00ffff"/>
<rect x="948" y="479" width="1" height="1" fill="#000"/>
<rect x="951" y="476" width="1" height="5" fill="#000"/>
<rect x="955" y="476" width="6" height="5" fill="#00ffff"/>
<rect x="956" y="478" width="1" height="1" fill="#000"/>
<rect x="969" y="476" width="4" height="5" fill="#00ffff"/>
<rect x="970" y="477" width="1" height="2" fill="#000"/>
<rect x="974" y="476" width="4" height="5" fill="#00ffff"/>
<rect x="975" y="479" width="2" height="1" fill="#000"/>
<rect x="974" y="476" width="1" height="1" fill="#000"/>
<rect x="1035" y="476" width="5" height="5" fill="#00ffff"/>
<rect x="1037" y="477" width="2" height="2" fill="#000"/>
<rect x="1037" y="476" width="1" height="5" fill="#000"/>
<rect x="1040" y="476" width="3" height="5" fill="#00ffff"/>
<rect x="1041" y="477" width="1" height="1" fill="#000"/>
<rect x="1042" y="476" width="1" height="5" fill="#000"/>
<rect x="1083" y="476" width="4" height="5" fill="#00ffff"/>
<rect x="1084" y="477" width="2" height="2" fill="#000"/>
<rect x="1087" y="476" width="6" height="5" fill="#00ffff"/>
<rect x="1091" y="479" width="2" height="1" fill="#000"/>
<rect x="1095" y="476" width="6" height="5" fill="#00ffff"/>
<rect x="1099" y="477" width="1" height="2" fill="#000"/>
<rect x="1098" y="476" width="1" height="1" fill="#000"/>
<rect x="925" y="483" width="5" height="5" fill="#00ffff"/>
<rect x="927" y="484" width="2" height="1" fill="#000"/>
<rect x="936" y="483" width="5" height="5" fill="#00ffff"/>
<rect x="937" y="485" width="1" height="2" fill="#000"/>
<rect x="939" y="483" width="1" height="5" fill="#000"/>
<rect x="942" y="483" width="6" height="5" fill="#00ffff"/>
<rect x="945" y="485" width="1" height="1" fill="#000"/>
<rect x="947" y="483" width="1" height="5" fill="#000"/>
<rect x="949" y="483" width="5" height="5" fill="#00ffff"/>
<rect x="952" y="484" width="1" height="1" fill="#000"/>
<rect x="955" y="483" width="5" height="5" fill="#00ffff"/>
<rect x="958" y="484" width="2" height="2" fill="#000"/>
<rect x="960" y="483" width="2" height="5" fill="#00ffff"/>
<rect x="969" y="483" width="5" height="5" fill="#00ffff"/>
<rect x="971" y="484" width="2" height="2" fill="#000"/>
<rect x="974" y="483" width="5" height="5" fill="#00ffff"/>
<rect x="977" y="485" width="2" height="2" fill="#000"/>
<rect x="981" y="483" width="4" height="5" fill="#00ffff"/>
<rect x="983" y="484" width="2" height="1" fill="#000"/>
<rect x="983" y="487" width="1" height="-3" fill="#000"/>
<rect x="987" y="483" width="5" height="5" fill="#00ffff"/>
<rect x="989" y="484" width="1" height="1" fill="#000"/>
<rect x="987" y="487" width="1" height="1" fill="#000"/>
<rect x="1034" y="483" width="6" height="5" fill="#00ffff"/>
<rect x="1035" y="484" width="2" height="1" fill="#000"/>
<rect x="1039" y="483" width="1" height="5" fill="#000"/>
<rect x="1041" y="483" width="3" height="5" fill="#00ffff"/>
<rect x="1042" y="484" width="1" height="1" fill="#000"/>
<rect x="1043" y="483" width="1" height="1" fill="#000"/>
<rect x="1083" y="483" width="5" height="5" fill="#00ffff"/>
<rect x="1084" y="485" width="2" height="1" fill="#000"/>
<rect x="1087" y="483" width="1" height="5" fill="#000"/>
<rect x="1089" y="483" width="4" height="5" fill="#00ffff"/>
<rect x="1091" y="484" width="1" height="2" fill="#000"/>
<rect x="1089" y="483" width="1" height="5" fill="#000"/>
<rect x="1093" y="483" width="5" height="5" fill="#00ffff"/>
<rect x="1095" y="485" width="2" height="1" fill="#000"/>
<rect x="1095" y="487" width="1" height="-3" fill="#000"/>
<rect x="1099" y="483" width="2" height="5" fill="#00ffff"/>
<rect x="925" y="490" width="4" height="5" fill="#00ffff"/>
<rect x="927" y="492" width="1" height="2" fill="#000"/>
<rect x="927" y="490" width="1" height="5" fill="#000"/>
<rect x="929" y="490" width="1" height="5" fill="#00ffff"/>
<rect x="936" y="490" width="5" height="5" fill="#00ffff"/>
<rect x="939" y="493" width="1" height="1" fill="#000"/>
<rect x="937" y="494" width="1" height="1" fill="#000"/>
<rect x="943" y="490" width="5" height="5" fill="#00ffff"/>
<rect x="944" y="492" width="1" height="1" fill="#000"/>
<rect x="947" y="494" width="1" height="-3" fill="#000"/>
<rect x="949" y="490" width="6" height="5" fill="#00ffff"/>
<rect x="953" y="492" width="2" height="1" fill="#000"/>
<rect x="953" y="494" width="1" height="1" fill="#000"/>
<rect x="956" y="490" width="6" height="5" fill="#00ffff"/>
<rect x="959" y="491" width="1" height="2" fill="#000"/>
<rect x="961" y="490" width="1" height="1" fill="#000"/>
<rect x="969" y="490" width="5" height="5" fill="#00ffff"/>
<rect x="971" y="492" width="2" height="2" fill="#000"/>
<rect x="975" y="490" width="5" height="5" fill="#00ffff"/>
<rect x="976" y="492" width="2" height="1" fill="#000"/>
<rect x="982" y="490" width="5" height="5" fill="#00ffff"/>
<rect x="985" y="492" width="2" height="1" fill="#000"/>
<rect x="984" y="490" width="1" height="5" fill="#000"/>
<rect x="988" y="490" width="1" height="5" fill="#00ffff"/>
<rect x="1034" y="490" width="4" height="5" fill="#00ffff"/>
<rect x="1036" y="491" width="1" height="1" fill="#000"/>
<rect x="1035" y="490" width="1" height="1" fill="#000"/>
<rect x="1038" y="490" width="6" height="5" fill="#00ffff"/>
<rect x="1039" y="492" width="2" height="1" fill="#000"/>
<rect x="1038" y="494" width="1" height="-3" fill="#000"/>
<rect x="1083" y="490" width="4" height="5" fill="#00ffff"/>
<rect x="1085" y="492" width="1" height="1" fill="#000"/>
<rect x="1087" y="490" width="5" height="5" fill="#00ffff"/>
<rect x="1088" y="491" width="2" height="1" fill="#000"/>
<rect x="1088" y="494" width="1" height="1" fill="#000"/>
<rect x="1093" y="490" width="5" height="5" fill="#00ffff"/>
<rect x="1094" y="492" width="2" height="2" fill="#000"/>
<rect x="1098" y="490" width="3" height="5" fill="#00ffff"/>
<rect x="1099" y="491" width="1" height="2" fill="#000"/>
<rect x="925" y="497" width="5" height="5" fill="#00ffff"/>
<rect x="926" y="499" width="1" height="2" fill="#000"/>
<rect x="936" y="497" width="6" height="5" fill="#00ffff"/>
<rect x="938" y="498" width="2" height="1" fill="#000"/>
<rect x="939" y="497" width="1" height="1" fill="#000"/>
<rect x="942" y="497" width="6" height="5" fill="#00ffff"/>
<rect x="943" y="498" width="1" height="2" fill="#000"/>
<rect x="950" y="497" width="6" height="5" fill="#00ffff"/>
<rect x="953" y="499" width="2" height="2" fill="#000"/>
<rect x="954" y="497" width="1" height="5" fill="#000"/>
<rect x="957" y="497" width="5" height="5" fill="#00ffff"/>
<rect x="959" y="498" width="1" height="1" fill="#000"/>
<rect x="969" y="497" width="6" height="5" fill="#00ffff"/>
<rect x="972" y="500" width="2" height="1" fill="#000"/>
<rect x="969" y="501" width="1" height="1" fill="#000"/>
<rect x="975" y="497" width="4" height="5" fill="#00ffff"/>
<rect x="977" y="499" width="1" height="1" fill="#000"/>
<rect x="975" y="501" width="1" height="1" fill="#000"/>
<rect x="981" y="497" width="2" height="5" fill="#00ffff"/>
<rect x="1032" y="497" width="6" height="5" fill="#00ffff"/>
<rect x="1035" y="500" width="2" height="1" fill="#000"/>
<rect x="1039" y="497" width="4" height="5" fill="#00ffff"/>
<rect x="1040" y="499" width="2" height="2" fill="#000"/>
<rect x="1039" y="501" width="1" height="1" fill="#000"/>
<rect x="1045" y="497" width="1" height="5" fill="#00ffff"/>
<rect x="1083" y="497" width="6" height="5" fill="#00ffff"/>
<rect x="1084" y="499" width="1" height="2" fill="#000"/>
<rect x="1089" y="497" width="5" height="5" fill="#00ffff"/>
<rect x="1092" y="500" width="2" height="1" fill="#000"/>
<rect x="1095" y="497" width="5" height="5" fill="#00ffff"/>
<rect x="1098" y="498" width="1" height="1" fill="#000"/>
<rect x="925" y="504" width="5" height="5" fill="#00ffff"/>
<rect x="927" y="507" width="2" height="1" fill="#000"/>
<rect x="936" y="504" width="4" height="5" fill="#00ffff"/>
<rect x="938" y="505" width="2" height="2" fill="#000"/>
<rect x="938" y="508" width="1" height="-3" fill="#000"/>
<rect x="942" y="504" width="5" height="5" fill="#00ffff"/>
<rect x="943" y="505" width="1" height="1" fill="#000"/>
<rect x="946" y="504" width="1" height="5" fill="#000"/>
<rect x="948" y="504" width="4" height="5" fill="#00ffff"/>
<rect x="949" y="505" width="1" height="2" fill="#000"/>
<rect x="952" y="504" width="5" height="5" fill="#00ffff"/>
<rect x="953" y="505" width="2" height="1" fill="#000"/>
<rect x="952" y="504" width="1" height="5" fill="#000"/>
<rect x="958" y="504" width="4" height="5" fill="#00ffff"/>
<rect x="960" y="505" width="2" height="1" fill="#000"/>
<rect x="969" y="504" width="5" height="5" fill="#00ffff"/>
<rect x="972" y="506" width="2" height="2" fill="#000"/>
<rect x="975" y="504" width="5" height="5" fill="#00ffff"/>
<rect x="977" y="505" width="1" height="1" fill="#000"/>
<rect x="981" y="504" width="5" height="5" fill="#00ffff"/>
<rect x="982" y="506" width="1" height="2" fill="#000"/>
<rect x="986" y="504" width="5" height="5" fill="#00ffff"/>
<rect x="987" y="506" width="1" height="2" fill="#000"/>
<rect x="986" y="504" width="1" height="1" fill="#000"/>
<rect x="991" y="504" width="4" height="5" fill="#00ffff"/>
<rect x="993" y="506" width="2" height="1" fill="#000"/>
<rect x="994" y="508" width="1" height="-3" fill="#000"/>
<rect x="996" y="504" width="1" height="5" fill="#00ffff"/>
<rect x="1019" y="504" width="4" height="5" fill="#00ffff"/>
<rect x="1020" y="505" width="2" height="2" fill="#000"/>
<rect x="1021" y="504" width="1" height="1" fill="#000"/>
<rect x="1035" y="504" width="5" height="5" fill="#00ffff"/>
<rect x="1036" y="506" width="2" height="2" fill="#000"/>
<rect x="1041" y="504" width="2" height="5" fill="#00ffff"/>
<rect x="1083" y="504" width="6" height="5" fill="#00ffff"/>
<rect x="1086" y="506" width="2" height="2" fill="#000"/>
<rect x="1087" y="504" width="1" height="5" fill="#000"/>
<rect x="1090" y="504" width="4" height="5" fill="#00ffff"/>
<rect x="1092" y="506" width="1" height="2" fill="#000"/>
<rect x="1090" y="508" width="1" height="-3" fill="#000"/>
<rect x="1095" y="504" width="6" height="5" fill="#00ffff"/>
<rect x="1098" y="506" width="2" height="2" fill="#000"/>
<rect x="1099" y="508" width="1" height="-3" fill="#000"/>
<rect x="925" y="511" width="5" height="5" fill="#00ffff"/>
<rect x="926" y="512" width="2" height="2" fill="#000"/>
<rect x="936" y="511" width="5" height="5" fill="#00ffff"/>
<rect x="937" y="512" width="2" height="2" fill="#000"/>
<rect x="942" y="511" width="4" height="5" fill="#00ffff"/>
<rect x="943" y="513" width="1" height="2" fill="#000"/>
<rect x="945" y="515" width="1" height="1" fill="#000"/>
<rect x="946" y="511" width="4" height="5" fill="#00ffff"/>
<rect x="948" y="514" width="2" height="1" fill="#000"/>
<rect x="950" y="511" width="5" height="5" fill="#00ffff"/>
<rect x="953" y="512" width="2" height="1" fill="#000"/>
<rect x="953" y="515" width="1" height="1" fill="#000"/>
<rect x="955" y="511" width="4" height="5" fill="#00ffff"/>
<rect x="956" y="512" width="1" height="1" fill="#000"/>
<rect x="955" y="511" width="1" height="1" fill="#000"/>
<rect x="959" y="511" width="3" height="5" fill="#00ffff"/>
<rect x="960" y="512" width="1" height="1" fill="#000"/>
<rect x="959" y="511" width="1" height="5" fill="#000"/>
<rect x="969" y="511" width="5" height="5" fill="#00ffff"/>
<rect x="970" y="513" width="1" height="2" fill="#000"/>
<rect x="969" y="515" width="1" height="1" fill="#000"/>
<rect x="975" y="511" width="6" height="5" fill="#00ffff"/>
<rect x="978" y="513" width="1" height="2" fill="#000"/>
<rect x="978" y="511" width="1" height="1" fill="#000"/>
<rect x="981" y="511" width="5" height="5" fill="#00ffff"/>
<rect x="982" y="512" width="1" height="2" fill="#000"/>
<rect x="983" y="515" width="1" height="-3" fill="#000"/>
<rect x="987" y="511" width="4" height="5" fill="#00ffff"/>
<rect x="989" y="512" width="2" height="1" fill="#000"/>
<rect x="1019" y="511" width="4" height="5" fill="#00ffff"/>
<rect x="1020" y="513" width="1" height="1" fill="#000"/>
<rect x="1087" y="511" width="6" height="5" fill="#00ffff"/>
<rect x="1091" y="512" width="1" height="1" fill="#000"/>
<rect x="1092" y="515" width="1" height="1" fill="#000"/>
<rect x="1093" y="511" width="4" height="5" fill="#00ffff"/>
<rect x="1094" y="512" width="2" height="2" fill="#000"/>
<rect x="925" y="518" width="5" height="5" fill="#00ffff"/>
<rect x="926" y="520" width="1" height="2" fill="#000"/>
<rect x="936" y="518" width="5" height="5" fill="#00ffff"/>
<rect x="938" y="521" width="1" height="1" fill="#000"/>
<rect x="941" y="518" width="5" height="5" fill="#00ffff"/>
<rect x="943" y="519" width="1" height="2" fill="#000"/>
<rect x="943" y="518" width="1" height="5" fill="#000"/>
<rect x="948" y="518" width="5" height="5" fill="#00ffff"/>
<rect x="950" y="520" width="2" height="2" fill="#000"/>
<rect x="953" y="518" width="5" height="5" fill="#00ffff"/>
<rect x="956" y="520" width="1" height="2" fill="#000"/>
<rect x="954" y="522" width="1" height="-3" fill="#000"/>
<rect x="958" y="518" width="4" height="5" fill="#00ffff"/>
<rect x="959" y="520" width="1" height="2" fill="#000"/>
<rect x="960" y="518" width="1" height="1" fill="#000"/>
<rect x="969" y="518" width="4" height="5" fill="#00ffff"/>
<rect x="971" y="521" width="1" height="1" fill="#000"/>
<rect x="969" y="522" width="1" height="1" fill="#000"/>
<rect x="974" y="518" width="5" height="5" fill="#00ffff"/>
<rect x="977" y="520" width="2" height="1" fill="#000"/>
<rect x="980" y="518" width="5" height="5" fill="#00ffff"/>
<rect x="982" y="519" width="2" height="1" fill="#000"/>
<rect x="986" y="518" width="5" height="5" fill="#00ffff"/>
<rect x="987" y="519" width="1" height="1" fill="#000"/>
<rect x="989" y="522" width="1" height="1" fill="#000"/>
<rect x="992" y="518" width="4" height="5" fill="#00ffff"/>
<rect x="993" y="520" width="1" height="2" fill="#000"/>
<rect x="994" y="518" width="1" height="1" fill="#000"/>
<rect x="997" y="518" width="5" height="5" fill="#00ffff"/>
<rect x="998" y="521" width="1" height="1" fill="#000"/>
<rect x="998" y="522" width="1" height="-3" fill="#000"/>
<rect x="1003" y="518" width="4" height="5" fill="#00ffff"/>
<rect x="1005" y="519" width="2" height="2" fill="#000"/>
<rect x="1006" y="518" width="1" height="5" fill="#000"/>
<rect x="1019" y="518" width="4" height="5" fill="#00ffff"/>
<rect x="1020" y="521" width="1" height="1" fill="#000"/>
<rect x="1033" y="518" width="5" height="5" fill="#00ffff"/>
<rect x="1034" y="519" width="1" height="2" fill="#000"/>
<rect x="1037" y="522" width="1" height="1" fill="#000"/>
<rect x="1039" y="518" width="6" height="5" fill="#00ffff"/>
<rect x="1040" y="520" width="2" height="2" fill="#000"/>
<rect x="1041" y="522" width="1" height="-3" fill="#000"/>
<rect x="925" y="526" width="5" height="5" fill="#00ffff"/>
<rect x="926" y="528" width="1" height="2" fill="#000"/>
<rect x="937" y="526" width="4" height="5" fill="#00ffff"/>
<rect x="938" y="527" width="2" height="1" fill="#000"/>
<rect x="939" y="530" width="1" height="-3" fill="#000"/>
<rect x="941" y="526" width="5" height="5" fill="#00ffff"/>
<rect x="943" y="528" width="1" height="1" fill="#000"/>
<rect x="947" y="526" width="5" height="5" fill="#00ffff"/>
<rect x="950" y="527" width="2" height="2" fill="#000"/>
<rect x="947" y="530" width="1" height="1" fill="#000"/>
<rect x="953" y="526" width="4" height="5" fill="#00ffff"/>
<rect x="954" y="527" width="2" height="2" fill="#000"/>
<rect x="958" y="526" width="3" height="5" fill="#00ffff"/>
<rect x="959" y="529" width="2" height="1" fill="#000"/>
<rect x="958" y="526" width="1" height="1" fill="#000"/>
<rect x="969" y="526" width="5" height="5" fill="#00ffff"/>
<rect x="972" y="529" width="1" height="1" fill="#000"/>
<rect x="969" y="530" width="1" height="-3" fill="#000"/>
<rect x="975" y="526" width="5" height="5" fill="#00ffff"/>
<rect x="977" y="527" width="1" height="1" fill="#000"/>
<rect x="980" y="526" width="5" height="5" fill="#00ffff"/>
<rect x="982" y="527" width="2" height="1" fill="#000"/>
<rect x="986" y="526" width="4" height="5" fill="#00ffff"/>
<rect x="987" y="527" width="1" height="2" fill="#000"/>
<rect x="986" y="530" width="1" height="-3" fill="#000"/>
<rect x="991" y="526" width="2" height="5" fill="#00ffff"/>
<rect x="1019" y="526" width="4" height="5" fill="#00ffff"/>
<rect x="1020" y="528" width="2" height="2" fill="#000"/>
<rect x="1020" y="530" width="1" height="1" fill="#000"/>
<rect x="1033" y="526" width="6" height="5" fill="#00ffff"/>
<rect x="1036" y="528" width="1" height="1" fill="#000"/>
<rect x="1033" y="530" width="1" height="1" fill="#000"/>
<rect x="1039" y="526" width="5" height="5" fill="#00ffff"/>
<rect x="1041" y="527" width="1" height="1" fill="#000"/>
<rect x="1039" y="530" width="1" height="1" fill="#000"/>
<rect x="925" y="533" width="4" height="5" fill="#00ffff"/>
<rect x="926" y="535" width="2" height="1" fill="#000"/>
<rect x="929" y="533" width="1" height="5" fill="#00ffff"/>
<rect x="937" y="533" width="5" height="5" fill="#00ffff"/>
<rect x="939" y="535" width="2" height="1" fill="#000"/>
<rect x="943" y="533" width="6" height="5" fill="#00ffff"/>
<rect x="944" y="535" width="1" height="2" fill="#000"/>
<rect x="947" y="533" width="1" height="5" fill="#000"/>
<rect x="949" y="533" width="5" height="5" fill="#00ffff"/>
<rect x="952" y="536" width="1" height="1" fill="#000"/>
<rect x="950" y="537" width="1" height="-3" fill="#000"/>
<rect x="954" y="533" width="5" height="5" fill="#00ffff"/>
<rect x="957" y="534" width="2" height="2" fill="#000"/>
<rect x="960" y="533" width="1" height="5" fill="#00ffff"/>
<rect x="969" y="533" width="5" height="5" fill="#00ffff"/>
<rect x="971" y="535" width="1" height="1" fill="#000"/>
<rect x="970" y="533" width="1" height="5" fill="#000"/>
<rect x="976" y="533" width="5" height="5" fill="#00ffff"/>
<rect x="979" y="535" width="2" height="2" fill="#000"/>
<rect x="977" y="537" width="1" height="1" fill="#000"/>
<rect x="981" y="533" width="4" height="5" fill="#00ffff"/>
<rect x="982" y="535" width="1" height="1" fill="#000"/>
<rect x="1019" y="533" width="4" height="5" fill="#00ffff"/>
<rect x="1021" y="535" width="2" height="2" fill="#000"/>
<rect x="1021" y="533" width="1" height="5" fill="#000"/>
<rect x="1034" y="533" width="5" height="5" fill="#00ffff"/>
<rect x="1037" y="534" width="2" height="2" fill="#000"/>
<rect x="1040" y="533" width="4" height="5" fill="#00ffff"/>
<rect x="1042" y="534" width="1" height="2" fill="#000"/>
<rect x="1042" y="537" width="1" height="-3" fill="#000"/>
<rect x="925" y="540" width="5" height="5" fill="#00ffff"/>
<rect x="927" y="541" width="1" height="1" fill="#000"/>
<rect x="936" y="540" width="6" height="5" fill="#00ffff"/>
<rect x="938" y="542" width="2" height="2" fill="#000"/>
<rect x="943" y="540" width="4" height="5" fill="#00ffff"/>
<rect x="944" y="543" width="2" height="1" fill="#000"/>
<rect x="948" y="540" width="6" height="5" fill="#00ffff"/>
<rect x="952" y="542" width="1" height="2" fill="#000"/>
<rect x="955" y="540" width="5" height="5" fill="#00ffff"/>
<rect x="956" y="542" width="2" height="2" fill="#000"/>
<rect x="961" y="540" width="1" height="5" fill="#00ffff"/>
<rect x="969" y="540" width="4" height="5" fill="#00ffff"/>
<rect x="970" y="543" width="2" height="1" fill="#000"/>
<rect x="970" y="544" width="1" height="1" fill="#000"/>
<rect x="974" y="540" width="5" height="5" fill="#00ffff"/>
<rect x="977" y="541" width="1" height="2" fill="#000"/>
<rect x="974" y="540" width="1" height="5" fill="#000"/>
<rect x="981" y="540" width="6" height="5" fill="#00ffff"/>
<rect x="985" y="541" width="1" height="2" fill="#000"/>
<rect x="981" y="540" width="1" height="5" fill="#000"/>
<rect x="988" y="540" width="4" height="5" fill="#00ffff"/>
<rect x="989" y="542" width="2" height="1" fill="#000"/>
<rect x="993" y="540" width="5" height="5" fill="#00ffff"/>
<rect x="995" y="543" width="2" height="1" fill="#000"/>
<rect x="994" y="544" width="1" height="-3" fill="#000"/>
<rect x="998" y="540" width="3" height="5" fill="#00ffff"/>
<rect x="999" y="541" width="2" height="2" fill="#000"/>
<rect x="999" y="544" width="1" height="-3" fill="#000"/>
<rect x="1019" y="540" width="4" height="5" fill="#00ffff"/>
<rect x="1021" y="543" width="1" height="1" fill="#000"/>
<rect x="1019" y="540" width="1" height="5" fill="#000"/>
<rect x="1034" y="540" width="6" height="5" fill="#00ffff"/>
<rect x="1035" y="541" width="2" height="1" fill="#000"/>
<rect x="1041" y="540" width="3" height="5" fill="#00ffff"/>
<rect x="1042" y="542" width="2" height="1" fill="#000"/>
<rect x="1041" y="544" width="1" height="1" fill="#000"/>
<rect x="1083" y="540" width="5" height="5" fill="#00ffff"/>
<rect x="1086" y="543" width="2" height="1" fill="#000"/>
<rect x="1089" y="540" width="6" height="5" fill="#00ffff"/>
<rect x="1092" y="542" width="2" height="2" fill="#000"/>
<rect x="1089" y="544" width="1" height="-3" fill="#000"/>
<rect x="1096" y="540" width="5" height="5" fill="#00ffff"/>
<rect x="1099" y="541" width="2" height="2" fill="#000"/>
<rect x="925" y="547" width="4" height="5" fill="#00ffff"/>
<rect x="926" y="550" width="1" height="1" fill="#000"/>
<rect x="929" y="547" width="1" height="5" fill="#00ffff"/>
<rect x="969" y="547" width="5" height="5" fill="#00ffff"/>
<rect x="970" y="549" width="1" height="1" fill="#000"/>
<rect x="973" y="551" width="1" height="1" fill="#000"/>
<rect x="980" y="547" width="5" height="5" fill="#00ffff"/>
<rect x="983" y="548" width="2" height="2" fill="#000"/>
<rect x="981" y="551" width="1" height="-3" fill="#000"/>
<rect x="993" y="547" width="4" height="5" fill="#00ffff"/>
<rect x="994" y="549" width="2" height="1" fill="#000"/>
<rect x="1019" y="547" width="4" height="5" fill="#00ffff"/>
<rect x="1020" y="548" width="1" height="2" fill="#000"/>
<rect x="1019" y="551" width="1" height="1" fill="#000"/>
<rect x="1035" y="547" width="5" height="5" fill="#00ffff"/>
<rect x="1038" y="549" width="2" height="1" fill="#000"/>
<rect x="1039" y="551" width="1" height="1" fill="#000"/>
<rect x="1041" y="547" width="2" height="5" fill="#00ffff"/>
<rect x="1087" y="547" width="5" height="5" fill="#00ffff"/>
<rect x="1090" y="548" width="1" height="2" fill="#000"/>
<rect x="1088" y="551" width="1" height="-3" fill="#000"/>
<rect x="1092" y="547" width="5" height="5" fill="#00ffff"/>
<rect x="1093" y="549" width="2" height="2" fill="#000"/>
<rect x="1094" y="547" width="1" height="5" fill="#000"/>
<rect x="925" y="554" width="5" height="5" fill="#00ffff"/>
<rect x="927" y="555" width="2" height="1" fill="#000"/>
<rect x="936" y="554" width="5" height="5" fill="#00ffff"/>
<rect x="939" y="557" width="2" height="1" fill="#000"/>
<rect x="942" y="554" width="5" height="5" fill="#00ffff"/>
<rect x="945" y="556" width="1" height="1" fill="#000"/>
<rect x="944" y="558" width="1" height="-3" fill="#000"/>
<rect x="948" y="554" width="5" height="5" fill="#00ffff"/>
<rect x="950" y="555" width="1" height="2" fill="#000"/>
<rect x="954" y="554" width="4" height="5" fill="#00ffff"/>
<rect x="956" y="557" width="1" height="1" fill="#000"/>
<rect x="955" y="558" width="1" height="1" fill="#000"/>
<rect x="959" y="554" width="3" height="5" fill="#00ffff"/>
<rect x="960" y="556" width="1" height="2" fill="#000"/>
<rect x="961" y="558" width="1" height="1" fill="#000"/>
<rect x="969" y="554" width="5" height="5" fill="#00ffff"/>
<rect x="971" y="555" width="2" height="2" fill="#000"/>
<rect x="969" y="554" width="1" height="5" fill="#000"/>
<rect x="975" y="554" width="5" height="5" fill="#00ffff"/>
<rect x="978" y="556" width="1" height="2" fill="#000"/>
<rect x="975" y="558" width="1" height="1" fill="#000"/>
<rect x="981" y="554" width="5" height="5" fill="#00ffff"/>
<rect x="984" y="556" width="2" height="2" fill="#000"/>
<rect x="987" y="554" width="6" height="5" fill="#00ffff"/>
<rect x="989" y="555" width="1" height="1" fill="#000"/>
<rect x="990" y="558" width="1" height="-3" fill="#000"/>
<rect x="993" y="554" width="4" height="5" fill="#00ffff"/>
<rect x="995" y="555" width="1" height="2" fill="#000"/>
<rect x="1019" y="554" width="4" height="5" fill="#00ffff"/>
<rect x="1021" y="557" width="1" height="1" fill="#000"/>
<rect x="1035" y="554" width="5" height="5" fill="#00ffff"/>
<rect x="1036" y="556" width="1" height="2" fill="#000"/>
<rect x="1035" y="558" width="1" height="-3" fill="#000"/>
<rect x="1041" y="554" width="2" height="5" fill="#00ffff"/>
<rect x="1083" y="554" width="4" height="5" fill="#00ffff"/>
<rect x="1084" y="556" width="2" height="2" fill="#000"/>
<rect x="1088" y="554" width="6" height="5" fill="#00ffff"/>
<rect x="1090" y="556" width="2" height="2" fill="#000"/>
<rect x="1088" y="554" width="1" height="5" fill="#000"/>
<rect x="1096" y="554" width="5" height="5" fill="#00ffff"/>
<rect x="1099" y="557" width="2" height="1" fill="#000"/>
<rect x="925" y="561" width="5" height="5" fill="#00ffff"/>
<rect x="927" y="562" width="2" height="2" fill="#000"/>
<rect x="928" y="565" width="1" height="-3" fill="#000"/>
<rect x="936" y="561" width="5" height="5" fill="#00ffff"/>
<rect x="937" y="562" width="2" height="1" fill="#000"/>
<rect x="941" y="561" width="6" height="5" fill="#00ffff"/>
<rect x="943" y="562" width="2" height="1" fill="#000"/>
<rect x="948" y="561" width="4" height="5" fill="#00ffff"/>
<rect x="949" y="562" width="2" height="2" fill="#000"/>
<rect x="952" y="561" width="4" height="5" fill="#00ffff"/>
<rect x="953" y="562" width="1" height="2" fill="#000"/>
<rect x="957" y="561" width="5" height="5" fill="#00ffff"/>
<rect x="959" y="563" width="1" height="2" fill="#000"/>
<rect x="961" y="561" width="1" height="5" fill="#000"/>
<rect x="969" y="561" width="4" height="5" fill="#00ffff"/>
<rect x="971" y="562" width="2" height="1" fill="#000"/>
<rect x="969" y="561" width="1" height="5" fill="#000"/>
<rect x="975" y="561" width="6" height="5" fill="#00ffff"/>
<rect x="978" y="564" width="2" height="1" fill="#000"/>
<rect x="975" y="561" width="1" height="5" fill="#000"/>
<rect x="982" y="561" width="5" height="5" fill="#00ffff"/>
<rect x="985" y="562" width="2" height="2" fill="#000"/>
<rect x="984" y="561" width="1" height="1" fill="#000"/>
<rect x="988" y="561" width="5" height="5" fill="#00ffff"/>
<rect x="989" y="562" width="2" height="2" fill="#000"/>
<rect x="1019" y="561" width="4" height="5" fill="#00ffff"/>
<rect x="1021" y="564" width="1" height="1" fill="#000"/>
<rect x="1020" y="561" width="1" height="5" fill="#000"/>
<rect x="1036" y="561" width="4" height="5" fill="#00ffff"/>
<rect x="1038" y="564" width="1" height="1" fill="#000"/>
<rect x="1037" y="561" width="1" height="1" fill="#000"/>
<rect x="1041" y="561" width="1" height="5" fill="#00ffff"/>
<rect x="925" y="568" width="5" height="5" fill="#00ffff"/>
<rect x="926" y="569" width="2" height="2" fill="#000"/>
<rect x="926" y="572" width="1" height="1" fill="#000"/>
<rect x="936" y="568" width="6" height="5" fill="#00ffff"/>
<rect x="938" y="569" width="2" height="2" fill="#000"/>
<rect x="944" y="568" width="5" height="5" fill="#00ffff"/>
<rect x="947" y="569" width="1" height="2" fill="#000"/>
<rect x="946" y="568" width="1" height="5" fill="#000"/>
<rect x="950" y="568" width="4" height="5" fill="#00ffff"/>
<rect x="951" y="569" width="1" height="1" fill="#000"/>
<rect x="956" y="568" width="5" height="5" fill="#00ffff"/>
<rect x="958" y="569" width="2" height="2" fill="#000"/>
<rect x="958" y="572" width="1" height="-3" fill="#000"/>
<rect x="961" y="568" width="1" height="5" fill="#00ffff"/>
<rect x="969" y="568" width="4" height="5" fill="#00ffff"/>
<rect x="970" y="570" width="2" height="1" fill="#000"/>
<rect x="975" y="568" width="5" height="5" fill="#00ffff"/>
<rect x="978" y="569" width="1" height="1" fill="#000"/>
<rect x="981" y="568" width="4" height="5" fill="#00ffff"/>
<rect x="982" y="571" width="2" height="1" fill="#000"/>
<rect x="982" y="572" width="1" height="-3" fill="#000"/>
<rect x="986" y="568" width="3" height="5" fill="#00ffff"/>
<rect x="987" y="570" width="2" height="2" fill="#000"/>
<rect x="986" y="568" width="1" height="5" fill="#000"/>
<rect x="1019" y="568" width="4" height="5" fill="#00ffff"/>
<rect x="1020" y="570" width="2" height="1" fill="#000"/>
<rect x="1036" y="568" width="5" height="5" fill="#00ffff"/>
<rect x="1039" y="569" width="1" height="2" fill="#000"/>
<rect x="1040" y="568" width="1" height="5" fill="#000"/>
<rect x="925" y="576" width="4" height="5" fill="#00ffff"/>
<rect x="926" y="577" width="1" height="2" fill="#000"/>
<rect x="927" y="576" width="1" height="1" fill="#000"/>
<rect x="945" y="576" width="3" height="5" fill="#00ffff"/>
<rect x="946" y="578" width="1" height="2" fill="#000"/>
<rect x="960" y="576" width="3" height="5" fill="#00ffff"/>
<rect x="961" y="577" width="1" height="2" fill="#000"/>
<rect x="961" y="576" width="1" height="1" fill="#000"/>
<rect x="980" y="576" width="3" height="5" fill="#00ffff"/>
<rect x="981" y="577" width="1" height="1" fill="#000"/>
<rect x="980" y="580" width="1" height="1" fill="#000"/>
<rect x="1002" y="576" width="3" height="5" fill="#00ffff"/>
<rect x="1003" y="577" width="1" height="1" fill="#000"/>
<rect x="1004" y="576" width="1" height="1" fill="#000"/>
<rect x="1019" y="576" width="4" height="5" fill="#00ffff"/>
<rect x="1021" y="578" width="2" height="2" fill="#000"/>
<rect x="1020" y="576" width="1" height="5" fill="#000"/>
<rect x="1035" y="576" width="3" height="5" fill="#00ffff"/>
<rect x="1036" y="577" width="2" height="2" fill="#000"/>
<rect x="1046" y="576" width="3" height="5" fill="#00ffff"/>
<rect x="1047" y="578" width="2" height="2" fill="#000"/>
<rect x="1057" y="576" width="5" height="5" fill="#00ffff"/>
<rect x="1059" y="578" width="2" height="1" fill="#000"/>
<rect x="1057" y="580" width="1" height="-3" fill="#000"/>
<rect x="1064" y="576" width="5" height="5" fill="#00ffff"/>
<rect x="1066" y="577" width="1" height="2" fill="#000"/>
<rect x="1083" y="576" width="3" height="5" fill="#00ffff"/>
<rect x="1084" y="578" width="2" height="2" fill="#000"/>
<rect x="1095" y="576" width="3" height="5" fill="#00ffff"/>
<rect x="1096" y="578" width="1" height="2" fill="#000"/>
<rect x="1096" y="580" width="1" height="1" fill="#000"/>
<line x1="922" y1="583.5" x2="1105" y2="583.5" stroke="#00ff00" stroke-width="1" />
<line x1="922.5" y1="583" x2="922.5" y2="629" stroke="#00ff00" stroke-width="1" />
<line x1="922" y1="587.5" x2="989" y2="587.5" stroke="#ffffff" stroke-width="1" />
<line x1="922" y1="592.5" x2="989" y2="592.5" stroke="#ffffff" stroke-width="1" />
<line x1="922" y1="596.5" x2="989" y2="596.5" stroke="#ffffff" stroke-width="1" />
<line x1="922" y1="600.5" x2="989" y2="600.5" stroke="#ffffff" stroke-width="1" />
<line x1="922" y1="605.5" x2="989" y2="605.5" stroke="#00ff00" stroke-width="1" />
<line x1="922" y1="611.5" x2="989" y2="611.5" stroke="#ffffff" stroke-width="1" />
<line x1="922" y1="617.5" x2="989" y2="617.5" stroke="#ffffff" stroke-width="1" />
<line x1="922" y1="623.5" x2="989" y2="623.5" stroke="#ffffff" stroke-width="1" />
<line x1="932.5" y1="583" x2="932.5" y2="605" stroke="#00ff00" stroke-width="1" />
<line x1="940.5" y1="583" x2="940.5" y2="629" stroke="#00ff00" stroke-width="1" />
<line x1="959.5" y1="583" x2="959.5" y2="605" stroke="#00ff00" stroke-width="1" />
<line x1="974.5" y1="583" x2="974.5" y2="605" stroke="#00ff00" stroke-width="1" />
<line x1="957.5" y1="605" x2="957.5" y2="629" stroke="#00ff00" stroke-width="1" />
<line x1="972.5" y1="605" x2="972.5" y2="629" stroke="#00ff00" stroke-width="1" />
<line x1="932.5" y1="605" x2="932.5" y2="629" stroke="#ffffff" stroke-width="1" />
<line x1="989.5" y1="583" x2="989.5" y2="629" stroke="#00ff00" stroke-width="1" />
<line x1="1051.5" y1="583" x2="1051.5" y2="629" stroke="#00ff00" stroke-width="1" />
<line x1="989" y1="605.5" x2="1051" y2="605.5" stroke="#00ff00" stroke-width="1" />
<line x1="989" y1="611.5" x2="1051" y2="611.5" stroke="#00ff00" stroke-width="1" />
<line x1="989" y1="621.5" x2="1051" y2="621.5" stroke="#00ff00" stroke-width="1" />
<line x1="1022.5" y1="605" x2="1022.5" y2="629" stroke="#ffffff" stroke-width="1" />
<line x1="1037.5" y1="605" x2="1037.5" y2="621" stroke="#ffffff" stroke-width="1" />
<line x1="996.5" y1="611" x2="996.5" y2="621" stroke="#ffffff" stroke-width="1" />
<line x1="1005.5" y1="611" x2="1005.5" y2="621" stroke="#ffffff" stroke-width="1" />
<line x1="1013.5" y1="611" x2="1013.5" y2="621" stroke="#ffffff" stroke-width="1" />
<line x1="1051" y1="598.5" x2="1105" y2="598.5" stroke="#00ff00" stroke-width="1" />
<line x1="1051" y1="614.5" x2="1105" y2="614.5" stroke="#00ff00" stroke-width="1" />
<text x="999" y="594" fill="#00ffff" font-size="7.5" font-weight="bold" textLength="12" lengthAdjust="spacingAndGlyphs">M2510</text>
<rect x="1013" y="589" width="4" height="5" fill="#00ffff"/>
<rect x="1014" y="590" width="2" height="2" fill="#000"/>
<rect x="1014" y="593" width="1" height="-3" fill="#000"/>
<rect x="1019" y="589" width="5" height="5" fill="#00ffff"/>
<rect x="1020" y="592" width="1" height="1" fill="#000"/>
<rect x="1025" y="589" width="5" height="5" fill="#00ffff"/>
<rect x="1027" y="591" width="2" height="2" fill="#000"/>
<rect x="1029" y="589" width="1" height="1" fill="#000"/>
<rect x="1030" y="589" width="5" height="5" fill="#00ffff"/>
<rect x="1033" y="590" width="2" height="1" fill="#000"/>
<rect x="1036" y="589" width="6" height="5" fill="#00ffff"/>
<rect x="1039" y="590" width="1" height="1" fill="#000"/>
<rect x="1037" y="593" width="1" height="-3" fill="#000"/>
<rect x="1015" y="596" width="5" height="5" fill="#00ffff"/>
<rect x="1016" y="597" width="1" height="2" fill="#000"/>
<rect x="1021" y="596" width="5" height="5" fill="#00ffff"/>
<rect x="1022" y="598" width="2" height="1" fill="#000"/>
<rect x="1021" y="600" width="1" height="1" fill="#000"/>
<text x="1062" y="594.5" fill="#00ffff" font-size="8.5" textLength="33" lengthAdjust="spacingAndGlyphs" stroke="#00ffff" stroke-width="0.3">M2S00-00-00</text>
<rect x="1074" y="604" width="3" height="5" fill="#00ffff"/>
<rect x="1080" y="604" width="3" height="5" fill="#00ffff"/>
<rect x="994" y="607" width="2" height="3" fill="#00ffff"/>
<rect x="1001" y="607" width="2" height="3" fill="#00ffff"/>
<rect x="1007" y="607" width="2" height="3" fill="#00ffff"/>
<rect x="1014" y="607" width="2" height="3" fill="#00ffff"/>
<rect x="1025" y="607" width="2" height="3" fill="#00ffff"/>
<rect x="1032" y="607" width="2" height="3" fill="#00ffff"/>
<rect x="1041" y="607" width="2" height="3" fill="#00ffff"/>
<rect x="1047" y="607" width="2" height="3" fill="#00ffff"/>
<rect x="995" y="624" width="2" height="4" fill="#00ffff"/>
<rect x="1015" y="624" width="2" height="4" fill="#00ffff"/>
<rect x="1028" y="624" width="2" height="4" fill="#00ffff"/>
<rect x="1044" y="624" width="2" height="4" fill="#00ffff"/>
<rect x="1040" y="615" width="5" height="4" fill="#00ffff"/>
<rect x="1042" y="617" width="1" height="1" fill="#000"/>
<rect x="1046" y="615" width="3" height="4" fill="#00ffff"/>
<rect x="1047" y="616" width="2" height="1" fill="#000"/>
<rect x="1046" y="618" width="1" height="1" fill="#000"/>
<rect x="925" y="606" width="2" height="4" fill="#00ffff"/>
<rect x="934" y="606" width="2" height="4" fill="#00ffff"/>
<rect x="925" y="612" width="2" height="4" fill="#00ffff"/>
<rect x="934" y="612" width="2" height="4" fill="#00ffff"/>
<rect x="925" y="618" width="2" height="4" fill="#00ffff"/>
<rect x="934" y="618" width="2" height="4" fill="#00ffff"/>
<rect x="925" y="624" width="2" height="4" fill="#00ffff"/>
<rect x="934" y="624" width="2" height="4" fill="#00ffff"/>
<rect x="960" y="606" width="5" height="4" fill="#00ffff"/>
<rect x="962" y="608" width="1" height="1" fill="#000"/>
<rect x="964" y="606" width="1" height="4" fill="#000"/>
<rect x="966" y="606" width="4" height="4" fill="#00ffff"/>
<rect x="968" y="607" width="1" height="2" fill="#000"/>
<rect x="969" y="606" width="1" height="4" fill="#000"/>
<rect x="924" y="601" width="4" height="4" fill="#00ffff"/>
<rect x="926" y="602" width="1" height="1" fill="#000"/>
<rect x="924" y="604" width="1" height="-2" fill="#000"/>
<rect x="933" y="601" width="4" height="4" fill="#00ffff"/>
<rect x="935" y="602" width="1" height="1" fill="#000"/>
<rect x="933" y="604" width="1" height="1" fill="#000"/>
<rect x="944" y="601" width="4" height="4" fill="#00ffff"/>
<rect x="945" y="603" width="1" height="1" fill="#000"/>
<rect x="945" y="604" width="1" height="-2" fill="#000"/>
<rect x="949" y="601" width="5" height="4" fill="#00ffff"/>
<rect x="951" y="603" width="1" height="1" fill="#000"/>
<rect x="950" y="601" width="1" height="1" fill="#000"/>
<rect x="962" y="601" width="4" height="4" fill="#00ffff"/>
<rect x="963" y="603" width="2" height="1" fill="#000"/>
<rect x="962" y="601" width="1" height="4" fill="#000"/>
<rect x="972" y="601" width="4" height="4" fill="#00ffff"/>
<rect x="973" y="602" width="1" height="2" fill="#000"/>
<rect x="973" y="601" width="1" height="1" fill="#000"/>
<rect x="977" y="601" width="5" height="4" fill="#00ffff"/>
<rect x="979" y="602" width="2" height="2" fill="#000"/>
<rect x="984" y="601" width="2" height="4" fill="#00ffff"/>
<rect x="214.5" y="618.5" width="12" height="12" stroke="#ffffff" stroke-width="1" fill="none"/>
<line x1="220.5" y1="565" x2="220.5" y2="618" stroke="#ffffff" stroke-width="1" />
<path d="M215 565.5 L220.5 552 L226 565.5 Z" stroke="#ffffff" stroke-width="1" fill="none"/>
<path d="M218.5 565 L220.5 553 L222.5 565" stroke="#ffffff" stroke-width="1" fill="none"/>
<line x1="226" y1="624.5" x2="279" y2="624.5" stroke="#ffffff" stroke-width="1" />
<path d="M279 618.5 L293 624.5 L279 630.5 Z" stroke="#ffffff" stroke-width="1" fill="none"/>
<path d="M279.5 622 L292 624.5 L279.5 627" stroke="#ffffff" stroke-width="1" fill="none"/>
<path d="M215 528 L220.5 535 L226 528 M220.5 535 L220.5 542" stroke="#ffffff" stroke-width="1" fill="none"/>
<path d="M304 618 L314 631 M314 618 L304 631" stroke="#ffffff" stroke-width="1" fill="none"/>
</g>
</svg>
<!-- tab bar -->
<div class="abs" style="left:202px;top:645px;width:954px;height:14px;background:#f0f0f0"></div>
<div class="abs" style="left:200px;top:645px;width:2px;height:14px;background:#9a9a9a"></div>
<div class="abs tbtn" style="left:202px;top:645px;width:18px;height:14px"></div>
<div class="abs tbtn" style="left:220px;top:645px;width:18px;height:14px"></div>
<div class="abs tbtn" style="left:238px;top:645px;width:18px;height:14px"></div>
<div class="abs tbtn" style="left:256px;top:645px;width:17px;height:14px"></div>
<svg class="abs" style="left:202px;top:645px" width="72" height="15" viewBox="0 0 72 15">
 <rect x="4" y="3" width="1.6" height="9" fill="#000"/><path d="M13 3 L7 7.5 L13 12 Z" fill="#000"/>
 <path d="M30 3 L24 7.5 L30 12 Z" fill="#000"/>
 <path d="M40 3 L46 7.5 L40 12 Z" fill="#000"/>
 <path d="M57 3 L63 7.5 L57 12 Z" fill="#000"/><rect x="64" y="3" width="1.6" height="9" fill="#000"/>
</svg>
<svg class="abs" style="left:270px;top:645px" width="100" height="15" viewBox="0 0 100 15">
 <path d="M6.5 -1 L12.5 13.5 L42.5 13.5 L46 -1 Z" fill="#000"/>
 <path d="M5 0 L11 14" stroke="#fff" stroke-width="1"/>
 <path d="M47.5 0 L44 14" stroke="#fff" stroke-width="1"/>
 <path d="M45.5 0.5 L48 13.5 L85 13.5 L88.5 0.5" fill="#f0f0f0" stroke="#000" stroke-width="1.2"/>
</svg>
<div class="abs" style="left:285px;top:644px;font-size:12.5px;line-height:14px;color:#fff">模型</div>
<div class="abs" style="left:321px;top:644px;font-size:12.5px;line-height:14px;color:#000">布局1</div>
<div class="abs" style="left:174px;top:659px;width:982px;height:16px;background:#f0f0f0;border-top:1px solid #fff"></div>
<div class="abs" style="left:174px;top:665px;width:982px;height:2px;background:#8a8a8a;border-top:1px solid #6a6a6a"></div>
<div class="abs" style="left:174px;top:667px;width:982px;height:8px;background:#f0f0f0"></div>
</body></html>
